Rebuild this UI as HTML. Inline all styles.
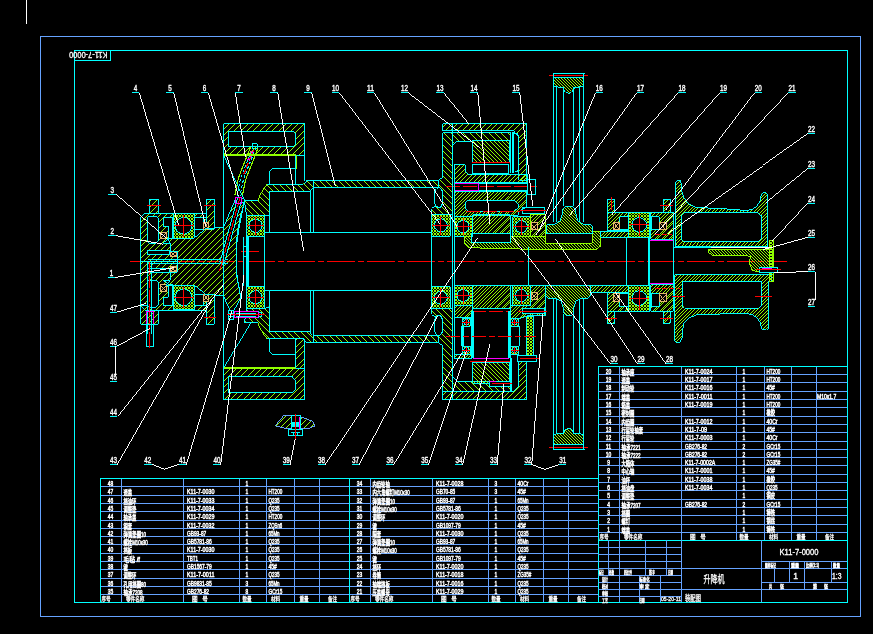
<!DOCTYPE html>
<html><head><meta charset="utf-8"><title>K11-7-0000</title>
<style>
html,body{margin:0;padding:0;background:#000;overflow:hidden}
svg{display:block;will-change:transform;font-family:"Liberation Sans","Noto Sans CJK SC",sans-serif}
</style></head><body>
<svg width="873" height="634" viewBox="0 0 873 634" shape-rendering="crispEdges">
<defs>
<pattern id="h1" width="5.3" height="5.3" patternUnits="userSpaceOnUse"><path d="M-1 6.3 L6.3 -1 M-1 1 L1 -1 M4.3 6.3 L6.3 4.3" stroke="#90ff00" stroke-width="1.1" shape-rendering="crispEdges"/></pattern>
<pattern id="h6" width="6" height="6" patternUnits="userSpaceOnUse"><path d="M-1 7 L7 -1 M-1 1 L1 -1 M5 7 L7 5" stroke="#90ff00" stroke-width="1.1" shape-rendering="crispEdges"/></pattern>
<pattern id="h2" width="3.5" height="3.5" patternUnits="userSpaceOnUse"><path d="M-1 4.5 L4.5 -1 M-1 1 L1 -1 M2.5 4.5 L4.5 2.5" stroke="#90ff00" stroke-width="1.0" shape-rendering="crispEdges"/></pattern>
<pattern id="h44" width="4.4" height="4.4" patternUnits="userSpaceOnUse"><path d="M-1 5.4 L5.4 -1 M-1 1 L1 -1 M3.4000000000000004 5.4 L5.4 3.4000000000000004" stroke="#90ff00" stroke-width="1.0" shape-rendering="crispEdges"/></pattern>
<pattern id="h57" width="5.7" height="5.7" patternUnits="userSpaceOnUse"><path d="M-1 6.7 L6.7 -1 M-1 1 L1 -1 M4.7 6.7 L6.7 4.7" stroke="#90ff00" stroke-width="1.1" shape-rendering="crispEdges"/></pattern>
<pattern id="h3" width="5.5" height="5.5" patternUnits="userSpaceOnUse"><path d="M-1 -1 L6.5 6.5 M4.5 -1 L6.5 1 M-1 4.5 L1 6.5" stroke="#90ff00" stroke-width="1.1" shape-rendering="crispEdges"/></pattern>
<pattern id="h7" width="7" height="7" patternUnits="userSpaceOnUse"><path d="M-1 -1 L8 8 M6 -1 L8 1 M-1 6 L1 8" stroke="#90ff00" stroke-width="1.1" shape-rendering="crispEdges"/></pattern>
<pattern id="h42" width="4.2" height="4.2" patternUnits="userSpaceOnUse"><path d="M-1 -1 L5.2 5.2 M3.2 -1 L5.2 1 M-1 3.2 L1 5.2" stroke="#90ff00" stroke-width="1.0" shape-rendering="crispEdges"/></pattern>
<pattern id="h4" width="3" height="3" patternUnits="userSpaceOnUse"><path d="M-1 -1 L4 4 M2 -1 L4 1 M-1 2 L1 4" stroke="#90ff00" stroke-width="0.95" shape-rendering="crispEdges"/></pattern>
<pattern id="hx" width="3" height="3" patternUnits="userSpaceOnUse"><path d="M-1 -1 L4 4 M-1 4 L4 -1" stroke="#90ff00" stroke-width="0.8" shape-rendering="crispEdges"/></pattern>
</defs>
<rect width="873" height="634" fill="#000"/>
<rect x="26.00" y="0.00" width="1" height="24.00" fill="#ffffff"/>
<rect x="40.5" y="36.5" width="820" height="580" fill="none" stroke="#66a3ff" stroke-width="1"/>
<rect x="74.5" y="50.5" width="773" height="552" fill="none" stroke="#00ffff" stroke-width="1"/>
<rect x="74.00" y="60.00" width="37.00" height="1" fill="#00ffff"/>
<rect x="110.00" y="50.00" width="1" height="11.00" fill="#00ffff"/>
<text transform="translate(107.5,51.5) rotate(180)" x="0" y="0" font-size="9" fill="#ffffff" textLength="38.5" lengthAdjust="spacingAndGlyphs" stroke="#fff" stroke-width="0.3">K11-7-0000</text>
<rect x="100.00" y="486.00" width="249.00" height="1" fill="#66a3ff"/>
<rect x="100.00" y="495.00" width="249.00" height="1" fill="#66a3ff"/>
<rect x="100.00" y="503.00" width="249.00" height="1" fill="#66a3ff"/>
<rect x="100.00" y="511.00" width="249.00" height="1" fill="#66a3ff"/>
<rect x="100.00" y="520.00" width="249.00" height="1" fill="#66a3ff"/>
<rect x="100.00" y="528.00" width="249.00" height="1" fill="#66a3ff"/>
<rect x="100.00" y="536.00" width="249.00" height="1" fill="#66a3ff"/>
<rect x="100.00" y="544.00" width="249.00" height="1" fill="#66a3ff"/>
<rect x="100.00" y="553.00" width="249.00" height="1" fill="#66a3ff"/>
<rect x="100.00" y="561.00" width="249.00" height="1" fill="#66a3ff"/>
<rect x="100.00" y="569.00" width="249.00" height="1" fill="#66a3ff"/>
<rect x="100.00" y="578.00" width="249.00" height="1" fill="#66a3ff"/>
<rect x="100.00" y="586.00" width="249.00" height="1" fill="#66a3ff"/>
<rect x="100.00" y="594.00" width="249.00" height="1" fill="#66a3ff"/>
<rect x="121.00" y="478.00" width="1" height="124.00" fill="#66a3ff"/>
<rect x="183.00" y="478.00" width="1" height="124.00" fill="#66a3ff"/>
<rect x="239.00" y="478.00" width="1" height="124.00" fill="#66a3ff"/>
<rect x="266.00" y="478.00" width="1" height="124.00" fill="#66a3ff"/>
<rect x="294.00" y="478.00" width="1" height="124.00" fill="#66a3ff"/>
<rect x="319.00" y="478.00" width="1" height="124.00" fill="#66a3ff"/>
<text x="110.50" y="485.70" font-size="7" fill="#ffffff" text-anchor="middle" textLength="5.50" lengthAdjust="spacingAndGlyphs" stroke="#fff" stroke-width="0.5">48</text>
<text x="245.50" y="485.70" font-size="7" fill="#ffffff" text-anchor="start" textLength="2.75" lengthAdjust="spacingAndGlyphs" stroke="#fff" stroke-width="0.5">1</text>
<text x="110.50" y="493.70" font-size="7" fill="#ffffff" text-anchor="middle" textLength="5.50" lengthAdjust="spacingAndGlyphs" stroke="#fff" stroke-width="0.5">47</text>
<text x="123.50" y="494.50" font-size="6.3" fill="#ffffff" text-anchor="start" textLength="8.60" lengthAdjust="spacingAndGlyphs" stroke="#fff" stroke-width="0.5">透盖</text>
<text x="187.00" y="493.70" font-size="7" fill="#ffffff" text-anchor="start" textLength="27.50" lengthAdjust="spacingAndGlyphs" stroke="#fff" stroke-width="0.5">K11-7-0030</text>
<text x="245.50" y="493.70" font-size="7" fill="#ffffff" text-anchor="start" textLength="2.75" lengthAdjust="spacingAndGlyphs" stroke="#fff" stroke-width="0.5">1</text>
<text x="268.50" y="493.70" font-size="7" fill="#ffffff" text-anchor="start" textLength="13.75" lengthAdjust="spacingAndGlyphs" stroke="#fff" stroke-width="0.5">HT200</text>
<text x="110.50" y="502.70" font-size="7" fill="#ffffff" text-anchor="middle" textLength="5.50" lengthAdjust="spacingAndGlyphs" stroke="#fff" stroke-width="0.5">46</text>
<text x="123.50" y="503.50" font-size="6.3" fill="#ffffff" text-anchor="start" textLength="12.90" lengthAdjust="spacingAndGlyphs" stroke="#fff" stroke-width="0.5">挡油环</text>
<text x="187.00" y="502.70" font-size="7" fill="#ffffff" text-anchor="start" textLength="27.50" lengthAdjust="spacingAndGlyphs" stroke="#fff" stroke-width="0.5">K11-7-0033</text>
<text x="245.50" y="502.70" font-size="7" fill="#ffffff" text-anchor="start" textLength="2.75" lengthAdjust="spacingAndGlyphs" stroke="#fff" stroke-width="0.5">1</text>
<text x="268.50" y="502.70" font-size="7" fill="#ffffff" text-anchor="start" textLength="11.00" lengthAdjust="spacingAndGlyphs" stroke="#fff" stroke-width="0.5">Q235</text>
<text x="110.50" y="510.70" font-size="7" fill="#ffffff" text-anchor="middle" textLength="5.50" lengthAdjust="spacingAndGlyphs" stroke="#fff" stroke-width="0.5">45</text>
<text x="123.50" y="511.50" font-size="6.3" fill="#ffffff" text-anchor="start" textLength="12.90" lengthAdjust="spacingAndGlyphs" stroke="#fff" stroke-width="0.5">调整垫</text>
<text x="187.00" y="510.70" font-size="7" fill="#ffffff" text-anchor="start" textLength="27.50" lengthAdjust="spacingAndGlyphs" stroke="#fff" stroke-width="0.5">K11-7-0034</text>
<text x="245.50" y="510.70" font-size="7" fill="#ffffff" text-anchor="start" textLength="2.75" lengthAdjust="spacingAndGlyphs" stroke="#fff" stroke-width="0.5">1</text>
<text x="268.50" y="510.70" font-size="7" fill="#ffffff" text-anchor="start" textLength="11.00" lengthAdjust="spacingAndGlyphs" stroke="#fff" stroke-width="0.5">Q235</text>
<text x="110.50" y="518.70" font-size="7" fill="#ffffff" text-anchor="middle" textLength="5.50" lengthAdjust="spacingAndGlyphs" stroke="#fff" stroke-width="0.5">44</text>
<text x="123.50" y="519.50" font-size="6.3" fill="#ffffff" text-anchor="start" textLength="12.90" lengthAdjust="spacingAndGlyphs" stroke="#fff" stroke-width="0.5">轴承盖</text>
<text x="187.00" y="518.70" font-size="7" fill="#ffffff" text-anchor="start" textLength="27.50" lengthAdjust="spacingAndGlyphs" stroke="#fff" stroke-width="0.5">K11-7-0029</text>
<text x="245.50" y="518.70" font-size="7" fill="#ffffff" text-anchor="start" textLength="2.75" lengthAdjust="spacingAndGlyphs" stroke="#fff" stroke-width="0.5">1</text>
<text x="268.50" y="518.70" font-size="7" fill="#ffffff" text-anchor="start" textLength="13.75" lengthAdjust="spacingAndGlyphs" stroke="#fff" stroke-width="0.5">HT200</text>
<text x="110.50" y="527.70" font-size="7" fill="#ffffff" text-anchor="middle" textLength="5.50" lengthAdjust="spacingAndGlyphs" stroke="#fff" stroke-width="0.5">43</text>
<text x="123.50" y="528.50" font-size="6.3" fill="#ffffff" text-anchor="start" textLength="8.60" lengthAdjust="spacingAndGlyphs" stroke="#fff" stroke-width="0.5">铜套</text>
<text x="187.00" y="527.70" font-size="7" fill="#ffffff" text-anchor="start" textLength="27.50" lengthAdjust="spacingAndGlyphs" stroke="#fff" stroke-width="0.5">K11-7-0032</text>
<text x="245.50" y="527.70" font-size="7" fill="#ffffff" text-anchor="start" textLength="2.75" lengthAdjust="spacingAndGlyphs" stroke="#fff" stroke-width="0.5">1</text>
<text x="268.50" y="527.70" font-size="7" fill="#ffffff" text-anchor="start" textLength="13.75" lengthAdjust="spacingAndGlyphs" stroke="#fff" stroke-width="0.5">ZQSn6</text>
<text x="110.50" y="535.70" font-size="7" fill="#ffffff" text-anchor="middle" textLength="5.50" lengthAdjust="spacingAndGlyphs" stroke="#fff" stroke-width="0.5">42</text>
<text x="123.50" y="536.50" font-size="6.3" fill="#ffffff" text-anchor="start" textLength="22.40" lengthAdjust="spacingAndGlyphs" stroke="#fff" stroke-width="0.5">弹簧垫圈10</text>
<text x="187.00" y="535.70" font-size="7" fill="#ffffff" text-anchor="start" textLength="19.25" lengthAdjust="spacingAndGlyphs" stroke="#fff" stroke-width="0.5">GB93-87</text>
<text x="245.50" y="535.70" font-size="7" fill="#ffffff" text-anchor="start" textLength="2.75" lengthAdjust="spacingAndGlyphs" stroke="#fff" stroke-width="0.5">1</text>
<text x="268.50" y="535.70" font-size="7" fill="#ffffff" text-anchor="start" textLength="11.00" lengthAdjust="spacingAndGlyphs" stroke="#fff" stroke-width="0.5">65Mn</text>
<text x="110.50" y="543.70" font-size="7" fill="#ffffff" text-anchor="middle" textLength="5.50" lengthAdjust="spacingAndGlyphs" stroke="#fff" stroke-width="0.5">41</text>
<text x="123.50" y="544.50" font-size="6.3" fill="#ffffff" text-anchor="start" textLength="24.20" lengthAdjust="spacingAndGlyphs" stroke="#fff" stroke-width="0.5">螺栓M10x30</text>
<text x="187.00" y="543.70" font-size="7" fill="#ffffff" text-anchor="start" textLength="24.75" lengthAdjust="spacingAndGlyphs" stroke="#fff" stroke-width="0.5">GB5781-86</text>
<text x="245.50" y="543.70" font-size="7" fill="#ffffff" text-anchor="start" textLength="2.75" lengthAdjust="spacingAndGlyphs" stroke="#fff" stroke-width="0.5">1</text>
<text x="268.50" y="543.70" font-size="7" fill="#ffffff" text-anchor="start" textLength="11.00" lengthAdjust="spacingAndGlyphs" stroke="#fff" stroke-width="0.5">Q235</text>
<text x="110.50" y="551.70" font-size="7" fill="#ffffff" text-anchor="middle" textLength="5.50" lengthAdjust="spacingAndGlyphs" stroke="#fff" stroke-width="0.5">40</text>
<text x="123.50" y="552.50" font-size="6.3" fill="#ffffff" text-anchor="start" textLength="8.60" lengthAdjust="spacingAndGlyphs" stroke="#fff" stroke-width="0.5">挡板</text>
<text x="187.00" y="551.70" font-size="7" fill="#ffffff" text-anchor="start" textLength="27.50" lengthAdjust="spacingAndGlyphs" stroke="#fff" stroke-width="0.5">K11-7-0030</text>
<text x="245.50" y="551.70" font-size="7" fill="#ffffff" text-anchor="start" textLength="2.75" lengthAdjust="spacingAndGlyphs" stroke="#fff" stroke-width="0.5">1</text>
<text x="268.50" y="551.70" font-size="7" fill="#ffffff" text-anchor="start" textLength="11.00" lengthAdjust="spacingAndGlyphs" stroke="#fff" stroke-width="0.5">Q235</text>
<text x="110.50" y="560.70" font-size="7" fill="#ffffff" text-anchor="middle" textLength="5.50" lengthAdjust="spacingAndGlyphs" stroke="#fff" stroke-width="0.5">39</text>
<text x="123.50" y="561.50" font-size="6.3" fill="#ffffff" text-anchor="start" textLength="16.40" lengthAdjust="spacingAndGlyphs" stroke="#fff" stroke-width="0.5">毛毡 /f</text>
<text x="187.00" y="560.70" font-size="7" fill="#ffffff" text-anchor="start" textLength="11.00" lengthAdjust="spacingAndGlyphs" stroke="#fff" stroke-width="0.5">TBT1</text>
<text x="245.50" y="560.70" font-size="7" fill="#ffffff" text-anchor="start" textLength="2.75" lengthAdjust="spacingAndGlyphs" stroke="#fff" stroke-width="0.5">1</text>
<text x="268.50" y="560.70" font-size="7" fill="#ffffff" text-anchor="start" textLength="11.00" lengthAdjust="spacingAndGlyphs" stroke="#fff" stroke-width="0.5">Q235</text>
<text x="110.50" y="568.70" font-size="7" fill="#ffffff" text-anchor="middle" textLength="5.50" lengthAdjust="spacingAndGlyphs" stroke="#fff" stroke-width="0.5">38</text>
<text x="123.50" y="569.50" font-size="6.3" fill="#ffffff" text-anchor="start" textLength="4.30" lengthAdjust="spacingAndGlyphs" stroke="#fff" stroke-width="0.5">键</text>
<text x="187.00" y="568.70" font-size="7" fill="#ffffff" text-anchor="start" textLength="24.75" lengthAdjust="spacingAndGlyphs" stroke="#fff" stroke-width="0.5">GB1567-79</text>
<text x="245.50" y="568.70" font-size="7" fill="#ffffff" text-anchor="start" textLength="2.75" lengthAdjust="spacingAndGlyphs" stroke="#fff" stroke-width="0.5">1</text>
<text x="268.50" y="568.70" font-size="7" fill="#ffffff" text-anchor="start" textLength="8.25" lengthAdjust="spacingAndGlyphs" stroke="#fff" stroke-width="0.5">45#</text>
<text x="110.50" y="576.70" font-size="7" fill="#ffffff" text-anchor="middle" textLength="5.50" lengthAdjust="spacingAndGlyphs" stroke="#fff" stroke-width="0.5">37</text>
<text x="123.50" y="577.50" font-size="6.3" fill="#ffffff" text-anchor="start" textLength="12.90" lengthAdjust="spacingAndGlyphs" stroke="#fff" stroke-width="0.5">调整环</text>
<text x="187.00" y="576.70" font-size="7" fill="#ffffff" text-anchor="start" textLength="27.50" lengthAdjust="spacingAndGlyphs" stroke="#fff" stroke-width="0.5">K11-7-0011</text>
<text x="245.50" y="576.70" font-size="7" fill="#ffffff" text-anchor="start" textLength="2.75" lengthAdjust="spacingAndGlyphs" stroke="#fff" stroke-width="0.5">1</text>
<text x="268.50" y="576.70" font-size="7" fill="#ffffff" text-anchor="start" textLength="11.00" lengthAdjust="spacingAndGlyphs" stroke="#fff" stroke-width="0.5">Q235</text>
<text x="110.50" y="585.70" font-size="7" fill="#ffffff" text-anchor="middle" textLength="5.50" lengthAdjust="spacingAndGlyphs" stroke="#fff" stroke-width="0.5">36</text>
<text x="123.50" y="586.50" font-size="6.3" fill="#ffffff" text-anchor="start" textLength="22.40" lengthAdjust="spacingAndGlyphs" stroke="#fff" stroke-width="0.5">孔用挡圈80</text>
<text x="187.00" y="585.70" font-size="7" fill="#ffffff" text-anchor="start" textLength="24.75" lengthAdjust="spacingAndGlyphs" stroke="#fff" stroke-width="0.5">GB9831-85</text>
<text x="245.50" y="585.70" font-size="7" fill="#ffffff" text-anchor="start" textLength="2.75" lengthAdjust="spacingAndGlyphs" stroke="#fff" stroke-width="0.5">3</text>
<text x="268.50" y="585.70" font-size="7" fill="#ffffff" text-anchor="start" textLength="11.00" lengthAdjust="spacingAndGlyphs" stroke="#fff" stroke-width="0.5">65Mn</text>
<text x="110.50" y="593.70" font-size="7" fill="#ffffff" text-anchor="middle" textLength="5.50" lengthAdjust="spacingAndGlyphs" stroke="#fff" stroke-width="0.5">35</text>
<text x="123.50" y="594.50" font-size="6.3" fill="#ffffff" text-anchor="start" textLength="19.00" lengthAdjust="spacingAndGlyphs" stroke="#fff" stroke-width="0.5">轴承7208</text>
<text x="187.00" y="593.70" font-size="7" fill="#ffffff" text-anchor="start" textLength="22.00" lengthAdjust="spacingAndGlyphs" stroke="#fff" stroke-width="0.5">GB276-82</text>
<text x="245.50" y="593.70" font-size="7" fill="#ffffff" text-anchor="start" textLength="2.75" lengthAdjust="spacingAndGlyphs" stroke="#fff" stroke-width="0.5">8</text>
<text x="268.50" y="593.70" font-size="7" fill="#ffffff" text-anchor="start" textLength="13.75" lengthAdjust="spacingAndGlyphs" stroke="#fff" stroke-width="0.5">GCr15</text>
<text x="101.50" y="601.30" font-size="6" fill="#ffffff" text-anchor="start" textLength="9.20" lengthAdjust="spacingAndGlyphs" stroke="#fff" stroke-width="0.3" xml:space="preserve">序号</text>
<text x="126.00" y="601.30" font-size="6" fill="#ffffff" text-anchor="start" textLength="18.40" lengthAdjust="spacingAndGlyphs" stroke="#fff" stroke-width="0.3" xml:space="preserve">零件名称</text>
<text x="192.00" y="601.30" font-size="6" fill="#ffffff" text-anchor="start" textLength="15.80" lengthAdjust="spacingAndGlyphs" stroke="#fff" stroke-width="0.3" xml:space="preserve">图   号</text>
<text x="242.50" y="601.30" font-size="6" fill="#ffffff" text-anchor="start" textLength="9.20" lengthAdjust="spacingAndGlyphs" stroke="#fff" stroke-width="0.3" xml:space="preserve">数量</text>
<text x="271.00" y="601.30" font-size="6" fill="#ffffff" text-anchor="start" textLength="9.20" lengthAdjust="spacingAndGlyphs" stroke="#fff" stroke-width="0.3" xml:space="preserve">材料</text>
<text x="299.50" y="601.30" font-size="6" fill="#ffffff" text-anchor="start" textLength="9.20" lengthAdjust="spacingAndGlyphs" stroke="#fff" stroke-width="0.3" xml:space="preserve">重量</text>
<text x="328.00" y="601.30" font-size="6" fill="#ffffff" text-anchor="start" textLength="9.20" lengthAdjust="spacingAndGlyphs" stroke="#fff" stroke-width="0.3" xml:space="preserve">备注</text>
<rect x="349.00" y="486.00" width="249.00" height="1" fill="#66a3ff"/>
<rect x="349.00" y="495.00" width="249.00" height="1" fill="#66a3ff"/>
<rect x="349.00" y="503.00" width="249.00" height="1" fill="#66a3ff"/>
<rect x="349.00" y="511.00" width="249.00" height="1" fill="#66a3ff"/>
<rect x="349.00" y="520.00" width="249.00" height="1" fill="#66a3ff"/>
<rect x="349.00" y="528.00" width="249.00" height="1" fill="#66a3ff"/>
<rect x="349.00" y="536.00" width="249.00" height="1" fill="#66a3ff"/>
<rect x="349.00" y="544.00" width="249.00" height="1" fill="#66a3ff"/>
<rect x="349.00" y="553.00" width="249.00" height="1" fill="#66a3ff"/>
<rect x="349.00" y="561.00" width="249.00" height="1" fill="#66a3ff"/>
<rect x="349.00" y="569.00" width="249.00" height="1" fill="#66a3ff"/>
<rect x="349.00" y="578.00" width="249.00" height="1" fill="#66a3ff"/>
<rect x="349.00" y="586.00" width="249.00" height="1" fill="#66a3ff"/>
<rect x="349.00" y="594.00" width="249.00" height="1" fill="#66a3ff"/>
<rect x="370.00" y="478.00" width="1" height="124.00" fill="#66a3ff"/>
<rect x="432.00" y="478.00" width="1" height="124.00" fill="#66a3ff"/>
<rect x="488.00" y="478.00" width="1" height="124.00" fill="#66a3ff"/>
<rect x="515.00" y="478.00" width="1" height="124.00" fill="#66a3ff"/>
<rect x="543.00" y="478.00" width="1" height="124.00" fill="#66a3ff"/>
<rect x="568.00" y="478.00" width="1" height="124.00" fill="#66a3ff"/>
<text x="359.50" y="485.70" font-size="7" fill="#ffffff" text-anchor="middle" textLength="5.50" lengthAdjust="spacingAndGlyphs" stroke="#fff" stroke-width="0.5">34</text>
<text x="372.50" y="486.50" font-size="6.3" fill="#ffffff" text-anchor="start" textLength="17.20" lengthAdjust="spacingAndGlyphs" stroke="#fff" stroke-width="0.5">内齿轮轴</text>
<text x="436.00" y="485.70" font-size="7" fill="#ffffff" text-anchor="start" textLength="27.50" lengthAdjust="spacingAndGlyphs" stroke="#fff" stroke-width="0.5">K11-7-0028</text>
<text x="494.50" y="485.70" font-size="7" fill="#ffffff" text-anchor="start" textLength="2.75" lengthAdjust="spacingAndGlyphs" stroke="#fff" stroke-width="0.5">3</text>
<text x="517.50" y="485.70" font-size="7" fill="#ffffff" text-anchor="start" textLength="11.00" lengthAdjust="spacingAndGlyphs" stroke="#fff" stroke-width="0.5">40Cr</text>
<text x="359.50" y="493.70" font-size="7" fill="#ffffff" text-anchor="middle" textLength="5.50" lengthAdjust="spacingAndGlyphs" stroke="#fff" stroke-width="0.5">33</text>
<text x="372.50" y="494.50" font-size="6.3" fill="#ffffff" text-anchor="start" textLength="37.10" lengthAdjust="spacingAndGlyphs" stroke="#fff" stroke-width="0.5">内六角螺钉M10x30</text>
<text x="436.00" y="493.70" font-size="7" fill="#ffffff" text-anchor="start" textLength="19.25" lengthAdjust="spacingAndGlyphs" stroke="#fff" stroke-width="0.5">GB70-85</text>
<text x="494.50" y="493.70" font-size="7" fill="#ffffff" text-anchor="start" textLength="2.75" lengthAdjust="spacingAndGlyphs" stroke="#fff" stroke-width="0.5">3</text>
<text x="517.50" y="493.70" font-size="7" fill="#ffffff" text-anchor="start" textLength="8.25" lengthAdjust="spacingAndGlyphs" stroke="#fff" stroke-width="0.5">45#</text>
<text x="359.50" y="502.70" font-size="7" fill="#ffffff" text-anchor="middle" textLength="5.50" lengthAdjust="spacingAndGlyphs" stroke="#fff" stroke-width="0.5">32</text>
<text x="372.50" y="503.50" font-size="6.3" fill="#ffffff" text-anchor="start" textLength="22.40" lengthAdjust="spacingAndGlyphs" stroke="#fff" stroke-width="0.5">弹簧垫圈10</text>
<text x="436.00" y="502.70" font-size="7" fill="#ffffff" text-anchor="start" textLength="19.25" lengthAdjust="spacingAndGlyphs" stroke="#fff" stroke-width="0.5">GB93-87</text>
<text x="494.50" y="502.70" font-size="7" fill="#ffffff" text-anchor="start" textLength="2.75" lengthAdjust="spacingAndGlyphs" stroke="#fff" stroke-width="0.5">1</text>
<text x="517.50" y="502.70" font-size="7" fill="#ffffff" text-anchor="start" textLength="11.00" lengthAdjust="spacingAndGlyphs" stroke="#fff" stroke-width="0.5">65Mn</text>
<text x="359.50" y="510.70" font-size="7" fill="#ffffff" text-anchor="middle" textLength="5.50" lengthAdjust="spacingAndGlyphs" stroke="#fff" stroke-width="0.5">31</text>
<text x="372.50" y="511.50" font-size="6.3" fill="#ffffff" text-anchor="start" textLength="24.20" lengthAdjust="spacingAndGlyphs" stroke="#fff" stroke-width="0.5">螺栓M10x30</text>
<text x="436.00" y="510.70" font-size="7" fill="#ffffff" text-anchor="start" textLength="24.75" lengthAdjust="spacingAndGlyphs" stroke="#fff" stroke-width="0.5">GB5781-86</text>
<text x="494.50" y="510.70" font-size="7" fill="#ffffff" text-anchor="start" textLength="2.75" lengthAdjust="spacingAndGlyphs" stroke="#fff" stroke-width="0.5">1</text>
<text x="517.50" y="510.70" font-size="7" fill="#ffffff" text-anchor="start" textLength="11.00" lengthAdjust="spacingAndGlyphs" stroke="#fff" stroke-width="0.5">Q235</text>
<text x="359.50" y="518.70" font-size="7" fill="#ffffff" text-anchor="middle" textLength="5.50" lengthAdjust="spacingAndGlyphs" stroke="#fff" stroke-width="0.5">30</text>
<text x="372.50" y="519.50" font-size="6.3" fill="#ffffff" text-anchor="start" textLength="12.90" lengthAdjust="spacingAndGlyphs" stroke="#fff" stroke-width="0.5">调整环</text>
<text x="436.00" y="518.70" font-size="7" fill="#ffffff" text-anchor="start" textLength="27.50" lengthAdjust="spacingAndGlyphs" stroke="#fff" stroke-width="0.5">K11-7-0020</text>
<text x="494.50" y="518.70" font-size="7" fill="#ffffff" text-anchor="start" textLength="2.75" lengthAdjust="spacingAndGlyphs" stroke="#fff" stroke-width="0.5">1</text>
<text x="517.50" y="518.70" font-size="7" fill="#ffffff" text-anchor="start" textLength="11.00" lengthAdjust="spacingAndGlyphs" stroke="#fff" stroke-width="0.5">Q235</text>
<text x="359.50" y="527.70" font-size="7" fill="#ffffff" text-anchor="middle" textLength="5.50" lengthAdjust="spacingAndGlyphs" stroke="#fff" stroke-width="0.5">29</text>
<text x="372.50" y="528.50" font-size="6.3" fill="#ffffff" text-anchor="start" textLength="4.30" lengthAdjust="spacingAndGlyphs" stroke="#fff" stroke-width="0.5">键</text>
<text x="436.00" y="527.70" font-size="7" fill="#ffffff" text-anchor="start" textLength="24.75" lengthAdjust="spacingAndGlyphs" stroke="#fff" stroke-width="0.5">GB1097-79</text>
<text x="494.50" y="527.70" font-size="7" fill="#ffffff" text-anchor="start" textLength="2.75" lengthAdjust="spacingAndGlyphs" stroke="#fff" stroke-width="0.5">1</text>
<text x="517.50" y="527.70" font-size="7" fill="#ffffff" text-anchor="start" textLength="8.25" lengthAdjust="spacingAndGlyphs" stroke="#fff" stroke-width="0.5">45#</text>
<text x="359.50" y="535.70" font-size="7" fill="#ffffff" text-anchor="middle" textLength="5.50" lengthAdjust="spacingAndGlyphs" stroke="#fff" stroke-width="0.5">28</text>
<text x="372.50" y="536.50" font-size="6.3" fill="#ffffff" text-anchor="start" textLength="8.60" lengthAdjust="spacingAndGlyphs" stroke="#fff" stroke-width="0.5">隔套</text>
<text x="436.00" y="535.70" font-size="7" fill="#ffffff" text-anchor="start" textLength="27.50" lengthAdjust="spacingAndGlyphs" stroke="#fff" stroke-width="0.5">K11-7-0030</text>
<text x="494.50" y="535.70" font-size="7" fill="#ffffff" text-anchor="start" textLength="2.75" lengthAdjust="spacingAndGlyphs" stroke="#fff" stroke-width="0.5">1</text>
<text x="517.50" y="535.70" font-size="7" fill="#ffffff" text-anchor="start" textLength="11.00" lengthAdjust="spacingAndGlyphs" stroke="#fff" stroke-width="0.5">Q235</text>
<text x="359.50" y="543.70" font-size="7" fill="#ffffff" text-anchor="middle" textLength="5.50" lengthAdjust="spacingAndGlyphs" stroke="#fff" stroke-width="0.5">27</text>
<text x="372.50" y="544.50" font-size="6.3" fill="#ffffff" text-anchor="start" textLength="22.40" lengthAdjust="spacingAndGlyphs" stroke="#fff" stroke-width="0.5">弹簧垫圈10</text>
<text x="436.00" y="543.70" font-size="7" fill="#ffffff" text-anchor="start" textLength="19.25" lengthAdjust="spacingAndGlyphs" stroke="#fff" stroke-width="0.5">GB93-87</text>
<text x="494.50" y="543.70" font-size="7" fill="#ffffff" text-anchor="start" textLength="2.75" lengthAdjust="spacingAndGlyphs" stroke="#fff" stroke-width="0.5">1</text>
<text x="517.50" y="543.70" font-size="7" fill="#ffffff" text-anchor="start" textLength="11.00" lengthAdjust="spacingAndGlyphs" stroke="#fff" stroke-width="0.5">65Mn</text>
<text x="359.50" y="551.70" font-size="7" fill="#ffffff" text-anchor="middle" textLength="5.50" lengthAdjust="spacingAndGlyphs" stroke="#fff" stroke-width="0.5">26</text>
<text x="372.50" y="552.50" font-size="6.3" fill="#ffffff" text-anchor="start" textLength="24.20" lengthAdjust="spacingAndGlyphs" stroke="#fff" stroke-width="0.5">螺栓M10x30</text>
<text x="436.00" y="551.70" font-size="7" fill="#ffffff" text-anchor="start" textLength="24.75" lengthAdjust="spacingAndGlyphs" stroke="#fff" stroke-width="0.5">GB5781-86</text>
<text x="494.50" y="551.70" font-size="7" fill="#ffffff" text-anchor="start" textLength="2.75" lengthAdjust="spacingAndGlyphs" stroke="#fff" stroke-width="0.5">1</text>
<text x="517.50" y="551.70" font-size="7" fill="#ffffff" text-anchor="start" textLength="11.00" lengthAdjust="spacingAndGlyphs" stroke="#fff" stroke-width="0.5">Q235</text>
<text x="359.50" y="560.70" font-size="7" fill="#ffffff" text-anchor="middle" textLength="5.50" lengthAdjust="spacingAndGlyphs" stroke="#fff" stroke-width="0.5">25</text>
<text x="372.50" y="561.50" font-size="6.3" fill="#ffffff" text-anchor="start" textLength="4.30" lengthAdjust="spacingAndGlyphs" stroke="#fff" stroke-width="0.5">键</text>
<text x="436.00" y="560.70" font-size="7" fill="#ffffff" text-anchor="start" textLength="24.75" lengthAdjust="spacingAndGlyphs" stroke="#fff" stroke-width="0.5">GB1097-79</text>
<text x="494.50" y="560.70" font-size="7" fill="#ffffff" text-anchor="start" textLength="2.75" lengthAdjust="spacingAndGlyphs" stroke="#fff" stroke-width="0.5">1</text>
<text x="517.50" y="560.70" font-size="7" fill="#ffffff" text-anchor="start" textLength="8.25" lengthAdjust="spacingAndGlyphs" stroke="#fff" stroke-width="0.5">45#</text>
<text x="359.50" y="568.70" font-size="7" fill="#ffffff" text-anchor="middle" textLength="5.50" lengthAdjust="spacingAndGlyphs" stroke="#fff" stroke-width="0.5">24</text>
<text x="372.50" y="569.50" font-size="6.3" fill="#ffffff" text-anchor="start" textLength="8.60" lengthAdjust="spacingAndGlyphs" stroke="#fff" stroke-width="0.5">挡环</text>
<text x="436.00" y="568.70" font-size="7" fill="#ffffff" text-anchor="start" textLength="27.50" lengthAdjust="spacingAndGlyphs" stroke="#fff" stroke-width="0.5">K11-7-0020</text>
<text x="494.50" y="568.70" font-size="7" fill="#ffffff" text-anchor="start" textLength="2.75" lengthAdjust="spacingAndGlyphs" stroke="#fff" stroke-width="0.5">1</text>
<text x="517.50" y="568.70" font-size="7" fill="#ffffff" text-anchor="start" textLength="11.00" lengthAdjust="spacingAndGlyphs" stroke="#fff" stroke-width="0.5">Q235</text>
<text x="359.50" y="576.70" font-size="7" fill="#ffffff" text-anchor="middle" textLength="5.50" lengthAdjust="spacingAndGlyphs" stroke="#fff" stroke-width="0.5">23</text>
<text x="372.50" y="577.50" font-size="6.3" fill="#ffffff" text-anchor="start" textLength="8.60" lengthAdjust="spacingAndGlyphs" stroke="#fff" stroke-width="0.5">卷筒</text>
<text x="436.00" y="576.70" font-size="7" fill="#ffffff" text-anchor="start" textLength="27.50" lengthAdjust="spacingAndGlyphs" stroke="#fff" stroke-width="0.5">K11-7-0018</text>
<text x="494.50" y="576.70" font-size="7" fill="#ffffff" text-anchor="start" textLength="2.75" lengthAdjust="spacingAndGlyphs" stroke="#fff" stroke-width="0.5">1</text>
<text x="517.50" y="576.70" font-size="7" fill="#ffffff" text-anchor="start" textLength="13.75" lengthAdjust="spacingAndGlyphs" stroke="#fff" stroke-width="0.5">ZG35#</text>
<text x="359.50" y="585.70" font-size="7" fill="#ffffff" text-anchor="middle" textLength="5.50" lengthAdjust="spacingAndGlyphs" stroke="#fff" stroke-width="0.5">22</text>
<text x="372.50" y="586.50" font-size="6.3" fill="#ffffff" text-anchor="start" textLength="17.20" lengthAdjust="spacingAndGlyphs" stroke="#fff" stroke-width="0.5">轴端挡板</text>
<text x="436.00" y="585.70" font-size="7" fill="#ffffff" text-anchor="start" textLength="27.50" lengthAdjust="spacingAndGlyphs" stroke="#fff" stroke-width="0.5">K11-7-0016</text>
<text x="494.50" y="585.70" font-size="7" fill="#ffffff" text-anchor="start" textLength="2.75" lengthAdjust="spacingAndGlyphs" stroke="#fff" stroke-width="0.5">1</text>
<text x="517.50" y="585.70" font-size="7" fill="#ffffff" text-anchor="start" textLength="11.00" lengthAdjust="spacingAndGlyphs" stroke="#fff" stroke-width="0.5">Q235</text>
<text x="359.50" y="593.70" font-size="7" fill="#ffffff" text-anchor="middle" textLength="5.50" lengthAdjust="spacingAndGlyphs" stroke="#fff" stroke-width="0.5">21</text>
<text x="372.50" y="594.50" font-size="6.3" fill="#ffffff" text-anchor="start" textLength="17.20" lengthAdjust="spacingAndGlyphs" stroke="#fff" stroke-width="0.5">压盖螺母</text>
<text x="436.00" y="593.70" font-size="7" fill="#ffffff" text-anchor="start" textLength="27.50" lengthAdjust="spacingAndGlyphs" stroke="#fff" stroke-width="0.5">K11-7-0029</text>
<text x="494.50" y="593.70" font-size="7" fill="#ffffff" text-anchor="start" textLength="2.75" lengthAdjust="spacingAndGlyphs" stroke="#fff" stroke-width="0.5">1</text>
<text x="517.50" y="593.70" font-size="7" fill="#ffffff" text-anchor="start" textLength="11.00" lengthAdjust="spacingAndGlyphs" stroke="#fff" stroke-width="0.5">Q235</text>
<text x="350.50" y="601.30" font-size="6" fill="#ffffff" text-anchor="start" textLength="9.20" lengthAdjust="spacingAndGlyphs" stroke="#fff" stroke-width="0.3" xml:space="preserve">序号</text>
<text x="375.00" y="601.30" font-size="6" fill="#ffffff" text-anchor="start" textLength="18.40" lengthAdjust="spacingAndGlyphs" stroke="#fff" stroke-width="0.3" xml:space="preserve">零件名称</text>
<text x="441.00" y="601.30" font-size="6" fill="#ffffff" text-anchor="start" textLength="15.80" lengthAdjust="spacingAndGlyphs" stroke="#fff" stroke-width="0.3" xml:space="preserve">图   号</text>
<text x="491.50" y="601.30" font-size="6" fill="#ffffff" text-anchor="start" textLength="9.20" lengthAdjust="spacingAndGlyphs" stroke="#fff" stroke-width="0.3" xml:space="preserve">数量</text>
<text x="520.00" y="601.30" font-size="6" fill="#ffffff" text-anchor="start" textLength="9.20" lengthAdjust="spacingAndGlyphs" stroke="#fff" stroke-width="0.3" xml:space="preserve">材料</text>
<text x="548.50" y="601.30" font-size="6" fill="#ffffff" text-anchor="start" textLength="9.20" lengthAdjust="spacingAndGlyphs" stroke="#fff" stroke-width="0.3" xml:space="preserve">重量</text>
<text x="577.00" y="601.30" font-size="6" fill="#ffffff" text-anchor="start" textLength="9.20" lengthAdjust="spacingAndGlyphs" stroke="#fff" stroke-width="0.3" xml:space="preserve">备注</text>
<rect x="100.00" y="478.00" width="498.50" height="1" fill="#00ffff"/>
<rect x="100.00" y="478.00" width="1" height="124.00" fill="#00ffff"/>
<rect x="349.00" y="478.00" width="1" height="124.00" fill="#00ffff"/>
<rect x="598.00" y="366.00" width="1" height="236.00" fill="#00ffff"/>
<rect x="598.00" y="374.00" width="249.00" height="1" fill="#66a3ff"/>
<rect x="598.00" y="382.00" width="249.00" height="1" fill="#66a3ff"/>
<rect x="598.00" y="391.00" width="249.00" height="1" fill="#66a3ff"/>
<rect x="598.00" y="399.00" width="249.00" height="1" fill="#66a3ff"/>
<rect x="598.00" y="407.00" width="249.00" height="1" fill="#66a3ff"/>
<rect x="598.00" y="416.00" width="249.00" height="1" fill="#66a3ff"/>
<rect x="598.00" y="424.00" width="249.00" height="1" fill="#66a3ff"/>
<rect x="598.00" y="432.00" width="249.00" height="1" fill="#66a3ff"/>
<rect x="598.00" y="441.00" width="249.00" height="1" fill="#66a3ff"/>
<rect x="598.00" y="449.00" width="249.00" height="1" fill="#66a3ff"/>
<rect x="598.00" y="457.00" width="249.00" height="1" fill="#66a3ff"/>
<rect x="598.00" y="465.00" width="249.00" height="1" fill="#66a3ff"/>
<rect x="598.00" y="474.00" width="249.00" height="1" fill="#66a3ff"/>
<rect x="598.00" y="482.00" width="249.00" height="1" fill="#66a3ff"/>
<rect x="598.00" y="490.00" width="249.00" height="1" fill="#66a3ff"/>
<rect x="598.00" y="499.00" width="249.00" height="1" fill="#66a3ff"/>
<rect x="598.00" y="507.00" width="249.00" height="1" fill="#66a3ff"/>
<rect x="598.00" y="515.00" width="249.00" height="1" fill="#66a3ff"/>
<rect x="598.00" y="524.00" width="249.00" height="1" fill="#66a3ff"/>
<rect x="598.00" y="532.00" width="249.00" height="1" fill="#66a3ff"/>
<rect x="619.00" y="366.00" width="1" height="174.00" fill="#66a3ff"/>
<rect x="681.00" y="366.00" width="1" height="174.00" fill="#66a3ff"/>
<rect x="736.00" y="366.00" width="1" height="174.00" fill="#66a3ff"/>
<rect x="764.00" y="366.00" width="1" height="174.00" fill="#66a3ff"/>
<rect x="791.00" y="366.00" width="1" height="174.00" fill="#66a3ff"/>
<rect x="816.00" y="366.00" width="1" height="174.00" fill="#66a3ff"/>
<text x="608.50" y="373.70" font-size="7" fill="#ffffff" text-anchor="middle" textLength="5.50" lengthAdjust="spacingAndGlyphs" stroke="#fff" stroke-width="0.5">20</text>
<text x="621.50" y="374.50" font-size="6.3" fill="#ffffff" text-anchor="start" textLength="12.90" lengthAdjust="spacingAndGlyphs" stroke="#fff" stroke-width="0.5">轴承座</text>
<text x="685.00" y="373.70" font-size="7" fill="#ffffff" text-anchor="start" textLength="27.50" lengthAdjust="spacingAndGlyphs" stroke="#fff" stroke-width="0.5">K11-7-0024</text>
<text x="742.50" y="373.70" font-size="7" fill="#ffffff" text-anchor="start" textLength="2.75" lengthAdjust="spacingAndGlyphs" stroke="#fff" stroke-width="0.5">1</text>
<text x="766.50" y="373.70" font-size="7" fill="#ffffff" text-anchor="start" textLength="13.75" lengthAdjust="spacingAndGlyphs" stroke="#fff" stroke-width="0.5">HT200</text>
<text x="608.50" y="381.70" font-size="7" fill="#ffffff" text-anchor="middle" textLength="5.50" lengthAdjust="spacingAndGlyphs" stroke="#fff" stroke-width="0.5">19</text>
<text x="621.50" y="382.50" font-size="6.3" fill="#ffffff" text-anchor="start" textLength="8.60" lengthAdjust="spacingAndGlyphs" stroke="#fff" stroke-width="0.5">透盖</text>
<text x="685.00" y="381.70" font-size="7" fill="#ffffff" text-anchor="start" textLength="27.50" lengthAdjust="spacingAndGlyphs" stroke="#fff" stroke-width="0.5">K11-7-0017</text>
<text x="742.50" y="381.70" font-size="7" fill="#ffffff" text-anchor="start" textLength="2.75" lengthAdjust="spacingAndGlyphs" stroke="#fff" stroke-width="0.5">1</text>
<text x="766.50" y="381.70" font-size="7" fill="#ffffff" text-anchor="start" textLength="13.75" lengthAdjust="spacingAndGlyphs" stroke="#fff" stroke-width="0.5">HT200</text>
<text x="608.50" y="389.70" font-size="7" fill="#ffffff" text-anchor="middle" textLength="5.50" lengthAdjust="spacingAndGlyphs" stroke="#fff" stroke-width="0.5">18</text>
<text x="621.50" y="390.50" font-size="6.3" fill="#ffffff" text-anchor="start" textLength="12.90" lengthAdjust="spacingAndGlyphs" stroke="#fff" stroke-width="0.5">制动轮</text>
<text x="685.00" y="389.70" font-size="7" fill="#ffffff" text-anchor="start" textLength="27.50" lengthAdjust="spacingAndGlyphs" stroke="#fff" stroke-width="0.5">K11-7-0016</text>
<text x="742.50" y="389.70" font-size="7" fill="#ffffff" text-anchor="start" textLength="2.75" lengthAdjust="spacingAndGlyphs" stroke="#fff" stroke-width="0.5">1</text>
<text x="766.50" y="389.70" font-size="7" fill="#ffffff" text-anchor="start" textLength="8.25" lengthAdjust="spacingAndGlyphs" stroke="#fff" stroke-width="0.5">45#</text>
<text x="608.50" y="398.70" font-size="7" fill="#ffffff" text-anchor="middle" textLength="5.50" lengthAdjust="spacingAndGlyphs" stroke="#fff" stroke-width="0.5">17</text>
<text x="621.50" y="399.50" font-size="6.3" fill="#ffffff" text-anchor="start" textLength="8.60" lengthAdjust="spacingAndGlyphs" stroke="#fff" stroke-width="0.5">端盖</text>
<text x="685.00" y="398.70" font-size="7" fill="#ffffff" text-anchor="start" textLength="27.50" lengthAdjust="spacingAndGlyphs" stroke="#fff" stroke-width="0.5">K11-7-0011</text>
<text x="742.50" y="398.70" font-size="7" fill="#ffffff" text-anchor="start" textLength="2.75" lengthAdjust="spacingAndGlyphs" stroke="#fff" stroke-width="0.5">1</text>
<text x="766.50" y="398.70" font-size="7" fill="#ffffff" text-anchor="start" textLength="13.75" lengthAdjust="spacingAndGlyphs" stroke="#fff" stroke-width="0.5">HT200</text>
<text x="817.00" y="398.70" font-size="7" fill="#ffffff" text-anchor="start" textLength="19.25" lengthAdjust="spacingAndGlyphs" stroke="#fff" stroke-width="0.5">M10x1.7</text>
<text x="608.50" y="406.70" font-size="7" fill="#ffffff" text-anchor="middle" textLength="5.50" lengthAdjust="spacingAndGlyphs" stroke="#fff" stroke-width="0.5">16</text>
<text x="621.50" y="407.50" font-size="6.3" fill="#ffffff" text-anchor="start" textLength="8.60" lengthAdjust="spacingAndGlyphs" stroke="#fff" stroke-width="0.5">箱盖</text>
<text x="685.00" y="406.70" font-size="7" fill="#ffffff" text-anchor="start" textLength="27.50" lengthAdjust="spacingAndGlyphs" stroke="#fff" stroke-width="0.5">K11-7-0019</text>
<text x="742.50" y="406.70" font-size="7" fill="#ffffff" text-anchor="start" textLength="2.75" lengthAdjust="spacingAndGlyphs" stroke="#fff" stroke-width="0.5">1</text>
<text x="766.50" y="406.70" font-size="7" fill="#ffffff" text-anchor="start" textLength="13.75" lengthAdjust="spacingAndGlyphs" stroke="#fff" stroke-width="0.5">HT200</text>
<text x="608.50" y="414.70" font-size="7" fill="#ffffff" text-anchor="middle" textLength="5.50" lengthAdjust="spacingAndGlyphs" stroke="#fff" stroke-width="0.5">15</text>
<text x="621.50" y="415.50" font-size="6.3" fill="#ffffff" text-anchor="start" textLength="12.90" lengthAdjust="spacingAndGlyphs" stroke="#fff" stroke-width="0.5">密封圈</text>
<text x="742.50" y="414.70" font-size="7" fill="#ffffff" text-anchor="start" textLength="2.75" lengthAdjust="spacingAndGlyphs" stroke="#fff" stroke-width="0.5">1</text>
<text x="766.50" y="415.30" font-size="6.3" fill="#ffffff" text-anchor="start" textLength="8.60" lengthAdjust="spacingAndGlyphs" stroke="#fff" stroke-width="0.5">橡胶</text>
<text x="608.50" y="423.70" font-size="7" fill="#ffffff" text-anchor="middle" textLength="5.50" lengthAdjust="spacingAndGlyphs" stroke="#fff" stroke-width="0.5">14</text>
<text x="621.50" y="424.50" font-size="6.3" fill="#ffffff" text-anchor="start" textLength="12.90" lengthAdjust="spacingAndGlyphs" stroke="#fff" stroke-width="0.5">内齿圈</text>
<text x="685.00" y="423.70" font-size="7" fill="#ffffff" text-anchor="start" textLength="27.50" lengthAdjust="spacingAndGlyphs" stroke="#fff" stroke-width="0.5">K11-7-0012</text>
<text x="742.50" y="423.70" font-size="7" fill="#ffffff" text-anchor="start" textLength="2.75" lengthAdjust="spacingAndGlyphs" stroke="#fff" stroke-width="0.5">1</text>
<text x="766.50" y="423.70" font-size="7" fill="#ffffff" text-anchor="start" textLength="11.00" lengthAdjust="spacingAndGlyphs" stroke="#fff" stroke-width="0.5">40Cr</text>
<text x="608.50" y="431.70" font-size="7" fill="#ffffff" text-anchor="middle" textLength="5.50" lengthAdjust="spacingAndGlyphs" stroke="#fff" stroke-width="0.5">13</text>
<text x="621.50" y="432.50" font-size="6.3" fill="#ffffff" text-anchor="start" textLength="21.50" lengthAdjust="spacingAndGlyphs" stroke="#fff" stroke-width="0.5">行星轮轴套</text>
<text x="685.00" y="431.70" font-size="7" fill="#ffffff" text-anchor="start" textLength="22.00" lengthAdjust="spacingAndGlyphs" stroke="#fff" stroke-width="0.5">K11-7-09</text>
<text x="742.50" y="431.70" font-size="7" fill="#ffffff" text-anchor="start" textLength="2.75" lengthAdjust="spacingAndGlyphs" stroke="#fff" stroke-width="0.5">1</text>
<text x="766.50" y="431.70" font-size="7" fill="#ffffff" text-anchor="start" textLength="8.25" lengthAdjust="spacingAndGlyphs" stroke="#fff" stroke-width="0.5">45#</text>
<text x="608.50" y="439.70" font-size="7" fill="#ffffff" text-anchor="middle" textLength="5.50" lengthAdjust="spacingAndGlyphs" stroke="#fff" stroke-width="0.5">12</text>
<text x="621.50" y="440.50" font-size="6.3" fill="#ffffff" text-anchor="start" textLength="12.90" lengthAdjust="spacingAndGlyphs" stroke="#fff" stroke-width="0.5">行星轮</text>
<text x="685.00" y="439.70" font-size="7" fill="#ffffff" text-anchor="start" textLength="27.50" lengthAdjust="spacingAndGlyphs" stroke="#fff" stroke-width="0.5">K11-7-0003</text>
<text x="742.50" y="439.70" font-size="7" fill="#ffffff" text-anchor="start" textLength="2.75" lengthAdjust="spacingAndGlyphs" stroke="#fff" stroke-width="0.5">1</text>
<text x="766.50" y="439.70" font-size="7" fill="#ffffff" text-anchor="start" textLength="11.00" lengthAdjust="spacingAndGlyphs" stroke="#fff" stroke-width="0.5">40Cr</text>
<text x="608.50" y="448.70" font-size="7" fill="#ffffff" text-anchor="middle" textLength="5.50" lengthAdjust="spacingAndGlyphs" stroke="#fff" stroke-width="0.5">11</text>
<text x="621.50" y="449.50" font-size="6.3" fill="#ffffff" text-anchor="start" textLength="19.00" lengthAdjust="spacingAndGlyphs" stroke="#fff" stroke-width="0.5">轴承7221</text>
<text x="685.00" y="448.70" font-size="7" fill="#ffffff" text-anchor="start" textLength="22.00" lengthAdjust="spacingAndGlyphs" stroke="#fff" stroke-width="0.5">GB276-82</text>
<text x="742.50" y="448.70" font-size="7" fill="#ffffff" text-anchor="start" textLength="2.75" lengthAdjust="spacingAndGlyphs" stroke="#fff" stroke-width="0.5">2</text>
<text x="766.50" y="448.70" font-size="7" fill="#ffffff" text-anchor="start" textLength="13.75" lengthAdjust="spacingAndGlyphs" stroke="#fff" stroke-width="0.5">GCr15</text>
<text x="608.50" y="456.70" font-size="7" fill="#ffffff" text-anchor="middle" textLength="5.50" lengthAdjust="spacingAndGlyphs" stroke="#fff" stroke-width="0.5">10</text>
<text x="621.50" y="457.50" font-size="6.3" fill="#ffffff" text-anchor="start" textLength="19.00" lengthAdjust="spacingAndGlyphs" stroke="#fff" stroke-width="0.5">轴承7222</text>
<text x="685.00" y="456.70" font-size="7" fill="#ffffff" text-anchor="start" textLength="22.00" lengthAdjust="spacingAndGlyphs" stroke="#fff" stroke-width="0.5">GB276-82</text>
<text x="742.50" y="456.70" font-size="7" fill="#ffffff" text-anchor="start" textLength="2.75" lengthAdjust="spacingAndGlyphs" stroke="#fff" stroke-width="0.5">2</text>
<text x="766.50" y="456.70" font-size="7" fill="#ffffff" text-anchor="start" textLength="13.75" lengthAdjust="spacingAndGlyphs" stroke="#fff" stroke-width="0.5">GCr15</text>
<text x="608.50" y="464.70" font-size="7" fill="#ffffff" text-anchor="middle" textLength="2.75" lengthAdjust="spacingAndGlyphs" stroke="#fff" stroke-width="0.5">9</text>
<text x="621.50" y="465.50" font-size="6.3" fill="#ffffff" text-anchor="start" textLength="12.90" lengthAdjust="spacingAndGlyphs" stroke="#fff" stroke-width="0.5">大箱体</text>
<text x="685.00" y="464.70" font-size="7" fill="#ffffff" text-anchor="start" textLength="30.25" lengthAdjust="spacingAndGlyphs" stroke="#fff" stroke-width="0.5">K11-7-0002A</text>
<text x="742.50" y="464.70" font-size="7" fill="#ffffff" text-anchor="start" textLength="2.75" lengthAdjust="spacingAndGlyphs" stroke="#fff" stroke-width="0.5">1</text>
<text x="766.50" y="464.70" font-size="7" fill="#ffffff" text-anchor="start" textLength="13.75" lengthAdjust="spacingAndGlyphs" stroke="#fff" stroke-width="0.5">ZG35#</text>
<text x="608.50" y="472.70" font-size="7" fill="#ffffff" text-anchor="middle" textLength="2.75" lengthAdjust="spacingAndGlyphs" stroke="#fff" stroke-width="0.5">8</text>
<text x="621.50" y="473.50" font-size="6.3" fill="#ffffff" text-anchor="start" textLength="12.90" lengthAdjust="spacingAndGlyphs" stroke="#fff" stroke-width="0.5">中心轴</text>
<text x="685.00" y="472.70" font-size="7" fill="#ffffff" text-anchor="start" textLength="27.50" lengthAdjust="spacingAndGlyphs" stroke="#fff" stroke-width="0.5">K11-7-0001</text>
<text x="742.50" y="472.70" font-size="7" fill="#ffffff" text-anchor="start" textLength="2.75" lengthAdjust="spacingAndGlyphs" stroke="#fff" stroke-width="0.5">1</text>
<text x="766.50" y="472.70" font-size="7" fill="#ffffff" text-anchor="start" textLength="8.25" lengthAdjust="spacingAndGlyphs" stroke="#fff" stroke-width="0.5">45#</text>
<text x="608.50" y="481.70" font-size="7" fill="#ffffff" text-anchor="middle" textLength="2.75" lengthAdjust="spacingAndGlyphs" stroke="#fff" stroke-width="0.5">7</text>
<text x="621.50" y="482.50" font-size="6.3" fill="#ffffff" text-anchor="start" textLength="8.60" lengthAdjust="spacingAndGlyphs" stroke="#fff" stroke-width="0.5">油杯</text>
<text x="685.00" y="481.70" font-size="7" fill="#ffffff" text-anchor="start" textLength="27.50" lengthAdjust="spacingAndGlyphs" stroke="#fff" stroke-width="0.5">K11-7-0038</text>
<text x="742.50" y="481.70" font-size="7" fill="#ffffff" text-anchor="start" textLength="2.75" lengthAdjust="spacingAndGlyphs" stroke="#fff" stroke-width="0.5">1</text>
<text x="766.50" y="482.30" font-size="6.3" fill="#ffffff" text-anchor="start" textLength="8.60" lengthAdjust="spacingAndGlyphs" stroke="#fff" stroke-width="0.5">橡胶</text>
<text x="608.50" y="489.70" font-size="7" fill="#ffffff" text-anchor="middle" textLength="2.75" lengthAdjust="spacingAndGlyphs" stroke="#fff" stroke-width="0.5">6</text>
<text x="621.50" y="490.50" font-size="6.3" fill="#ffffff" text-anchor="start" textLength="12.90" lengthAdjust="spacingAndGlyphs" stroke="#fff" stroke-width="0.5">挡油盘</text>
<text x="685.00" y="489.70" font-size="7" fill="#ffffff" text-anchor="start" textLength="27.50" lengthAdjust="spacingAndGlyphs" stroke="#fff" stroke-width="0.5">K11-7-0034</text>
<text x="742.50" y="489.70" font-size="7" fill="#ffffff" text-anchor="start" textLength="2.75" lengthAdjust="spacingAndGlyphs" stroke="#fff" stroke-width="0.5">1</text>
<text x="766.50" y="489.70" font-size="7" fill="#ffffff" text-anchor="start" textLength="11.00" lengthAdjust="spacingAndGlyphs" stroke="#fff" stroke-width="0.5">Q235</text>
<text x="608.50" y="497.70" font-size="7" fill="#ffffff" text-anchor="middle" textLength="2.75" lengthAdjust="spacingAndGlyphs" stroke="#fff" stroke-width="0.5">5</text>
<text x="621.50" y="498.50" font-size="6.3" fill="#ffffff" text-anchor="start" textLength="12.90" lengthAdjust="spacingAndGlyphs" stroke="#fff" stroke-width="0.5">调整垫</text>
<text x="742.50" y="497.70" font-size="7" fill="#ffffff" text-anchor="start" textLength="2.75" lengthAdjust="spacingAndGlyphs" stroke="#fff" stroke-width="0.5">1</text>
<text x="766.50" y="498.30" font-size="6.3" fill="#ffffff" text-anchor="start" textLength="8.60" lengthAdjust="spacingAndGlyphs" stroke="#fff" stroke-width="0.5">铜皮</text>
<text x="608.50" y="506.70" font-size="7" fill="#ffffff" text-anchor="middle" textLength="2.75" lengthAdjust="spacingAndGlyphs" stroke="#fff" stroke-width="0.5">4</text>
<text x="621.50" y="507.50" font-size="6.3" fill="#ffffff" text-anchor="start" textLength="19.00" lengthAdjust="spacingAndGlyphs" stroke="#fff" stroke-width="0.5">轴承7207</text>
<text x="685.00" y="506.70" font-size="7" fill="#ffffff" text-anchor="start" textLength="22.00" lengthAdjust="spacingAndGlyphs" stroke="#fff" stroke-width="0.5">GB276-82</text>
<text x="742.50" y="506.70" font-size="7" fill="#ffffff" text-anchor="start" textLength="2.75" lengthAdjust="spacingAndGlyphs" stroke="#fff" stroke-width="0.5">2</text>
<text x="766.50" y="506.70" font-size="7" fill="#ffffff" text-anchor="start" textLength="13.75" lengthAdjust="spacingAndGlyphs" stroke="#fff" stroke-width="0.5">GCr15</text>
<text x="608.50" y="514.70" font-size="7" fill="#ffffff" text-anchor="middle" textLength="2.75" lengthAdjust="spacingAndGlyphs" stroke="#fff" stroke-width="0.5">3</text>
<text x="621.50" y="515.50" font-size="6.3" fill="#ffffff" text-anchor="start" textLength="8.60" lengthAdjust="spacingAndGlyphs" stroke="#fff" stroke-width="0.5">挡圈</text>
<text x="742.50" y="514.70" font-size="7" fill="#ffffff" text-anchor="start" textLength="2.75" lengthAdjust="spacingAndGlyphs" stroke="#fff" stroke-width="0.5">1</text>
<text x="766.50" y="515.30" font-size="6.3" fill="#ffffff" text-anchor="start" textLength="8.60" lengthAdjust="spacingAndGlyphs" stroke="#fff" stroke-width="0.5">铸铁</text>
<text x="608.50" y="522.70" font-size="7" fill="#ffffff" text-anchor="middle" textLength="2.75" lengthAdjust="spacingAndGlyphs" stroke="#fff" stroke-width="0.5">2</text>
<text x="621.50" y="523.50" font-size="6.3" fill="#ffffff" text-anchor="start" textLength="8.60" lengthAdjust="spacingAndGlyphs" stroke="#fff" stroke-width="0.5">螺钉</text>
<text x="742.50" y="522.70" font-size="7" fill="#ffffff" text-anchor="start" textLength="2.75" lengthAdjust="spacingAndGlyphs" stroke="#fff" stroke-width="0.5">1</text>
<text x="766.50" y="523.30" font-size="6.3" fill="#ffffff" text-anchor="start" textLength="8.60" lengthAdjust="spacingAndGlyphs" stroke="#fff" stroke-width="0.5">钢丝</text>
<text x="608.50" y="531.70" font-size="7" fill="#ffffff" text-anchor="middle" textLength="2.75" lengthAdjust="spacingAndGlyphs" stroke="#fff" stroke-width="0.5">1</text>
<text x="621.50" y="532.50" font-size="6.3" fill="#ffffff" text-anchor="start" textLength="8.60" lengthAdjust="spacingAndGlyphs" stroke="#fff" stroke-width="0.5">端盖</text>
<text x="742.50" y="531.70" font-size="7" fill="#ffffff" text-anchor="start" textLength="2.75" lengthAdjust="spacingAndGlyphs" stroke="#fff" stroke-width="0.5">1</text>
<text x="766.50" y="532.30" font-size="6.3" fill="#ffffff" text-anchor="start" textLength="8.60" lengthAdjust="spacingAndGlyphs" stroke="#fff" stroke-width="0.5">铸铁</text>
<text x="599.50" y="539.30" font-size="6" fill="#ffffff" text-anchor="start" textLength="9.20" lengthAdjust="spacingAndGlyphs" stroke="#fff" stroke-width="0.3" xml:space="preserve">序号</text>
<text x="624.00" y="539.30" font-size="6" fill="#ffffff" text-anchor="start" textLength="18.40" lengthAdjust="spacingAndGlyphs" stroke="#fff" stroke-width="0.3" xml:space="preserve">零件名称</text>
<text x="690.00" y="539.30" font-size="6" fill="#ffffff" text-anchor="start" textLength="15.80" lengthAdjust="spacingAndGlyphs" stroke="#fff" stroke-width="0.3" xml:space="preserve">图   号</text>
<text x="739.50" y="539.30" font-size="6" fill="#ffffff" text-anchor="start" textLength="9.20" lengthAdjust="spacingAndGlyphs" stroke="#fff" stroke-width="0.3" xml:space="preserve">数量</text>
<text x="769.00" y="539.30" font-size="6" fill="#ffffff" text-anchor="start" textLength="9.20" lengthAdjust="spacingAndGlyphs" stroke="#fff" stroke-width="0.3" xml:space="preserve">材料</text>
<text x="796.50" y="539.30" font-size="6" fill="#ffffff" text-anchor="start" textLength="9.20" lengthAdjust="spacingAndGlyphs" stroke="#fff" stroke-width="0.3" xml:space="preserve">重量</text>
<text x="825.00" y="539.30" font-size="6" fill="#ffffff" text-anchor="start" textLength="9.20" lengthAdjust="spacingAndGlyphs" stroke="#fff" stroke-width="0.3" xml:space="preserve">备注</text>
<rect x="598.00" y="366.00" width="249.00" height="1" fill="#00ffff"/>
<rect x="598.00" y="540.00" width="249.00" height="1" fill="#00ffff"/>
<rect x="598.00" y="547.00" width="83.00" height="1" fill="#66a3ff"/>
<rect x="598.00" y="554.00" width="83.00" height="1" fill="#66a3ff"/>
<rect x="598.00" y="561.00" width="83.00" height="1" fill="#66a3ff"/>
<rect x="598.00" y="568.00" width="83.00" height="1" fill="#66a3ff"/>
<rect x="598.00" y="575.00" width="83.00" height="1" fill="#66a3ff"/>
<rect x="598.00" y="582.00" width="83.00" height="1" fill="#66a3ff"/>
<rect x="598.00" y="589.00" width="83.00" height="1" fill="#66a3ff"/>
<rect x="598.00" y="596.00" width="83.00" height="1" fill="#66a3ff"/>
<rect x="608.00" y="540.00" width="1" height="35.00" fill="#66a3ff"/>
<rect x="619.00" y="540.00" width="1" height="35.00" fill="#66a3ff"/>
<rect x="645.00" y="540.00" width="1" height="35.00" fill="#66a3ff"/>
<rect x="666.00" y="540.00" width="1" height="35.00" fill="#66a3ff"/>
<rect x="619.00" y="575.00" width="1" height="27.00" fill="#66a3ff"/>
<rect x="639.00" y="575.00" width="1" height="27.00" fill="#66a3ff"/>
<rect x="660.00" y="575.00" width="1" height="27.00" fill="#66a3ff"/>
<rect x="681.00" y="540.00" width="1" height="62.00" fill="#66a3ff"/>
<rect x="681.00" y="568.00" width="80.00" height="1" fill="#66a3ff"/>
<rect x="681.00" y="589.00" width="80.00" height="1" fill="#66a3ff"/>
<rect x="761.00" y="540.00" width="1" height="62.00" fill="#66a3ff"/>
<rect x="761.00" y="561.00" width="86.00" height="1" fill="#66a3ff"/>
<rect x="761.00" y="568.00" width="86.00" height="1" fill="#66a3ff"/>
<rect x="761.00" y="582.00" width="86.00" height="1" fill="#66a3ff"/>
<rect x="761.00" y="589.00" width="86.00" height="1" fill="#66a3ff"/>
<rect x="789.00" y="561.00" width="1" height="21.00" fill="#66a3ff"/>
<rect x="804.00" y="561.00" width="1" height="21.00" fill="#66a3ff"/>
<rect x="831.00" y="561.00" width="1" height="21.00" fill="#66a3ff"/>
<rect x="774.00" y="568.00" width="1" height="14.00" fill="#66a3ff"/>
<rect x="804.00" y="582.00" width="1" height="7.00" fill="#66a3ff"/>
<text x="799.00" y="555.00" font-size="9.5" fill="#ffffff" text-anchor="middle" textLength="39.00" lengthAdjust="spacingAndGlyphs" stroke="#fff" stroke-width="0.35">K11-7-0000</text>
<text x="714.00" y="583.00" font-size="10" fill="#ffffff" text-anchor="middle" textLength="21.00" lengthAdjust="spacingAndGlyphs" stroke="#fff" stroke-width="0.3">升降机</text>
<text x="685.00" y="601.00" font-size="8.5" fill="#ffffff" text-anchor="start" textLength="16.00" lengthAdjust="spacingAndGlyphs" stroke="#fff" stroke-width="0.3">装配图</text>
<text x="795.50" y="578.50" font-size="8.5" fill="#ffffff" text-anchor="middle" stroke="#fff" stroke-width="0.35">1</text>
<text x="832.00" y="578.50" font-size="8.5" fill="#ffffff" text-anchor="start" textLength="9.50" lengthAdjust="spacingAndGlyphs" stroke="#fff" stroke-width="0.35">1:3</text>
<text x="765.00" y="567.00" font-size="4.5" fill="#ffffff" text-anchor="start" textLength="11.00" lengthAdjust="spacingAndGlyphs" stroke="#fff" stroke-width="0.5">图样标记</text>
<text x="791.00" y="567.00" font-size="4.5" fill="#ffffff" text-anchor="start" textLength="8.00" lengthAdjust="spacingAndGlyphs" stroke="#fff" stroke-width="0.5">重量</text>
<text x="806.00" y="567.00" font-size="4.5" fill="#ffffff" text-anchor="start" textLength="13.00" lengthAdjust="spacingAndGlyphs" stroke="#fff" stroke-width="0.5">比例(1:1)</text>
<text x="833.00" y="567.00" font-size="4.5" fill="#ffffff" text-anchor="start" textLength="7.00" lengthAdjust="spacingAndGlyphs" stroke="#fff" stroke-width="0.5">数量</text>
<text x="769.00" y="588.00" font-size="4.5" fill="#ffffff" text-anchor="start" textLength="3.00" lengthAdjust="spacingAndGlyphs" stroke="#fff" stroke-width="0.5">共</text>
<text x="780.00" y="588.00" font-size="4.5" fill="#ffffff" text-anchor="start" textLength="4.00" lengthAdjust="spacingAndGlyphs" stroke="#fff" stroke-width="0.5">张</text>
<text x="813.00" y="588.00" font-size="4.5" fill="#ffffff" text-anchor="start" textLength="4.00" lengthAdjust="spacingAndGlyphs" stroke="#fff" stroke-width="0.5">第</text>
<text x="824.00" y="588.00" font-size="4.5" fill="#ffffff" text-anchor="start" textLength="4.00" lengthAdjust="spacingAndGlyphs" stroke="#fff" stroke-width="0.5">张</text>
<text x="599.00" y="574.30" font-size="4.5" fill="#ffffff" text-anchor="start" textLength="4.50" lengthAdjust="spacingAndGlyphs" stroke="#fff" stroke-width="0.5">标记</text>
<text x="609.00" y="574.30" font-size="4.5" fill="#ffffff" text-anchor="start" textLength="5.00" lengthAdjust="spacingAndGlyphs" stroke="#fff" stroke-width="0.5">处数</text>
<text x="624.00" y="574.30" font-size="4.5" fill="#ffffff" text-anchor="start" textLength="8.00" lengthAdjust="spacingAndGlyphs" stroke="#fff" stroke-width="0.5">更改文件</text>
<text x="649.00" y="574.30" font-size="4.5" fill="#ffffff" text-anchor="start" textLength="6.00" lengthAdjust="spacingAndGlyphs" stroke="#fff" stroke-width="0.5">签字</text>
<text x="668.00" y="574.30" font-size="4.5" fill="#ffffff" text-anchor="start" textLength="5.00" lengthAdjust="spacingAndGlyphs" stroke="#fff" stroke-width="0.5">日期</text>
<text x="602.00" y="581.30" font-size="4.5" fill="#ffffff" text-anchor="start" textLength="6.00" lengthAdjust="spacingAndGlyphs" stroke="#fff" stroke-width="0.5">设计</text>
<text x="639.50" y="581.30" font-size="4.5" fill="#ffffff" text-anchor="start" textLength="10.00" lengthAdjust="spacingAndGlyphs" stroke="#fff" stroke-width="0.5">标准化</text>
<text x="602.00" y="588.30" font-size="4.5" fill="#ffffff" text-anchor="start" textLength="6.00" lengthAdjust="spacingAndGlyphs" stroke="#fff" stroke-width="0.5">校对</text>
<text x="639.50" y="588.30" font-size="4.5" fill="#ffffff" text-anchor="start" textLength="10.00" lengthAdjust="spacingAndGlyphs" stroke="#fff" stroke-width="0.5">审  定</text>
<text x="602.00" y="595.30" font-size="4.5" fill="#ffffff" text-anchor="start" textLength="6.00" lengthAdjust="spacingAndGlyphs" stroke="#fff" stroke-width="0.5">审核</text>
<text x="602.00" y="602.30" font-size="4.5" fill="#ffffff" text-anchor="start" textLength="6.00" lengthAdjust="spacingAndGlyphs" stroke="#fff" stroke-width="0.5">工艺</text>
<text x="639.50" y="602.30" font-size="4.5" fill="#ffffff" text-anchor="start" textLength="5.00" lengthAdjust="spacingAndGlyphs" stroke="#fff" stroke-width="0.5">日期</text>
<text x="661.00" y="601.00" font-size="5.5" fill="#ffffff" text-anchor="start" textLength="20.00" lengthAdjust="spacingAndGlyphs" stroke="#fff" stroke-width="0.3">05-20-11</text>
<path d="M130 261.5 H787" stroke="#ff0000" stroke-width="0.99" stroke-dasharray="28 3 6 3" stroke-dashoffset="2.7" fill="none"/>
<clipPath id="c1"><path d="M149.00 199.00 L158.00 199.00 L158.00 213.00 L149.00 213.00 Z" clip-rule="evenodd"/></clipPath>
<path d="M148.0 196.8L159.0 185.8M148.0 202.9L159.0 191.9M148.0 208.9L159.0 197.9M148.0 215.0L159.0 204.0M148.0 221.1L159.0 210.1M148.0 227.1L159.0 216.1" stroke="#90ff00" stroke-width="0.99" fill="none" clip-path="url(#c1)" shape-rendering="crispEdges"/>
<path d="M149.00 199.00 L158.00 199.00 L158.00 213.00 L149.00 213.00 Z" fill="none" stroke="#00ffff" stroke-width="0.99"/>
<line x1="146.50" y1="205.50" x2="160.50" y2="205.50" stroke="#ff0000" stroke-width="0.99" />
<clipPath id="c2"><path d="M206.00 199.00 L214.00 199.00 L214.00 229.00 L206.00 229.00 Z" clip-rule="evenodd"/></clipPath>
<path d="M205.0 194.3L215.0 184.3M205.0 200.3L215.0 190.3M205.0 206.4L215.0 196.4M205.0 212.4L215.0 202.4M205.0 218.5L215.0 208.5M205.0 224.6L215.0 214.6M205.0 230.6L215.0 220.6M205.0 236.6L215.0 226.6M205.0 242.7L215.0 232.7" stroke="#90ff00" stroke-width="0.99" fill="none" clip-path="url(#c2)" shape-rendering="crispEdges"/>
<path d="M206.00 199.00 L214.00 199.00 L214.00 229.00 L206.00 229.00 Z" fill="none" stroke="#00ffff" stroke-width="0.99"/>
<line x1="204.00" y1="205.50" x2="216.00" y2="205.50" stroke="#ff0000" stroke-width="0.99" />
<clipPath id="c3"><path d="M140.50 218.00 L145.00 213.00 L206.00 213.00 L206.00 217.50 L194.00 217.50 L194.00 213.50 L173.00 213.50 L173.00 217.50 L163.40 217.50 L163.40 226.00 L168.00 226.00 L168.00 239.50 L163.00 243.00 L170.40 243.00 L170.40 251.00 L177.00 251.00 L177.00 261.50 L140.50 261.50 Z M149.00 216.00 L156.40 216.00 L158.40 218.00 L158.40 241.00 L156.40 243.00 L149.00 243.00 L147.00 241.00 L147.00 218.00 Z" clip-rule="evenodd"/></clipPath>
<path d="M139.5 211.4L207.0 143.9M139.5 217.4L207.0 149.9M139.5 223.5L207.0 156.0M139.5 229.6L207.0 162.1M139.5 235.6L207.0 168.1M139.5 241.6L207.0 174.1M139.5 247.7L207.0 180.2M139.5 253.8L207.0 186.2M139.5 259.8L207.0 192.3M139.5 265.8L207.0 198.3M139.5 271.9L207.0 204.4M139.5 277.9L207.0 210.4M139.5 284.0L207.0 216.5M139.5 290.1L207.0 222.6M139.5 296.1L207.0 228.6M139.5 302.1L207.0 234.6M139.5 308.2L207.0 240.7M139.5 314.2L207.0 246.8M139.5 320.3L207.0 252.8M139.5 326.3L207.0 258.8M139.5 332.4L207.0 264.9" stroke="#90ff00" stroke-width="0.99" fill="none" clip-path="url(#c3)" shape-rendering="crispEdges"/>
<path d="M140.50 218.00 L145.00 213.00 L206.00 213.00 L206.00 217.50 L194.00 217.50 L194.00 213.50 L173.00 213.50 L173.00 217.50 L163.40 217.50 L163.40 226.00 L168.00 226.00 L168.00 239.50 L163.00 243.00 L170.40 243.00 L170.40 251.00 L177.00 251.00 L177.00 261.50 L140.50 261.50 Z M149.00 216.00 L156.40 216.00 L158.40 218.00 L158.40 241.00 L156.40 243.00 L149.00 243.00 L147.00 241.00 L147.00 218.00 Z" fill="none" stroke="#00ffff" stroke-width="0.99"/>
<path d="M163.4 217.5 H172.3 V238.6 H168" fill="none" stroke="#00ffff" stroke-width="0.99" />
<clipPath id="c4"><path d="M173.00 213.50 L194.00 213.50 L194.00 238.00 L173.00 238.00 Z" clip-rule="evenodd"/></clipPath>
<path d="M172.0 212.0L195.0 189.0M172.0 215.0L195.0 192.0M172.0 218.0L195.0 195.0M172.0 221.0L195.0 198.0M172.0 224.0L195.0 201.0M172.0 227.0L195.0 204.0M172.0 230.0L195.0 207.0M172.0 233.0L195.0 210.0M172.0 236.0L195.0 213.0M172.0 239.0L195.0 216.0M172.0 242.0L195.0 219.0M172.0 245.0L195.0 222.0M172.0 248.0L195.0 225.0M172.0 251.0L195.0 228.0M172.0 254.0L195.0 231.0M172.0 257.0L195.0 234.0M172.0 260.0L195.0 237.0M172.0 263.0L195.0 240.0M172.0 241.0L195.0 264.0M172.0 238.0L195.0 261.0M172.0 235.0L195.0 258.0M172.0 232.0L195.0 255.0M172.0 229.0L195.0 252.0M172.0 226.0L195.0 249.0M172.0 223.0L195.0 246.0M172.0 220.0L195.0 243.0M172.0 217.0L195.0 240.0M172.0 214.0L195.0 237.0M172.0 211.0L195.0 234.0M172.0 208.0L195.0 231.0M172.0 205.0L195.0 228.0M172.0 202.0L195.0 225.0M172.0 199.0L195.0 222.0M172.0 196.0L195.0 219.0M172.0 193.0L195.0 216.0M172.0 190.0L195.0 213.0M172.0 187.0L195.0 210.0" stroke="#90ff00" stroke-width="0.99" fill="none" clip-path="url(#c4)" shape-rendering="crispEdges"/>
<path d="M173.00 213.50 L194.00 213.50 L194.00 238.00 L173.00 238.00 Z" fill="none" stroke="#00ffff" stroke-width="0.99"/>
<circle cx="183.50" cy="225.75" r="8.3" fill="#000" stroke="#00ffff" stroke-width="0.99"/>
<line x1="173.50" y1="225.75" x2="193.50" y2="225.75" stroke="#ff0000" stroke-width="0.99" />
<line x1="183.50" y1="215.00" x2="183.50" y2="236.50" stroke="#ff0000" stroke-width="0.99" />
<rect x="194.00" y="217.50" width="9.00" height="11.50" rx="0" fill="none" stroke="#00ffff" stroke-width="0.99"/>
<clipPath id="c5"><path d="M203.00 217.50 L206.00 217.50 L206.00 229.00 L203.00 229.00 Z" clip-rule="evenodd"/></clipPath>
<path d="M202.0 215.4L207.0 210.4M202.0 221.5L207.0 216.5M202.0 227.6L207.0 222.6M202.0 233.6L207.0 228.6M202.0 239.6L207.0 234.6" stroke="#90ff00" stroke-width="0.99" fill="none" clip-path="url(#c5)" shape-rendering="crispEdges"/>
<path d="M203.00 217.50 L206.00 217.50 L206.00 229.00 L203.00 229.00 Z" fill="none" stroke="#00ffff" stroke-width="0.99"/>
<rect x="203.50" y="222.00" width="5.00" height="7.00" rx="0" fill="#000" stroke="#e6b86e" stroke-width="0.99"/>
<line x1="203.50" y1="222.00" x2="208.50" y2="229.00" stroke="#e6b86e" stroke-width="0.99" />
<line x1="208.50" y1="222.00" x2="203.50" y2="229.00" stroke="#e6b86e" stroke-width="0.99" />
<rect x="160.50" y="232.00" width="6.00" height="6.50" rx="0" fill="#000" stroke="#e6b86e" stroke-width="0.99"/>
<line x1="160.50" y1="232.00" x2="166.50" y2="238.50" stroke="#e6b86e" stroke-width="0.99" />
<line x1="166.50" y1="232.00" x2="160.50" y2="238.50" stroke="#e6b86e" stroke-width="0.99" />
<rect x="147.00" y="250.50" width="22.00" height="3.80" rx="0" fill="#000" stroke="#00ffff" stroke-width="0.99"/>
<rect x="170.40" y="251.80" width="5.60" height="4.40" rx="0" fill="#000" stroke="#e6b86e" stroke-width="0.99"/>
<line x1="170.40" y1="251.80" x2="176.00" y2="256.20" stroke="#e6b86e" stroke-width="0.99" />
<line x1="176.00" y1="251.80" x2="170.40" y2="256.20" stroke="#e6b86e" stroke-width="0.99" />
<clipPath id="c6"><path d="M206.00 294.00 L214.00 294.00 L214.00 324.00 L206.00 324.00 Z" clip-rule="evenodd"/></clipPath>
<path d="M205.0 291.1L215.0 281.1M205.0 297.1L215.0 287.1M205.0 303.2L215.0 293.2M205.0 309.2L215.0 299.2M205.0 315.3L215.0 305.3M205.0 321.4L215.0 311.4M205.0 327.4L215.0 317.4M205.0 333.4L215.0 323.4M205.0 339.5L215.0 329.5" stroke="#90ff00" stroke-width="0.99" fill="none" clip-path="url(#c6)" shape-rendering="crispEdges"/>
<path d="M206.00 294.00 L214.00 294.00 L214.00 324.00 L206.00 324.00 Z" fill="none" stroke="#00ffff" stroke-width="0.99"/>
<line x1="204.00" y1="317.50" x2="216.00" y2="317.50" stroke="#ff0000" stroke-width="0.99" />
<clipPath id="c7"><path d="M140.50 305.00 L145.00 310.00 L206.00 310.00 L206.00 305.50 L194.00 305.50 L194.00 309.50 L173.00 309.50 L173.00 305.50 L163.40 305.50 L163.40 297.00 L168.00 297.00 L168.00 283.50 L163.00 280.00 L170.40 280.00 L170.40 272.00 L177.00 272.00 L177.00 261.50 L140.50 261.50 Z M149.00 307.00 L156.40 307.00 L158.40 305.00 L158.40 282.00 L156.40 280.00 L149.00 280.00 L147.00 282.00 L147.00 305.00 Z" clip-rule="evenodd"/></clipPath>
<path d="M139.5 259.8L207.0 192.3M139.5 265.8L207.0 198.3M139.5 271.9L207.0 204.4M139.5 277.9L207.0 210.4M139.5 284.0L207.0 216.5M139.5 290.1L207.0 222.6M139.5 296.1L207.0 228.6M139.5 302.1L207.0 234.6M139.5 308.2L207.0 240.7M139.5 314.2L207.0 246.8M139.5 320.3L207.0 252.8M139.5 326.3L207.0 258.8M139.5 332.4L207.0 264.9M139.5 338.4L207.0 270.9M139.5 344.5L207.0 277.0M139.5 350.6L207.0 283.1M139.5 356.6L207.0 289.1M139.5 362.6L207.0 295.1M139.5 368.7L207.0 301.2M139.5 374.8L207.0 307.2M139.5 380.8L207.0 313.3" stroke="#90ff00" stroke-width="0.99" fill="none" clip-path="url(#c7)" shape-rendering="crispEdges"/>
<path d="M140.50 305.00 L145.00 310.00 L206.00 310.00 L206.00 305.50 L194.00 305.50 L194.00 309.50 L173.00 309.50 L173.00 305.50 L163.40 305.50 L163.40 297.00 L168.00 297.00 L168.00 283.50 L163.00 280.00 L170.40 280.00 L170.40 272.00 L177.00 272.00 L177.00 261.50 L140.50 261.50 Z M149.00 307.00 L156.40 307.00 L158.40 305.00 L158.40 282.00 L156.40 280.00 L149.00 280.00 L147.00 282.00 L147.00 305.00 Z" fill="none" stroke="#00ffff" stroke-width="0.99"/>
<path d="M163.4 305.5 H172.3 V284.4 H168" fill="none" stroke="#00ffff" stroke-width="0.99" />
<clipPath id="c8"><path d="M173.00 285.00 L194.00 285.00 L194.00 309.50 L173.00 309.50 Z" clip-rule="evenodd"/></clipPath>
<path d="M172.0 284.0L195.0 261.0M172.0 287.0L195.0 264.0M172.0 290.0L195.0 267.0M172.0 293.0L195.0 270.0M172.0 296.0L195.0 273.0M172.0 299.0L195.0 276.0M172.0 302.0L195.0 279.0M172.0 305.0L195.0 282.0M172.0 308.0L195.0 285.0M172.0 311.0L195.0 288.0M172.0 314.0L195.0 291.0M172.0 317.0L195.0 294.0M172.0 320.0L195.0 297.0M172.0 323.0L195.0 300.0M172.0 326.0L195.0 303.0M172.0 329.0L195.0 306.0M172.0 332.0L195.0 309.0M172.0 335.0L195.0 312.0M172.0 313.0L195.0 336.0M172.0 310.0L195.0 333.0M172.0 307.0L195.0 330.0M172.0 304.0L195.0 327.0M172.0 301.0L195.0 324.0M172.0 298.0L195.0 321.0M172.0 295.0L195.0 318.0M172.0 292.0L195.0 315.0M172.0 289.0L195.0 312.0M172.0 286.0L195.0 309.0M172.0 283.0L195.0 306.0M172.0 280.0L195.0 303.0M172.0 277.0L195.0 300.0M172.0 274.0L195.0 297.0M172.0 271.0L195.0 294.0M172.0 268.0L195.0 291.0M172.0 265.0L195.0 288.0M172.0 262.0L195.0 285.0M172.0 259.0L195.0 282.0" stroke="#90ff00" stroke-width="0.99" fill="none" clip-path="url(#c8)" shape-rendering="crispEdges"/>
<path d="M173.00 285.00 L194.00 285.00 L194.00 309.50 L173.00 309.50 Z" fill="none" stroke="#00ffff" stroke-width="0.99"/>
<circle cx="183.50" cy="297.25" r="8.3" fill="#000" stroke="#00ffff" stroke-width="0.99"/>
<line x1="173.50" y1="297.25" x2="193.50" y2="297.25" stroke="#ff0000" stroke-width="0.99" />
<line x1="183.50" y1="286.50" x2="183.50" y2="308.00" stroke="#ff0000" stroke-width="0.99" />
<rect x="194.00" y="294.00" width="9.00" height="11.50" rx="0" fill="none" stroke="#00ffff" stroke-width="0.99"/>
<clipPath id="c9"><path d="M203.00 294.00 L206.00 294.00 L206.00 305.50 L203.00 305.50 Z" clip-rule="evenodd"/></clipPath>
<path d="M202.0 288.1L207.0 283.1M202.0 294.1L207.0 289.1M202.0 300.1L207.0 295.1M202.0 306.2L207.0 301.2M202.0 312.2L207.0 307.2" stroke="#90ff00" stroke-width="0.99" fill="none" clip-path="url(#c9)" shape-rendering="crispEdges"/>
<path d="M203.00 294.00 L206.00 294.00 L206.00 305.50 L203.00 305.50 Z" fill="none" stroke="#00ffff" stroke-width="0.99"/>
<rect x="203.50" y="294.00" width="5.00" height="7.00" rx="0" fill="#000" stroke="#e6b86e" stroke-width="0.99"/>
<line x1="203.50" y1="294.00" x2="208.50" y2="301.00" stroke="#e6b86e" stroke-width="0.99" />
<line x1="208.50" y1="294.00" x2="203.50" y2="301.00" stroke="#e6b86e" stroke-width="0.99" />
<rect x="160.50" y="284.50" width="6.00" height="6.50" rx="0" fill="#000" stroke="#e6b86e" stroke-width="0.99"/>
<line x1="160.50" y1="284.50" x2="166.50" y2="291.00" stroke="#e6b86e" stroke-width="0.99" />
<line x1="166.50" y1="284.50" x2="160.50" y2="291.00" stroke="#e6b86e" stroke-width="0.99" />
<rect x="147.00" y="268.70" width="22.00" height="3.80" rx="0" fill="#000" stroke="#00ffff" stroke-width="0.99"/>
<rect x="170.40" y="266.80" width="5.60" height="4.40" rx="0" fill="#000" stroke="#e6b86e" stroke-width="0.99"/>
<line x1="170.40" y1="266.80" x2="176.00" y2="271.20" stroke="#e6b86e" stroke-width="0.99" />
<line x1="176.00" y1="266.80" x2="170.40" y2="271.20" stroke="#e6b86e" stroke-width="0.99" />
<clipPath id="c10"><path d="M166.00 238.00 L194.00 238.00 L206.00 228.50 L223.50 227.50 L235.00 200.30 L244.00 203.00 L239.50 225.00 L236.50 245.00 L236.00 261.50 L237.00 277.00 L239.60 290.60 L240.70 297.40 L236.00 306.60 L232.00 313.00 L223.60 295.50 L206.00 294.50 L194.00 285.00 L166.00 285.00 L170.40 280.00 L170.40 272.00 L177.00 272.00 L177.00 251.00 L170.40 251.00 L170.40 243.00 Z" clip-rule="evenodd"/></clipPath>
<path d="M165.0 198.0L245.0 118.0M165.0 204.1L245.0 124.1M165.0 210.1L245.0 130.1M165.0 216.1L245.0 136.1M165.0 222.2L245.0 142.2M165.0 228.2L245.0 148.2M165.0 234.3L245.0 154.3M165.0 240.3L245.0 160.3M165.0 246.4L245.0 166.4M165.0 252.4L245.0 172.4M165.0 258.5L245.0 178.5M165.0 264.6L245.0 184.6M165.0 270.6L245.0 190.6M165.0 276.6L245.0 196.6M165.0 282.7L245.0 202.7M165.0 288.8L245.0 208.8M165.0 294.8L245.0 214.8M165.0 300.8L245.0 220.8M165.0 306.9L245.0 226.9M165.0 312.9L245.0 232.9M165.0 319.0L245.0 239.0M165.0 325.1L245.0 245.1M165.0 331.1L245.0 251.1M165.0 337.1L245.0 257.1M165.0 343.2L245.0 263.2M165.0 349.2L245.0 269.2M165.0 355.3L245.0 275.3M165.0 361.4L245.0 281.4M165.0 367.4L245.0 287.4M165.0 373.4L245.0 293.4M165.0 379.5L245.0 299.5M165.0 385.5L245.0 305.5M165.0 391.6L245.0 311.6M165.0 397.6L245.0 317.6" stroke="#90ff00" stroke-width="0.99" fill="none" clip-path="url(#c10)" shape-rendering="crispEdges"/>
<path d="M166.00 238.00 L194.00 238.00 L206.00 228.50 L223.50 227.50 L235.00 200.30 L244.00 203.00 L239.50 225.00 L236.50 245.00 L236.00 261.50 L237.00 277.00 L239.60 290.60 L240.70 297.40 L236.00 306.60 L232.00 313.00 L223.60 295.50 L206.00 294.50 L194.00 285.00 L166.00 285.00 L170.40 280.00 L170.40 272.00 L177.00 272.00 L177.00 251.00 L170.40 251.00 L170.40 243.00 Z" fill="none" stroke="#00ffff" stroke-width="0.99"/>
<path d="M244 203 Q235 232 236 261.5 Q236.5 280 240.7 297.4" fill="none" stroke="#00ffff" stroke-width="0.99" />
<clipPath id="c11"><path d="M140.50 305.00 L147.00 305.00 L147.00 310.00 L158.00 310.00 L158.00 324.00 L140.50 324.00 Z" clip-rule="evenodd"/></clipPath>
<path d="M139.5 302.1L159.0 282.6M139.5 308.2L159.0 288.7M139.5 314.2L159.0 294.8M139.5 320.3L159.0 300.8M139.5 326.3L159.0 306.8M139.5 332.4L159.0 312.9M139.5 338.4L159.0 318.9M139.5 344.5L159.0 325.0" stroke="#90ff00" stroke-width="0.99" fill="none" clip-path="url(#c11)" shape-rendering="crispEdges"/>
<path d="M140.50 305.00 L147.00 305.00 L147.00 310.00 L158.00 310.00 L158.00 324.00 L140.50 324.00 Z" fill="none" stroke="#00ffff" stroke-width="0.99"/>
<line x1="148.00" y1="259.30" x2="228.00" y2="259.30" stroke="#00ffff" stroke-width="0.99" />
<line x1="148.00" y1="263.80" x2="228.00" y2="263.80" stroke="#00ffff" stroke-width="0.99" />
<circle cx="222.5" cy="261.5" r="2.6" fill="none" stroke="#00ffff"/>
<line x1="149.50" y1="261.50" x2="149.50" y2="336.00" stroke="#ff0000" stroke-width="0.99" stroke-dasharray="12 2"/>
<line x1="147.30" y1="262.00" x2="147.30" y2="334.00" stroke="#00ffff" stroke-width="0.99" />
<line x1="151.70" y1="262.00" x2="151.70" y2="334.00" stroke="#00ffff" stroke-width="0.99" />
<rect x="146.00" y="311.00" width="7.00" height="13.00" rx="0" fill="none" stroke="#ff00ff" stroke-width="0.99"/>
<rect x="146.00" y="324.00" width="7.00" height="22.00" rx="0" fill="none" stroke="#00ffff" stroke-width="0.99"/>
<line x1="149.50" y1="336.00" x2="149.50" y2="348.00" stroke="#ff0000" stroke-width="0.99" />
<path d="M240.2 197 L222.6 260.7" stroke="#000" stroke-width="5" fill="none"/>
<line x1="238.08" y1="196.41" x2="220.48" y2="260.11" stroke="#00ffff" stroke-width="0.99" />
<line x1="242.32" y1="197.59" x2="224.72" y2="261.29" stroke="#00ffff" stroke-width="0.99" />
<line x1="240.20" y1="197.00" x2="222.60" y2="260.70" stroke="#ff0000" stroke-width="0.99" stroke-dasharray="10 2"/>
<line x1="222.60" y1="260.70" x2="219.50" y2="271.00" stroke="#ff0000" stroke-width="0.99" />
<path d="M254.5 147 L247 166 L242 179 L238.5 196" stroke="#90ff00" stroke-width="8.5" fill="none" stroke-linejoin="round"/>
<path d="M254.5 147 L247 166 L242 179 L238.5 196" stroke="#000" stroke-width="6.3" fill="none" stroke-linejoin="round"/>
<path d="M254.5 147 L247 166 L242 179 L238.5 196" stroke="#00ffff" stroke-width="4" fill="none" stroke-dasharray="3 2"/>
<path d="M254.5 147 L247 166 L242 179 L238.5 196" stroke="#000" stroke-width="2" fill="none"/>
<path d="M253.5 150 L247 166 L244 174" stroke="#ff0000" stroke-width="1.3" fill="none" stroke-dasharray="5 2"/>
<path d="M252 151 L248 162" stroke="#ff00ff" stroke-width="3" fill="none" stroke-dasharray="2 2"/>
<circle cx="254.8" cy="146" r="2.8" fill="#000" stroke="#00ffff"/>
<rect x="235.50" y="197.00" width="6.00" height="6.50" rx="0" fill="none" stroke="#ff00ff" stroke-width="0.99"/>
<clipPath id="c12"><path d="M223.50 123.50 L304.50 123.50 L304.50 155.00 L223.50 155.00 Z M228.00 131.00 L292.50 131.00 L295.50 134.00 L295.50 143.50 L292.50 146.50 L228.00 146.50 Z" clip-rule="evenodd"/></clipPath>
<path d="M222.5 117.7L305.5 34.7M222.5 124.0L305.5 41.0M222.5 130.3L305.5 47.3M222.5 136.6L305.5 53.6M222.5 142.9L305.5 59.9M222.5 149.2L305.5 66.2M222.5 155.5L305.5 72.5M222.5 161.8L305.5 78.8M222.5 168.1L305.5 85.1M222.5 174.4L305.5 91.4M222.5 180.7L305.5 97.7M222.5 187.0L305.5 104.0M222.5 193.3L305.5 110.3M222.5 199.6L305.5 116.6M222.5 205.9L305.5 122.9M222.5 212.2L305.5 129.2M222.5 218.5L305.5 135.5M222.5 224.8L305.5 141.8M222.5 231.1L305.5 148.1M222.5 237.4L305.5 154.4M222.5 243.7L305.5 160.7" stroke="#90ff00" stroke-width="0.99" fill="none" clip-path="url(#c12)" shape-rendering="crispEdges"/>
<path d="M223.50 123.50 L304.50 123.50 L304.50 155.00 L223.50 155.00 Z M228.00 131.00 L292.50 131.00 L295.50 134.00 L295.50 143.50 L292.50 146.50 L228.00 146.50 Z" fill="none" stroke="#00ffff" stroke-width="0.99"/>
<line x1="223.50" y1="155.00" x2="296.00" y2="155.00" stroke="#90ff00" stroke-width="2" />
<line x1="304.50" y1="155.00" x2="304.50" y2="180.50" stroke="#00ffff" stroke-width="0.99" />
<line x1="296.50" y1="155.00" x2="296.50" y2="168.50" stroke="#90ff00" stroke-width="0.99" />
<path d="M295.5 168.5 H275 Q269.5 168.5 269.5 174 V184" fill="none" stroke="#00ffff" stroke-width="0.99" />
<line x1="295.50" y1="155.00" x2="295.50" y2="184.30" stroke="#00ffff" stroke-width="0.99" />
<clipPath id="c13"><path d="M244.50 200.50 L258.00 200.50 L260.00 195.00 L263.30 189.30 L267.00 184.30 L302.50 184.30 L306.30 180.50 L313.20 180.50 L313.20 187.70 L310.20 191.50 L269.00 191.50 L269.00 216.50 L264.50 215.00 L246.50 215.00 Z" clip-rule="evenodd"/></clipPath>
<path d="M243.5 218.3L314.2 289.0M243.5 212.0L314.2 282.7M243.5 205.7L314.2 276.4M243.5 199.4L314.2 270.1M243.5 193.1L314.2 263.8M243.5 186.8L314.2 257.5M243.5 180.5L314.2 251.2M243.5 174.2L314.2 244.9M243.5 167.9L314.2 238.6M243.5 161.6L314.2 232.3M243.5 155.3L314.2 226.0M243.5 149.0L314.2 219.7M243.5 142.7L314.2 213.4M243.5 136.4L314.2 207.1M243.5 130.1L314.2 200.8M243.5 123.8L314.2 194.5M243.5 117.5L314.2 188.2M243.5 111.2L314.2 181.9M243.5 104.9L314.2 175.6" stroke="#90ff00" stroke-width="0.99" fill="none" clip-path="url(#c13)" shape-rendering="crispEdges"/>
<path d="M244.50 200.50 L258.00 200.50 L260.00 195.00 L263.30 189.30 L267.00 184.30 L302.50 184.30 L306.30 180.50 L313.20 180.50 L313.20 187.70 L310.20 191.50 L269.00 191.50 L269.00 216.50 L264.50 215.00 L246.50 215.00 Z" fill="none" stroke="#00ffff" stroke-width="0.99"/>
<path d="M258 200.5 L260 195 L263.3 189.3 L267 184.3" fill="none" stroke="#90ff00" stroke-width="0.99" />
<clipPath id="c14"><path d="M246.50 215.00 L264.50 215.00 L264.50 236.50 L246.50 236.50 Z" clip-rule="evenodd"/></clipPath>
<path d="M245.5 213.5L265.5 193.5M245.5 216.5L265.5 196.5M245.5 219.5L265.5 199.5M245.5 222.5L265.5 202.5M245.5 225.5L265.5 205.5M245.5 228.5L265.5 208.5M245.5 231.5L265.5 211.5M245.5 234.5L265.5 214.5M245.5 237.5L265.5 217.5M245.5 240.5L265.5 220.5M245.5 243.5L265.5 223.5M245.5 246.5L265.5 226.5M245.5 249.5L265.5 229.5M245.5 252.5L265.5 232.5M245.5 255.5L265.5 235.5M245.5 258.5L265.5 238.5M245.5 239.5L265.5 259.5M245.5 236.5L265.5 256.5M245.5 233.5L265.5 253.5M245.5 230.5L265.5 250.5M245.5 227.5L265.5 247.5M245.5 224.5L265.5 244.5M245.5 221.5L265.5 241.5M245.5 218.5L265.5 238.5M245.5 215.5L265.5 235.5M245.5 212.5L265.5 232.5M245.5 209.5L265.5 229.5M245.5 206.5L265.5 226.5M245.5 203.5L265.5 223.5M245.5 200.5L265.5 220.5M245.5 197.5L265.5 217.5M245.5 194.5L265.5 214.5M245.5 191.5L265.5 211.5" stroke="#90ff00" stroke-width="0.99" fill="none" clip-path="url(#c14)" shape-rendering="crispEdges"/>
<path d="M246.50 215.00 L264.50 215.00 L264.50 236.50 L246.50 236.50 Z" fill="none" stroke="#00ffff" stroke-width="0.99"/>
<circle cx="255.50" cy="225.75" r="6.5" fill="#000" stroke="#00ffff" stroke-width="0.99"/>
<line x1="247.00" y1="225.75" x2="264.00" y2="225.75" stroke="#ff0000" stroke-width="0.99" />
<line x1="255.50" y1="216.50" x2="255.50" y2="235.00" stroke="#ff0000" stroke-width="0.99" />
<line x1="269.00" y1="192.00" x2="269.00" y2="232.50" stroke="#00ffff" stroke-width="0.99" />
<line x1="310.20" y1="191.50" x2="310.20" y2="232.50" stroke="#00ffff" stroke-width="0.99" />
<line x1="313.20" y1="188.00" x2="313.20" y2="232.50" stroke="#00ffff" stroke-width="0.99" />
<clipPath id="c15"><path d="M223.50 399.50 L304.50 399.50 L304.50 368.00 L223.50 368.00 Z M228.00 392.00 L292.50 392.00 L295.50 389.00 L295.50 379.50 L292.50 376.50 L228.00 376.50 Z" clip-rule="evenodd"/></clipPath>
<path d="M222.5 363.4L305.5 280.4M222.5 369.7L305.5 286.7M222.5 376.0L305.5 293.0M222.5 382.3L305.5 299.3M222.5 388.6L305.5 305.6M222.5 394.9L305.5 311.9M222.5 401.2L305.5 318.2M222.5 407.5L305.5 324.5M222.5 413.8L305.5 330.8M222.5 420.1L305.5 337.1M222.5 426.4L305.5 343.4M222.5 432.7L305.5 349.7M222.5 439.0L305.5 356.0M222.5 445.3L305.5 362.3M222.5 451.6L305.5 368.6M222.5 457.9L305.5 374.9M222.5 464.2L305.5 381.2M222.5 470.5L305.5 387.5M222.5 476.8L305.5 393.8M222.5 483.1L305.5 400.1M222.5 489.4L305.5 406.4" stroke="#90ff00" stroke-width="0.99" fill="none" clip-path="url(#c15)" shape-rendering="crispEdges"/>
<path d="M223.50 399.50 L304.50 399.50 L304.50 368.00 L223.50 368.00 Z M228.00 392.00 L292.50 392.00 L295.50 389.00 L295.50 379.50 L292.50 376.50 L228.00 376.50 Z" fill="none" stroke="#00ffff" stroke-width="0.99"/>
<line x1="223.50" y1="368.00" x2="296.00" y2="368.00" stroke="#90ff00" stroke-width="2" />
<clipPath id="c16"><path d="M295.50 368.00 L304.50 368.00 L304.50 340.50 L302.50 338.70 L295.50 338.70 Z" clip-rule="evenodd"/></clipPath>
<path d="M294.5 335.5L305.5 324.5M294.5 341.8L305.5 330.8M294.5 348.1L305.5 337.1M294.5 354.4L305.5 343.4M294.5 360.7L305.5 349.7M294.5 367.0L305.5 356.0M294.5 373.3L305.5 362.3M294.5 379.6L305.5 368.6M294.5 385.9L305.5 374.9" stroke="#90ff00" stroke-width="0.99" fill="none" clip-path="url(#c16)" shape-rendering="crispEdges"/>
<path d="M295.50 368.00 L304.50 368.00 L304.50 340.50 L302.50 338.70 L295.50 338.70 Z" fill="none" stroke="#00ffff" stroke-width="0.99"/>
<path d="M295.5 354.5 H275 Q269.5 354.5 269.5 349.0 V339.0" fill="none" stroke="#00ffff" stroke-width="0.99" />
<line x1="295.50" y1="368.00" x2="295.50" y2="338.70" stroke="#00ffff" stroke-width="0.99" />
<clipPath id="c17"><path d="M244.50 322.50 L258.00 322.50 L260.00 328.00 L263.30 333.70 L267.00 338.70 L302.50 338.70 L306.30 342.50 L313.20 342.50 L313.20 335.30 L310.20 331.50 L269.00 331.50 L269.00 306.50 L264.50 308.00 L246.50 308.00 Z" clip-rule="evenodd"/></clipPath>
<path d="M243.5 344.3L314.2 415.0M243.5 338.0L314.2 408.7M243.5 331.7L314.2 402.4M243.5 325.4L314.2 396.1M243.5 319.1L314.2 389.8M243.5 312.8L314.2 383.5M243.5 306.5L314.2 377.2M243.5 300.2L314.2 370.9M243.5 293.9L314.2 364.6M243.5 287.6L314.2 358.3M243.5 281.3L314.2 352.0M243.5 275.0L314.2 345.7M243.5 268.7L314.2 339.4M243.5 262.4L314.2 333.1M243.5 256.1L314.2 326.8M243.5 249.8L314.2 320.5M243.5 243.5L314.2 314.2M243.5 237.2L314.2 307.9M243.5 230.9L314.2 301.6" stroke="#90ff00" stroke-width="0.99" fill="none" clip-path="url(#c17)" shape-rendering="crispEdges"/>
<path d="M244.50 322.50 L258.00 322.50 L260.00 328.00 L263.30 333.70 L267.00 338.70 L302.50 338.70 L306.30 342.50 L313.20 342.50 L313.20 335.30 L310.20 331.50 L269.00 331.50 L269.00 306.50 L264.50 308.00 L246.50 308.00 Z" fill="none" stroke="#00ffff" stroke-width="0.99"/>
<path d="M258 322.5 L260 328.0 L263.3 333.7 L267 338.7" fill="none" stroke="#90ff00" stroke-width="0.99" />
<clipPath id="c18"><path d="M246.50 286.50 L264.50 286.50 L264.50 308.00 L246.50 308.00 Z" clip-rule="evenodd"/></clipPath>
<path d="M245.5 285.5L265.5 265.5M245.5 288.5L265.5 268.5M245.5 291.5L265.5 271.5M245.5 294.5L265.5 274.5M245.5 297.5L265.5 277.5M245.5 300.5L265.5 280.5M245.5 303.5L265.5 283.5M245.5 306.5L265.5 286.5M245.5 309.5L265.5 289.5M245.5 312.5L265.5 292.5M245.5 315.5L265.5 295.5M245.5 318.5L265.5 298.5M245.5 321.5L265.5 301.5M245.5 324.5L265.5 304.5M245.5 327.5L265.5 307.5M245.5 330.5L265.5 310.5M245.5 311.5L265.5 331.5M245.5 308.5L265.5 328.5M245.5 305.5L265.5 325.5M245.5 302.5L265.5 322.5M245.5 299.5L265.5 319.5M245.5 296.5L265.5 316.5M245.5 293.5L265.5 313.5M245.5 290.5L265.5 310.5M245.5 287.5L265.5 307.5M245.5 284.5L265.5 304.5M245.5 281.5L265.5 301.5M245.5 278.5L265.5 298.5M245.5 275.5L265.5 295.5M245.5 272.5L265.5 292.5M245.5 269.5L265.5 289.5M245.5 266.5L265.5 286.5M245.5 263.5L265.5 283.5" stroke="#90ff00" stroke-width="0.99" fill="none" clip-path="url(#c18)" shape-rendering="crispEdges"/>
<path d="M246.50 286.50 L264.50 286.50 L264.50 308.00 L246.50 308.00 Z" fill="none" stroke="#00ffff" stroke-width="0.99"/>
<circle cx="255.50" cy="297.25" r="6.5" fill="#000" stroke="#00ffff" stroke-width="0.99"/>
<line x1="247.00" y1="297.25" x2="264.00" y2="297.25" stroke="#ff0000" stroke-width="0.99" />
<line x1="255.50" y1="288.00" x2="255.50" y2="306.50" stroke="#ff0000" stroke-width="0.99" />
<line x1="269.00" y1="331.00" x2="269.00" y2="290.50" stroke="#00ffff" stroke-width="0.99" />
<line x1="310.20" y1="331.50" x2="310.20" y2="290.50" stroke="#00ffff" stroke-width="0.99" />
<line x1="313.20" y1="335.00" x2="313.20" y2="290.50" stroke="#00ffff" stroke-width="0.99" />
<line x1="223.50" y1="155.00" x2="223.50" y2="367.00" stroke="#00ffff" stroke-width="0.99" />
<line x1="223.50" y1="155.00" x2="244.50" y2="200.50" stroke="#00ffff" stroke-width="0.99" />
<line x1="223.50" y1="368.00" x2="251.50" y2="322.00" stroke="#00ffff" stroke-width="0.99" />
<rect x="243.50" y="246.00" width="3.00" height="10.00" rx="0" fill="none" stroke="#00ffff" stroke-width="0.99"/>
<line x1="241.00" y1="251.50" x2="259.00" y2="251.50" stroke="#ff0000" stroke-width="0.99" />
<rect x="234.00" y="311.50" width="24.00" height="6.00" rx="0" fill="#000" stroke="#ff00ff" stroke-width="0.99"/>
<line x1="236.00" y1="313.00" x2="256.00" y2="313.00" stroke="#00ffff" stroke-width="0.99" />
<line x1="236.00" y1="316.00" x2="256.00" y2="316.00" stroke="#00ffff" stroke-width="0.99" />
<path d="M258 311.5 L261.5 313 L261.5 316 L258 317.5" fill="none" stroke="#00ffff" stroke-width="0.99" />
<rect x="228.50" y="310.00" width="5.00" height="9.50" rx="0" fill="#000" stroke="#00ffff" stroke-width="0.99"/>
<line x1="228.50" y1="313.00" x2="233.50" y2="313.00" stroke="#00ffff" stroke-width="0.99" />
<line x1="228.50" y1="316.50" x2="233.50" y2="316.50" stroke="#00ffff" stroke-width="0.99" />
<line x1="226.50" y1="314.50" x2="265.00" y2="314.50" stroke="#ff0000" stroke-width="0.99" />
<rect x="246" y="236.5" width="2.6" height="50" fill="#00ffff"/>
<line x1="243.00" y1="237.00" x2="243.00" y2="286.00" stroke="#00ffff" stroke-width="0.99" />
<line x1="264.80" y1="215.00" x2="264.80" y2="308.00" stroke="#00ffff" stroke-width="0.99" />
<clipPath id="c19"><path d="M313.20 180.50 L438.80 180.50 L438.80 187.50 L313.20 187.50 Z" clip-rule="evenodd"/></clipPath>
<path d="M312.2 192.5L439.8 320.1M312.2 186.2L439.8 313.8M312.2 179.9L439.8 307.5M312.2 173.6L439.8 301.2M312.2 167.3L439.8 294.9M312.2 161.0L439.8 288.6M312.2 154.7L439.8 282.3M312.2 148.4L439.8 276.0M312.2 142.1L439.8 269.7M312.2 135.8L439.8 263.4M312.2 129.5L439.8 257.1M312.2 123.2L439.8 250.8M312.2 116.9L439.8 244.5M312.2 110.6L439.8 238.2M312.2 104.3L439.8 231.9M312.2 98.0L439.8 225.6M312.2 91.7L439.8 219.3M312.2 85.4L439.8 213.0M312.2 79.1L439.8 206.7M312.2 72.8L439.8 200.4M312.2 66.5L439.8 194.1M312.2 60.2L439.8 187.8M312.2 53.9L439.8 181.5M312.2 47.6L439.8 175.2" stroke="#90ff00" stroke-width="0.99" fill="none" clip-path="url(#c19)" shape-rendering="crispEdges"/>
<path d="M313.20 180.50 L438.80 180.50 L438.80 187.50 L313.20 187.50 Z" fill="none" stroke="#00ffff" stroke-width="0.99"/>
<line x1="264.80" y1="232.70" x2="431.50" y2="232.70" stroke="#00ffff" stroke-width="0.99" />
<clipPath id="c20"><path d="M313.20 342.50 L438.80 342.50 L438.80 335.50 L313.20 335.50 Z" clip-rule="evenodd"/></clipPath>
<path d="M312.2 343.7L439.8 471.3M312.2 337.4L439.8 465.0M312.2 331.1L439.8 458.7M312.2 324.8L439.8 452.4M312.2 318.5L439.8 446.1M312.2 312.2L439.8 439.8M312.2 305.9L439.8 433.5M312.2 299.6L439.8 427.2M312.2 293.3L439.8 420.9M312.2 287.0L439.8 414.6M312.2 280.7L439.8 408.3M312.2 274.4L439.8 402.0M312.2 268.1L439.8 395.7M312.2 261.8L439.8 389.4M312.2 255.5L439.8 383.1M312.2 249.2L439.8 376.8M312.2 242.9L439.8 370.5M312.2 236.6L439.8 364.2M312.2 230.3L439.8 357.9M312.2 224.0L439.8 351.6M312.2 217.7L439.8 345.3M312.2 211.4L439.8 339.0M312.2 205.1L439.8 332.7" stroke="#90ff00" stroke-width="0.99" fill="none" clip-path="url(#c20)" shape-rendering="crispEdges"/>
<path d="M313.20 342.50 L438.80 342.50 L438.80 335.50 L313.20 335.50 Z" fill="none" stroke="#00ffff" stroke-width="0.99"/>
<line x1="264.80" y1="290.30" x2="431.50" y2="290.30" stroke="#00ffff" stroke-width="0.99" />
<clipPath id="c21"><path d="M442.50 123.50 L526.50 123.50 L526.50 180.00 L518.50 180.00 L518.50 136.00 L514.00 130.50 L442.50 130.50 Z" clip-rule="evenodd"/></clipPath>
<path d="M441.5 117.1L527.5 31.1M441.5 122.8L527.5 36.8M441.5 128.5L527.5 42.5M441.5 134.2L527.5 48.2M441.5 139.9L527.5 53.9M441.5 145.6L527.5 59.6M441.5 151.3L527.5 65.3M441.5 157.0L527.5 71.0M441.5 162.7L527.5 76.7M441.5 168.4L527.5 82.4M441.5 174.1L527.5 88.1M441.5 179.8L527.5 93.8M441.5 185.5L527.5 99.5M441.5 191.2L527.5 105.2M441.5 196.9L527.5 110.9M441.5 202.6L527.5 116.6M441.5 208.3L527.5 122.3M441.5 214.0L527.5 128.0M441.5 219.7L527.5 133.7M441.5 225.4L527.5 139.4M441.5 231.1L527.5 145.1M441.5 236.8L527.5 150.8M441.5 242.5L527.5 156.5M441.5 248.2L527.5 162.2M441.5 253.9L527.5 167.9M441.5 259.6L527.5 173.6M441.5 265.3L527.5 179.3M441.5 271.0L527.5 185.0" stroke="#90ff00" stroke-width="0.99" fill="none" clip-path="url(#c21)" shape-rendering="crispEdges"/>
<path d="M442.50 123.50 L526.50 123.50 L526.50 180.00 L518.50 180.00 L518.50 136.00 L514.00 130.50 L442.50 130.50 Z" fill="none" stroke="#00ffff" stroke-width="0.99"/>
<clipPath id="c22"><path d="M442.50 399.50 L526.50 399.50 L526.50 361.00 L518.50 361.00 L518.50 386.00 L513.00 391.50 L442.50 391.50 Z" clip-rule="evenodd"/></clipPath>
<path d="M441.5 356.5L527.5 270.5M441.5 362.2L527.5 276.2M441.5 367.9L527.5 281.9M441.5 373.6L527.5 287.6M441.5 379.3L527.5 293.3M441.5 385.0L527.5 299.0M441.5 390.7L527.5 304.7M441.5 396.4L527.5 310.4M441.5 402.1L527.5 316.1M441.5 407.8L527.5 321.8M441.5 413.5L527.5 327.5M441.5 419.2L527.5 333.2M441.5 424.9L527.5 338.9M441.5 430.6L527.5 344.6M441.5 436.3L527.5 350.3M441.5 442.0L527.5 356.0M441.5 447.7L527.5 361.7M441.5 453.4L527.5 367.4M441.5 459.1L527.5 373.1M441.5 464.8L527.5 378.8M441.5 470.5L527.5 384.5M441.5 476.2L527.5 390.2M441.5 481.9L527.5 395.9M441.5 487.6L527.5 401.6" stroke="#90ff00" stroke-width="0.99" fill="none" clip-path="url(#c22)" shape-rendering="crispEdges"/>
<path d="M442.50 399.50 L526.50 399.50 L526.50 361.00 L518.50 361.00 L518.50 386.00 L513.00 391.50 L442.50 391.50 Z" fill="none" stroke="#00ffff" stroke-width="0.99"/>
<clipPath id="c23"><path d="M442.50 132.50 L510.00 132.50 L510.00 140.00 L472.00 140.00 L472.00 141.50 L457.00 141.50 L452.00 146.00 L452.00 214.20 L431.60 214.20 L431.60 208.70 L434.90 205.80 L440.00 207.60 L442.00 205.00 L442.00 190.00 L438.80 187.10 L438.80 180.50 L442.50 177.20 Z" clip-rule="evenodd"/></clipPath>
<path d="M430.6 221.1L511.0 301.5M430.6 214.7L511.0 295.1M430.6 208.4L511.0 288.8M430.6 202.0L511.0 282.4M430.6 195.7L511.0 276.1M430.6 189.3L511.0 269.7M430.6 183.0L511.0 263.4M430.6 176.6L511.0 257.0M430.6 170.3L511.0 250.7M430.6 163.9L511.0 244.3M430.6 157.6L511.0 237.9M430.6 151.2L511.0 231.6M430.6 144.9L511.0 225.2M430.6 138.5L511.0 218.9M430.6 132.2L511.0 212.6M430.6 125.8L511.0 206.2M430.6 119.5L511.0 199.9M430.6 113.1L511.0 193.5M430.6 106.8L511.0 187.2M430.6 100.4L511.0 180.8M430.6 94.1L511.0 174.5M430.6 87.7L511.0 168.1M430.6 81.4L511.0 161.8M430.6 75.0L511.0 155.4M430.6 68.7L511.0 149.1M430.6 62.3L511.0 142.7M430.6 56.0L511.0 136.4M430.6 49.6L511.0 130.0" stroke="#90ff00" stroke-width="0.99" fill="none" clip-path="url(#c23)" shape-rendering="crispEdges"/>
<path d="M442.50 132.50 L510.00 132.50 L510.00 140.00 L472.00 140.00 L472.00 141.50 L457.00 141.50 L452.00 146.00 L452.00 214.20 L431.60 214.20 L431.60 208.70 L434.90 205.80 L440.00 207.60 L442.00 205.00 L442.00 190.00 L438.80 187.10 L438.80 180.50 L442.50 177.20 Z" fill="none" stroke="#00ffff" stroke-width="0.99"/>
<path d="M438.8 187.1 Q442 188 442 191 V204 Q442 207.6 438.5 207.6 Q434.9 207.6 434.9 204 V192 Q434.9 189 437 187.5" fill="none" stroke="#00ffff" stroke-width="0.99" />
<clipPath id="c24"><path d="M442.50 391.50 L510.00 391.50 L510.00 381.00 L472.00 381.00 L457.00 381.00 L452.00 376.00 L452.00 308.80 L431.60 308.80 L431.60 314.30 L434.90 317.20 L440.00 315.40 L442.00 318.00 L442.00 333.00 L438.80 335.90 L438.80 342.50 L442.50 345.80 Z" clip-rule="evenodd"/></clipPath>
<path d="M430.6 392.5L511.0 472.9M430.6 386.2L511.0 466.6M430.6 379.8L511.0 460.2M430.6 373.5L511.0 453.9M430.6 367.1L511.0 447.5M430.6 360.8L511.0 441.1M430.6 354.4L511.0 434.8M430.6 348.1L511.0 428.4M430.6 341.7L511.0 422.1M430.6 335.4L511.0 415.8M430.6 329.0L511.0 409.4M430.6 322.7L511.0 403.1M430.6 316.3L511.0 396.7M430.6 310.0L511.0 390.4M430.6 303.6L511.0 384.0M430.6 297.2L511.0 377.6M430.6 290.9L511.0 371.3M430.6 284.6L511.0 365.0M430.6 278.2L511.0 358.6M430.6 271.9L511.0 352.2M430.6 265.5L511.0 345.9M430.6 259.2L511.0 339.6M430.6 252.8L511.0 333.2M430.6 246.5L511.0 326.9M430.6 240.1L511.0 320.5M430.6 233.8L511.0 314.1M430.6 227.4L511.0 307.8" stroke="#90ff00" stroke-width="0.99" fill="none" clip-path="url(#c24)" shape-rendering="crispEdges"/>
<path d="M442.50 391.50 L510.00 391.50 L510.00 381.00 L472.00 381.00 L457.00 381.00 L452.00 376.00 L452.00 308.80 L431.60 308.80 L431.60 314.30 L434.90 317.20 L440.00 315.40 L442.00 318.00 L442.00 333.00 L438.80 335.90 L438.80 342.50 L442.50 345.80 Z" fill="none" stroke="#00ffff" stroke-width="0.99"/>
<path d="M438.8 335.9 Q442 335 442 332 V319 Q442 315.4 438.5 315.4 Q434.9 315.4 434.9 319 V331 Q434.9 334 437 335.5" fill="none" stroke="#00ffff" stroke-width="0.99" />
<clipPath id="c25"><path d="M472.50 140.00 L509.50 140.00 L509.50 162.00 L472.50 162.00 Z" clip-rule="evenodd"/></clipPath>
<path d="M471.5 164.9L510.5 203.9M471.5 160.7L510.5 199.7M471.5 156.5L510.5 195.5M471.5 152.3L510.5 191.3M471.5 148.1L510.5 187.1M471.5 143.9L510.5 182.9M471.5 139.7L510.5 178.7M471.5 135.5L510.5 174.5M471.5 131.3L510.5 170.3M471.5 127.1L510.5 166.1M471.5 122.9L510.5 161.9M471.5 118.7L510.5 157.7M471.5 114.5L510.5 153.5M471.5 110.3L510.5 149.3M471.5 106.1L510.5 145.1M471.5 101.9L510.5 140.9M471.5 97.7L510.5 136.7" stroke="#90ff00" stroke-width="0.99" fill="none" clip-path="url(#c25)" shape-rendering="crispEdges"/>
<path d="M472.50 140.00 L509.50 140.00 L509.50 162.00 L472.50 162.00 Z" fill="none" stroke="#00ffff" stroke-width="0.99"/>
<line x1="472.00" y1="162.60" x2="510.00" y2="162.60" stroke="#ff0000" stroke-width="0.99" />
<rect x="472.50" y="164.00" width="36.00" height="9.00" rx="0" fill="none" stroke="#00ffff" stroke-width="0.99"/>
<rect x="510" y="131.5" width="1" height="41.5" fill="#00ffff"/>
<rect x="512" y="131.5" width="2" height="41.5" fill="#00ffff"/>
<path d="M513.5 133 H516 Q518.5 133 518.5 137 V168 Q518.5 172 515 172" fill="none" stroke="#00ffff" stroke-width="0.99" />
<clipPath id="c26"><path d="M454.00 164.50 L465.00 164.50 L465.00 171.00 L468.00 174.00 L527.00 174.00 L527.00 182.50 L454.00 182.50 Z" clip-rule="evenodd"/></clipPath>
<path d="M453.0 163.0L528.0 88.0M453.0 167.4L528.0 92.4M453.0 171.8L528.0 96.8M453.0 176.2L528.0 101.2M453.0 180.6L528.0 105.6M453.0 185.0L528.0 110.0M453.0 189.4L528.0 114.4M453.0 193.8L528.0 118.8M453.0 198.2L528.0 123.2M453.0 202.6L528.0 127.6M453.0 207.0L528.0 132.0M453.0 211.4L528.0 136.4M453.0 215.8L528.0 140.8M453.0 220.2L528.0 145.2M453.0 224.6L528.0 149.6M453.0 229.0L528.0 154.0M453.0 233.4L528.0 158.4M453.0 237.8L528.0 162.8M453.0 242.2L528.0 167.2M453.0 246.6L528.0 171.6M453.0 251.0L528.0 176.0M453.0 255.4L528.0 180.4M453.0 259.8L528.0 184.8" stroke="#90ff00" stroke-width="0.99" fill="none" clip-path="url(#c26)" shape-rendering="crispEdges"/>
<path d="M454.00 164.50 L465.00 164.50 L465.00 171.00 L468.00 174.00 L527.00 174.00 L527.00 182.50 L454.00 182.50 Z" fill="none" stroke="#00ffff" stroke-width="0.99"/>
<line x1="446.00" y1="186.80" x2="537.00" y2="186.80" stroke="#ff0000" stroke-width="0.99" stroke-dasharray="14 3"/>
<line x1="454.00" y1="183.00" x2="527.00" y2="183.00" stroke="#00ffff" stroke-width="0.99" />
<line x1="454.00" y1="190.50" x2="527.00" y2="190.50" stroke="#00ffff" stroke-width="0.99" />
<rect x="454.00" y="183.00" width="24.50" height="7.50" rx="0" fill="none" stroke="#ff00ff" stroke-width="0.99"/>
<rect x="527.00" y="179.50" width="8.00" height="15.00" rx="0" fill="none" stroke="#00ffff" stroke-width="0.99"/>
<clipPath id="c27"><path d="M454.00 191.00 L526.50 191.00 L526.50 207.00 L518.00 212.00 L518.00 215.00 L510.00 215.00 L472.00 215.00 L472.00 216.50 L454.00 216.50 Z M465.00 203.00 L468.00 200.00 L514.00 200.00 L518.00 204.00 L518.00 208.00 L514.00 211.00 L468.00 211.00 L465.00 208.00 Z" clip-rule="evenodd"/></clipPath>
<path d="M453.0 187.5L527.5 113.0M453.0 191.0L527.5 116.5M453.0 194.5L527.5 120.0M453.0 198.0L527.5 123.5M453.0 201.5L527.5 127.0M453.0 205.0L527.5 130.5M453.0 208.5L527.5 134.0M453.0 212.0L527.5 137.5M453.0 215.5L527.5 141.0M453.0 219.0L527.5 144.5M453.0 222.5L527.5 148.0M453.0 226.0L527.5 151.5M453.0 229.5L527.5 155.0M453.0 233.0L527.5 158.5M453.0 236.5L527.5 162.0M453.0 240.0L527.5 165.5M453.0 243.5L527.5 169.0M453.0 247.0L527.5 172.5M453.0 250.5L527.5 176.0M453.0 254.0L527.5 179.5M453.0 257.5L527.5 183.0M453.0 261.0L527.5 186.5M453.0 264.5L527.5 190.0M453.0 268.0L527.5 193.5M453.0 271.5L527.5 197.0M453.0 275.0L527.5 200.5M453.0 278.5L527.5 204.0M453.0 282.0L527.5 207.5M453.0 285.5L527.5 211.0M453.0 289.0L527.5 214.5M453.0 292.5L527.5 218.0" stroke="#90ff00" stroke-width="0.99" fill="none" clip-path="url(#c27)" shape-rendering="crispEdges"/>
<path d="M454.00 191.00 L526.50 191.00 L526.50 207.00 L518.00 212.00 L518.00 215.00 L510.00 215.00 L472.00 215.00 L472.00 216.50 L454.00 216.50 Z M465.00 203.00 L468.00 200.00 L514.00 200.00 L518.00 204.00 L518.00 208.00 L514.00 211.00 L468.00 211.00 L465.00 208.00 Z" fill="none" stroke="#00ffff" stroke-width="0.99"/>
<line x1="466.00" y1="211.60" x2="520.00" y2="211.60" stroke="#ff0000" stroke-width="0.99" stroke-dasharray="14 3"/>
<clipPath id="c28"><path d="M472.50 214.80 L510.00 214.80 L510.00 233.00 L472.50 233.00 Z" clip-rule="evenodd"/></clipPath>
<path d="M471.5 211.0L511.0 171.5M471.5 214.5L511.0 175.0M471.5 218.0L511.0 178.5M471.5 221.5L511.0 182.0M471.5 225.0L511.0 185.5M471.5 228.5L511.0 189.0M471.5 232.0L511.0 192.5M471.5 235.5L511.0 196.0M471.5 239.0L511.0 199.5M471.5 242.5L511.0 203.0M471.5 246.0L511.0 206.5M471.5 249.5L511.0 210.0M471.5 253.0L511.0 213.5M471.5 256.5L511.0 217.0M471.5 260.0L511.0 220.5M471.5 263.5L511.0 224.0M471.5 267.0L511.0 227.5M471.5 270.5L511.0 231.0M471.5 274.0L511.0 234.5" stroke="#90ff00" stroke-width="0.99" fill="none" clip-path="url(#c28)" shape-rendering="crispEdges"/>
<path d="M472.50 214.80 L510.00 214.80 L510.00 233.00 L472.50 233.00 Z" fill="none" stroke="#00ffff" stroke-width="0.99"/>
<clipPath id="c29"><path d="M431.40 214.20 L450.40 214.20 L450.40 236.30 L431.40 236.30 Z" clip-rule="evenodd"/></clipPath>
<path d="M430.4 211.6L451.4 190.6M430.4 214.6L451.4 193.6M430.4 217.6L451.4 196.6M430.4 220.6L451.4 199.6M430.4 223.6L451.4 202.6M430.4 226.6L451.4 205.6M430.4 229.6L451.4 208.6M430.4 232.6L451.4 211.6M430.4 235.6L451.4 214.6M430.4 238.6L451.4 217.6M430.4 241.6L451.4 220.6M430.4 244.6L451.4 223.6M430.4 247.6L451.4 226.6M430.4 250.6L451.4 229.6M430.4 253.6L451.4 232.6M430.4 256.6L451.4 235.6M430.4 259.6L451.4 238.6M430.4 238.4L451.4 259.4M430.4 235.4L451.4 256.4M430.4 232.4L451.4 253.4M430.4 229.4L451.4 250.4M430.4 226.4L451.4 247.4M430.4 223.4L451.4 244.4M430.4 220.4L451.4 241.4M430.4 217.4L451.4 238.4M430.4 214.4L451.4 235.4M430.4 211.4L451.4 232.4M430.4 208.4L451.4 229.4M430.4 205.4L451.4 226.4M430.4 202.4L451.4 223.4M430.4 199.4L451.4 220.4M430.4 196.4L451.4 217.4M430.4 193.4L451.4 214.4M430.4 190.4L451.4 211.4" stroke="#90ff00" stroke-width="0.99" fill="none" clip-path="url(#c29)" shape-rendering="crispEdges"/>
<path d="M431.40 214.20 L450.40 214.20 L450.40 236.30 L431.40 236.30 Z" fill="none" stroke="#00ffff" stroke-width="0.99"/>
<circle cx="440.90" cy="225.25" r="6.4" fill="#000" stroke="#00ffff" stroke-width="0.99"/>
<line x1="431.90" y1="225.25" x2="449.90" y2="225.25" stroke="#ff0000" stroke-width="0.99" />
<line x1="440.90" y1="215.70" x2="440.90" y2="234.80" stroke="#ff0000" stroke-width="0.99" />
<clipPath id="c30"><path d="M454.00 216.50 L472.00 216.50 L472.00 236.70 L454.00 236.70 Z" clip-rule="evenodd"/></clipPath>
<path d="M453.0 213.0L473.0 193.0M453.0 216.0L473.0 196.0M453.0 219.0L473.0 199.0M453.0 222.0L473.0 202.0M453.0 225.0L473.0 205.0M453.0 228.0L473.0 208.0M453.0 231.0L473.0 211.0M453.0 234.0L473.0 214.0M453.0 237.0L473.0 217.0M453.0 240.0L473.0 220.0M453.0 243.0L473.0 223.0M453.0 246.0L473.0 226.0M453.0 249.0L473.0 229.0M453.0 252.0L473.0 232.0M453.0 255.0L473.0 235.0M453.0 258.0L473.0 238.0M453.0 240.0L473.0 260.0M453.0 237.0L473.0 257.0M453.0 234.0L473.0 254.0M453.0 231.0L473.0 251.0M453.0 228.0L473.0 248.0M453.0 225.0L473.0 245.0M453.0 222.0L473.0 242.0M453.0 219.0L473.0 239.0M453.0 216.0L473.0 236.0M453.0 213.0L473.0 233.0M453.0 210.0L473.0 230.0M453.0 207.0L473.0 227.0M453.0 204.0L473.0 224.0M453.0 201.0L473.0 221.0M453.0 198.0L473.0 218.0M453.0 195.0L473.0 215.0" stroke="#90ff00" stroke-width="0.99" fill="none" clip-path="url(#c30)" shape-rendering="crispEdges"/>
<path d="M454.00 216.50 L472.00 216.50 L472.00 236.70 L454.00 236.70 Z" fill="none" stroke="#00ffff" stroke-width="0.99"/>
<circle cx="463.00" cy="226.60" r="6.0" fill="#000" stroke="#00ffff" stroke-width="0.99"/>
<line x1="454.50" y1="226.60" x2="471.50" y2="226.60" stroke="#ff0000" stroke-width="0.99" />
<line x1="463.00" y1="218.00" x2="463.00" y2="235.20" stroke="#ff0000" stroke-width="0.99" />
<clipPath id="c31"><path d="M512.60 216.50 L530.00 216.50 L530.00 236.70 L512.60 236.70 Z" clip-rule="evenodd"/></clipPath>
<path d="M511.6 214.4L531.0 195.0M511.6 217.4L531.0 198.0M511.6 220.4L531.0 201.0M511.6 223.4L531.0 204.0M511.6 226.4L531.0 207.0M511.6 229.4L531.0 210.0M511.6 232.4L531.0 213.0M511.6 235.4L531.0 216.0M511.6 238.4L531.0 219.0M511.6 241.4L531.0 222.0M511.6 244.4L531.0 225.0M511.6 247.4L531.0 228.0M511.6 250.4L531.0 231.0M511.6 253.4L531.0 234.0M511.6 256.4L531.0 237.0M511.6 259.4L531.0 240.0M511.6 238.6L531.0 258.0M511.6 235.6L531.0 255.0M511.6 232.6L531.0 252.0M511.6 229.6L531.0 249.0M511.6 226.6L531.0 246.0M511.6 223.6L531.0 243.0M511.6 220.6L531.0 240.0M511.6 217.6L531.0 237.0M511.6 214.6L531.0 234.0M511.6 211.6L531.0 231.0M511.6 208.6L531.0 228.0M511.6 205.6L531.0 225.0M511.6 202.6L531.0 222.0M511.6 199.6L531.0 219.0M511.6 196.6L531.0 216.0M511.6 193.6L531.0 213.0" stroke="#90ff00" stroke-width="0.99" fill="none" clip-path="url(#c31)" shape-rendering="crispEdges"/>
<path d="M512.60 216.50 L530.00 216.50 L530.00 236.70 L512.60 236.70 Z" fill="none" stroke="#00ffff" stroke-width="0.99"/>
<circle cx="521.30" cy="226.60" r="6.0" fill="#000" stroke="#00ffff" stroke-width="0.99"/>
<line x1="513.10" y1="226.60" x2="529.50" y2="226.60" stroke="#ff0000" stroke-width="0.99" />
<line x1="521.30" y1="218.00" x2="521.30" y2="235.20" stroke="#ff0000" stroke-width="0.99" />
<clipPath id="c32"><path d="M464.00 236.70 L471.50 236.70 L471.50 242.50 L510.50 242.50 L510.50 236.70 L545.00 236.70 L545.00 243.00 L592.00 243.00 L592.00 231.00 L600.50 231.00 L600.50 246.00 L596.00 249.50 L545.00 249.50 L520.00 249.00 L480.00 248.00 L468.00 247.00 L464.00 243.00 Z" clip-rule="evenodd"/></clipPath>
<path d="M463.0 253.0L601.5 391.5M463.0 250.0L601.5 388.5M463.0 247.0L601.5 385.5M463.0 244.0L601.5 382.5M463.0 241.0L601.5 379.5M463.0 238.0L601.5 376.5M463.0 235.0L601.5 373.5M463.0 232.0L601.5 370.5M463.0 229.0L601.5 367.5M463.0 226.0L601.5 364.5M463.0 223.0L601.5 361.5M463.0 220.0L601.5 358.5M463.0 217.0L601.5 355.5M463.0 214.0L601.5 352.5M463.0 211.0L601.5 349.5M463.0 208.0L601.5 346.5M463.0 205.0L601.5 343.5M463.0 202.0L601.5 340.5M463.0 199.0L601.5 337.5M463.0 196.0L601.5 334.5M463.0 193.0L601.5 331.5M463.0 190.0L601.5 328.5M463.0 187.0L601.5 325.5M463.0 184.0L601.5 322.5M463.0 181.0L601.5 319.5M463.0 178.0L601.5 316.5M463.0 175.0L601.5 313.5M463.0 172.0L601.5 310.5M463.0 169.0L601.5 307.5M463.0 166.0L601.5 304.5M463.0 163.0L601.5 301.5M463.0 160.0L601.5 298.5M463.0 157.0L601.5 295.5M463.0 154.0L601.5 292.5M463.0 151.0L601.5 289.5M463.0 148.0L601.5 286.5M463.0 145.0L601.5 283.5M463.0 142.0L601.5 280.5M463.0 139.0L601.5 277.5M463.0 136.0L601.5 274.5M463.0 133.0L601.5 271.5M463.0 130.0L601.5 268.5M463.0 127.0L601.5 265.5M463.0 124.0L601.5 262.5M463.0 121.0L601.5 259.5M463.0 118.0L601.5 256.5M463.0 115.0L601.5 253.5M463.0 112.0L601.5 250.5M463.0 109.0L601.5 247.5M463.0 106.0L601.5 244.5M463.0 103.0L601.5 241.5M463.0 100.0L601.5 238.5M463.0 97.0L601.5 235.5M463.0 94.0L601.5 232.5M463.0 91.0L601.5 229.5" stroke="#90ff00" stroke-width="0.99" fill="none" clip-path="url(#c32)" shape-rendering="crispEdges"/>
<path d="M464.00 236.70 L471.50 236.70 L471.50 242.50 L510.50 242.50 L510.50 236.70 L545.00 236.70 L545.00 243.00 L592.00 243.00 L592.00 231.00 L600.50 231.00 L600.50 246.00 L596.00 249.50 L545.00 249.50 L520.00 249.00 L480.00 248.00 L468.00 247.00 L464.00 243.00 Z" fill="none" stroke="#90ff00" stroke-width="0.99"/>
<rect x="471.60" y="233.60" width="38.70" height="8.80" rx="0" fill="none" stroke="#00ffff" stroke-width="0.99"/>
<line x1="452.00" y1="123.50" x2="452.00" y2="399.50" stroke="#00ffff" stroke-width="0.99" />
<line x1="454.00" y1="164.50" x2="454.00" y2="358.00" stroke="#00ffff" stroke-width="0.99" />
<line x1="528.30" y1="247.00" x2="528.30" y2="285.50" stroke="#00ffff" stroke-width="0.99" />
<clipPath id="c33"><path d="M472.50 285.80 L510.00 285.80 L510.00 308.60 L472.50 308.60 Z" clip-rule="evenodd"/></clipPath>
<path d="M471.5 284.5L511.0 245.0M471.5 288.0L511.0 248.5M471.5 291.5L511.0 252.0M471.5 295.0L511.0 255.5M471.5 298.5L511.0 259.0M471.5 302.0L511.0 262.5M471.5 305.5L511.0 266.0M471.5 309.0L511.0 269.5M471.5 312.5L511.0 273.0M471.5 316.0L511.0 276.5M471.5 319.5L511.0 280.0M471.5 323.0L511.0 283.5M471.5 326.5L511.0 287.0M471.5 330.0L511.0 290.5M471.5 333.5L511.0 294.0M471.5 337.0L511.0 297.5M471.5 340.5L511.0 301.0M471.5 344.0L511.0 304.5M471.5 347.5L511.0 308.0M471.5 351.0L511.0 311.5" stroke="#90ff00" stroke-width="0.99" fill="none" clip-path="url(#c33)" shape-rendering="crispEdges"/>
<path d="M472.50 285.80 L510.00 285.80 L510.00 308.60 L472.50 308.60 Z" fill="none" stroke="#00ffff" stroke-width="0.99"/>
<line x1="472.00" y1="311.50" x2="510.00" y2="311.50" stroke="#ff0000" stroke-width="0.99" stroke-dasharray="14 3"/>
<clipPath id="c34"><path d="M431.40 286.70 L450.40 286.70 L450.40 308.80 L431.40 308.80 Z" clip-rule="evenodd"/></clipPath>
<path d="M430.4 283.6L451.4 262.6M430.4 286.6L451.4 265.6M430.4 289.6L451.4 268.6M430.4 292.6L451.4 271.6M430.4 295.6L451.4 274.6M430.4 298.6L451.4 277.6M430.4 301.6L451.4 280.6M430.4 304.6L451.4 283.6M430.4 307.6L451.4 286.6M430.4 310.6L451.4 289.6M430.4 313.6L451.4 292.6M430.4 316.6L451.4 295.6M430.4 319.6L451.4 298.6M430.4 322.6L451.4 301.6M430.4 325.6L451.4 304.6M430.4 328.6L451.4 307.6M430.4 331.6L451.4 310.6M430.4 310.4L451.4 331.4M430.4 307.4L451.4 328.4M430.4 304.4L451.4 325.4M430.4 301.4L451.4 322.4M430.4 298.4L451.4 319.4M430.4 295.4L451.4 316.4M430.4 292.4L451.4 313.4M430.4 289.4L451.4 310.4M430.4 286.4L451.4 307.4M430.4 283.4L451.4 304.4M430.4 280.4L451.4 301.4M430.4 277.4L451.4 298.4M430.4 274.4L451.4 295.4M430.4 271.4L451.4 292.4M430.4 268.4L451.4 289.4M430.4 265.4L451.4 286.4M430.4 262.4L451.4 283.4" stroke="#90ff00" stroke-width="0.99" fill="none" clip-path="url(#c34)" shape-rendering="crispEdges"/>
<path d="M431.40 286.70 L450.40 286.70 L450.40 308.80 L431.40 308.80 Z" fill="none" stroke="#00ffff" stroke-width="0.99"/>
<circle cx="440.90" cy="297.75" r="6.4" fill="#000" stroke="#00ffff" stroke-width="0.99"/>
<line x1="431.90" y1="297.75" x2="449.90" y2="297.75" stroke="#ff0000" stroke-width="0.99" />
<line x1="440.90" y1="288.20" x2="440.90" y2="307.30" stroke="#ff0000" stroke-width="0.99" />
<clipPath id="c35"><path d="M454.00 285.50 L472.00 285.50 L472.00 305.50 L454.00 305.50 Z" clip-rule="evenodd"/></clipPath>
<path d="M453.0 282.0L473.0 262.0M453.0 285.0L473.0 265.0M453.0 288.0L473.0 268.0M453.0 291.0L473.0 271.0M453.0 294.0L473.0 274.0M453.0 297.0L473.0 277.0M453.0 300.0L473.0 280.0M453.0 303.0L473.0 283.0M453.0 306.0L473.0 286.0M453.0 309.0L473.0 289.0M453.0 312.0L473.0 292.0M453.0 315.0L473.0 295.0M453.0 318.0L473.0 298.0M453.0 321.0L473.0 301.0M453.0 324.0L473.0 304.0M453.0 327.0L473.0 307.0M453.0 309.0L473.0 329.0M453.0 306.0L473.0 326.0M453.0 303.0L473.0 323.0M453.0 300.0L473.0 320.0M453.0 297.0L473.0 317.0M453.0 294.0L473.0 314.0M453.0 291.0L473.0 311.0M453.0 288.0L473.0 308.0M453.0 285.0L473.0 305.0M453.0 282.0L473.0 302.0M453.0 279.0L473.0 299.0M453.0 276.0L473.0 296.0M453.0 273.0L473.0 293.0M453.0 270.0L473.0 290.0M453.0 267.0L473.0 287.0M453.0 264.0L473.0 284.0" stroke="#90ff00" stroke-width="0.99" fill="none" clip-path="url(#c35)" shape-rendering="crispEdges"/>
<path d="M454.00 285.50 L472.00 285.50 L472.00 305.50 L454.00 305.50 Z" fill="none" stroke="#00ffff" stroke-width="0.99"/>
<circle cx="463.00" cy="295.50" r="6.0" fill="#000" stroke="#00ffff" stroke-width="0.99"/>
<line x1="454.50" y1="295.50" x2="471.50" y2="295.50" stroke="#ff0000" stroke-width="0.99" />
<line x1="463.00" y1="287.00" x2="463.00" y2="304.00" stroke="#ff0000" stroke-width="0.99" />
<clipPath id="c36"><path d="M512.60 285.50 L530.00 285.50 L530.00 305.50 L512.60 305.50 Z" clip-rule="evenodd"/></clipPath>
<path d="M511.6 283.4L531.0 264.0M511.6 286.4L531.0 267.0M511.6 289.4L531.0 270.0M511.6 292.4L531.0 273.0M511.6 295.4L531.0 276.0M511.6 298.4L531.0 279.0M511.6 301.4L531.0 282.0M511.6 304.4L531.0 285.0M511.6 307.4L531.0 288.0M511.6 310.4L531.0 291.0M511.6 313.4L531.0 294.0M511.6 316.4L531.0 297.0M511.6 319.4L531.0 300.0M511.6 322.4L531.0 303.0M511.6 325.4L531.0 306.0M511.6 328.4L531.0 309.0M511.6 307.6L531.0 327.0M511.6 304.6L531.0 324.0M511.6 301.6L531.0 321.0M511.6 298.6L531.0 318.0M511.6 295.6L531.0 315.0M511.6 292.6L531.0 312.0M511.6 289.6L531.0 309.0M511.6 286.6L531.0 306.0M511.6 283.6L531.0 303.0M511.6 280.6L531.0 300.0M511.6 277.6L531.0 297.0M511.6 274.6L531.0 294.0M511.6 271.6L531.0 291.0M511.6 268.6L531.0 288.0M511.6 265.6L531.0 285.0M511.6 262.6L531.0 282.0" stroke="#90ff00" stroke-width="0.99" fill="none" clip-path="url(#c36)" shape-rendering="crispEdges"/>
<path d="M512.60 285.50 L530.00 285.50 L530.00 305.50 L512.60 305.50 Z" fill="none" stroke="#00ffff" stroke-width="0.99"/>
<circle cx="521.30" cy="295.50" r="6.0" fill="#000" stroke="#00ffff" stroke-width="0.99"/>
<line x1="513.10" y1="295.50" x2="529.50" y2="295.50" stroke="#ff0000" stroke-width="0.99" />
<line x1="521.30" y1="287.00" x2="521.30" y2="304.00" stroke="#ff0000" stroke-width="0.99" />
<clipPath id="c37"><path d="M454.00 305.50 L472.00 305.50 L472.00 317.00 L454.00 317.00 Z" clip-rule="evenodd"/></clipPath>
<path d="M453.0 303.0L473.0 283.0M453.0 306.5L473.0 286.5M453.0 310.0L473.0 290.0M453.0 313.5L473.0 293.5M453.0 317.0L473.0 297.0M453.0 320.5L473.0 300.5M453.0 324.0L473.0 304.0M453.0 327.5L473.0 307.5M453.0 331.0L473.0 311.0M453.0 334.5L473.0 314.5M453.0 338.0L473.0 318.0" stroke="#90ff00" stroke-width="0.99" fill="none" clip-path="url(#c37)" shape-rendering="crispEdges"/>
<path d="M454.00 305.50 L472.00 305.50 L472.00 317.00 L454.00 317.00 Z" fill="none" stroke="#00ffff" stroke-width="0.99"/>
<clipPath id="c38"><path d="M462.30 318.20 L470.30 318.20 L470.30 326.20 L462.30 326.20 Z" clip-rule="evenodd"/></clipPath>
<path d="M461.3 315.7L471.3 305.7M461.3 318.7L471.3 308.7M461.3 321.7L471.3 311.7M461.3 324.7L471.3 314.7M461.3 327.7L471.3 317.7M461.3 330.7L471.3 320.7M461.3 333.7L471.3 323.7M461.3 336.7L471.3 326.7M461.3 339.7L471.3 329.7M461.3 329.3L471.3 339.3M461.3 326.3L471.3 336.3M461.3 323.3L471.3 333.3M461.3 320.3L471.3 330.3M461.3 317.3L471.3 327.3M461.3 314.3L471.3 324.3M461.3 311.3L471.3 321.3M461.3 308.3L471.3 318.3M461.3 305.3L471.3 315.3" stroke="#90ff00" stroke-width="0.99" fill="none" clip-path="url(#c38)" shape-rendering="crispEdges"/>
<path d="M462.30 318.20 L470.30 318.20 L470.30 326.20 L462.30 326.20 Z" fill="none" stroke="#00ffff" stroke-width="0.99"/>
<circle cx="466.3" cy="322.2" r="2.6" fill="#000" stroke="#00ffff" stroke-width="0.99"/>
<line x1="462.30" y1="322.20" x2="470.30" y2="322.20" stroke="#ff0000" stroke-width="0.99" />
<line x1="466.30" y1="318.70" x2="466.30" y2="325.70" stroke="#ff0000" stroke-width="0.99" />
<clipPath id="c39"><path d="M462.30 346.20 L470.30 346.20 L470.30 354.20 L462.30 354.20 Z" clip-rule="evenodd"/></clipPath>
<path d="M461.3 342.7L471.3 332.7M461.3 345.7L471.3 335.7M461.3 348.7L471.3 338.7M461.3 351.7L471.3 341.7M461.3 354.7L471.3 344.7M461.3 357.7L471.3 347.7M461.3 360.7L471.3 350.7M461.3 363.7L471.3 353.7M461.3 366.7L471.3 356.7M461.3 356.3L471.3 366.3M461.3 353.3L471.3 363.3M461.3 350.3L471.3 360.3M461.3 347.3L471.3 357.3M461.3 344.3L471.3 354.3M461.3 341.3L471.3 351.3M461.3 338.3L471.3 348.3M461.3 335.3L471.3 345.3M461.3 332.3L471.3 342.3" stroke="#90ff00" stroke-width="0.99" fill="none" clip-path="url(#c39)" shape-rendering="crispEdges"/>
<path d="M462.30 346.20 L470.30 346.20 L470.30 354.20 L462.30 354.20 Z" fill="none" stroke="#00ffff" stroke-width="0.99"/>
<circle cx="466.3" cy="350.2" r="2.6" fill="#000" stroke="#00ffff" stroke-width="0.99"/>
<line x1="462.30" y1="350.20" x2="470.30" y2="350.20" stroke="#ff0000" stroke-width="0.99" />
<line x1="466.30" y1="346.70" x2="466.30" y2="353.70" stroke="#ff0000" stroke-width="0.99" />
<clipPath id="c40"><path d="M510.50 318.20 L518.50 318.20 L518.50 326.20 L510.50 326.20 Z" clip-rule="evenodd"/></clipPath>
<path d="M509.5 315.5L519.5 305.5M509.5 318.5L519.5 308.5M509.5 321.5L519.5 311.5M509.5 324.5L519.5 314.5M509.5 327.5L519.5 317.5M509.5 330.5L519.5 320.5M509.5 333.5L519.5 323.5M509.5 336.5L519.5 326.5M509.5 339.5L519.5 329.5M509.5 329.5L519.5 339.5M509.5 326.5L519.5 336.5M509.5 323.5L519.5 333.5M509.5 320.5L519.5 330.5M509.5 317.5L519.5 327.5M509.5 314.5L519.5 324.5M509.5 311.5L519.5 321.5M509.5 308.5L519.5 318.5M509.5 305.5L519.5 315.5" stroke="#90ff00" stroke-width="0.99" fill="none" clip-path="url(#c40)" shape-rendering="crispEdges"/>
<path d="M510.50 318.20 L518.50 318.20 L518.50 326.20 L510.50 326.20 Z" fill="none" stroke="#00ffff" stroke-width="0.99"/>
<circle cx="514.5" cy="322.2" r="2.6" fill="#000" stroke="#00ffff" stroke-width="0.99"/>
<line x1="510.50" y1="322.20" x2="518.50" y2="322.20" stroke="#ff0000" stroke-width="0.99" />
<line x1="514.50" y1="318.70" x2="514.50" y2="325.70" stroke="#ff0000" stroke-width="0.99" />
<clipPath id="c41"><path d="M510.50 346.20 L518.50 346.20 L518.50 354.20 L510.50 354.20 Z" clip-rule="evenodd"/></clipPath>
<path d="M509.5 342.5L519.5 332.5M509.5 345.5L519.5 335.5M509.5 348.5L519.5 338.5M509.5 351.5L519.5 341.5M509.5 354.5L519.5 344.5M509.5 357.5L519.5 347.5M509.5 360.5L519.5 350.5M509.5 363.5L519.5 353.5M509.5 366.5L519.5 356.5M509.5 356.5L519.5 366.5M509.5 353.5L519.5 363.5M509.5 350.5L519.5 360.5M509.5 347.5L519.5 357.5M509.5 344.5L519.5 354.5M509.5 341.5L519.5 351.5M509.5 338.5L519.5 348.5M509.5 335.5L519.5 345.5M509.5 332.5L519.5 342.5" stroke="#90ff00" stroke-width="0.99" fill="none" clip-path="url(#c41)" shape-rendering="crispEdges"/>
<path d="M510.50 346.20 L518.50 346.20 L518.50 354.20 L510.50 354.20 Z" fill="none" stroke="#00ffff" stroke-width="0.99"/>
<circle cx="514.5" cy="350.2" r="2.6" fill="#000" stroke="#00ffff" stroke-width="0.99"/>
<line x1="510.50" y1="350.20" x2="518.50" y2="350.20" stroke="#ff0000" stroke-width="0.99" />
<line x1="514.50" y1="346.70" x2="514.50" y2="353.70" stroke="#ff0000" stroke-width="0.99" />
<rect x="461.20" y="326.00" width="2.6" height="20.00" fill="#00ffff"/>
<rect x="470.70" y="311.00" width="3" height="47.00" fill="#00ffff"/>
<rect x="508.30" y="311.00" width="3" height="47.00" fill="#00ffff"/>
<line x1="519.00" y1="326.00" x2="519.00" y2="346.00" stroke="#00ffff" stroke-width="0.99" />
<clipPath id="c42"><path d="M530.00 285.20 L545.50 285.20 L545.50 315.00 L527.00 316.00 L521.00 318.00 L510.70 318.00 L510.70 305.50 L530.00 305.50 Z" clip-rule="evenodd"/></clipPath>
<path d="M509.7 281.3L546.5 244.5M509.7 284.8L546.5 248.0M509.7 288.3L546.5 251.5M509.7 291.8L546.5 255.0M509.7 295.3L546.5 258.5M509.7 298.8L546.5 262.0M509.7 302.3L546.5 265.5M509.7 305.8L546.5 269.0M509.7 309.3L546.5 272.5M509.7 312.8L546.5 276.0M509.7 316.3L546.5 279.5M509.7 319.8L546.5 283.0M509.7 323.3L546.5 286.5M509.7 326.8L546.5 290.0M509.7 330.3L546.5 293.5M509.7 333.8L546.5 297.0M509.7 337.3L546.5 300.5M509.7 340.8L546.5 304.0M509.7 344.3L546.5 307.5M509.7 347.8L546.5 311.0M509.7 351.3L546.5 314.5M509.7 354.8L546.5 318.0M509.7 358.3L546.5 321.5" stroke="#90ff00" stroke-width="0.99" fill="none" clip-path="url(#c42)" shape-rendering="crispEdges"/>
<path d="M530.00 285.20 L545.50 285.20 L545.50 315.00 L527.00 316.00 L521.00 318.00 L510.70 318.00 L510.70 305.50 L530.00 305.50 Z" fill="none" stroke="#00ffff" stroke-width="0.99"/>
<rect x="522.00" y="308.60" width="22.50" height="5.20" rx="0" fill="#000" stroke="#00ffff" stroke-width="0.99"/>
<line x1="518.00" y1="311.20" x2="547.00" y2="311.20" stroke="#ff0000" stroke-width="0.99" />
<clipPath id="c43"><path d="M526.50 316.00 L533.00 316.00 L533.00 355.50 L526.50 355.50 Z" clip-rule="evenodd"/></clipPath>
<path d="M525.5 314.5L534.0 306.0M525.5 317.5L534.0 309.0M525.5 320.5L534.0 312.0M525.5 323.5L534.0 315.0M525.5 326.5L534.0 318.0M525.5 329.5L534.0 321.0M525.5 332.5L534.0 324.0M525.5 335.5L534.0 327.0M525.5 338.5L534.0 330.0M525.5 341.5L534.0 333.0M525.5 344.5L534.0 336.0M525.5 347.5L534.0 339.0M525.5 350.5L534.0 342.0M525.5 353.5L534.0 345.0M525.5 356.5L534.0 348.0M525.5 359.5L534.0 351.0M525.5 362.5L534.0 354.0M525.5 365.5L534.0 357.0M525.5 357.5L534.0 366.0M525.5 354.5L534.0 363.0M525.5 351.5L534.0 360.0M525.5 348.5L534.0 357.0M525.5 345.5L534.0 354.0M525.5 342.5L534.0 351.0M525.5 339.5L534.0 348.0M525.5 336.5L534.0 345.0M525.5 333.5L534.0 342.0M525.5 330.5L534.0 339.0M525.5 327.5L534.0 336.0M525.5 324.5L534.0 333.0M525.5 321.5L534.0 330.0M525.5 318.5L534.0 327.0M525.5 315.5L534.0 324.0M525.5 312.5L534.0 321.0M525.5 309.5L534.0 318.0M525.5 306.5L534.0 315.0" stroke="#90ff00" stroke-width="0.99" fill="none" clip-path="url(#c43)" shape-rendering="crispEdges"/>
<path d="M526.50 316.00 L533.00 316.00 L533.00 355.50 L526.50 355.50 Z" fill="none" stroke="#00ffff" stroke-width="0.99"/>
<line x1="446.00" y1="336.30" x2="536.00" y2="336.30" stroke="#ff0000" stroke-width="0.99" stroke-dasharray="14 3 6 3"/>
<clipPath id="c44"><path d="M472.80 362.20 L509.40 362.20 L509.40 383.00 L472.80 383.00 Z" clip-rule="evenodd"/></clipPath>
<path d="M471.8 387.8L510.4 426.4M471.8 383.6L510.4 422.2M471.8 379.4L510.4 418.0M471.8 375.2L510.4 413.8M471.8 371.0L510.4 409.6M471.8 366.8L510.4 405.4M471.8 362.6L510.4 401.2M471.8 358.4L510.4 397.0M471.8 354.2L510.4 392.8M471.8 350.0L510.4 388.6M471.8 345.8L510.4 384.4M471.8 341.6L510.4 380.2M471.8 337.4L510.4 376.0M471.8 333.2L510.4 371.8M471.8 329.0L510.4 367.6M471.8 324.8L510.4 363.4M471.8 320.6L510.4 359.2" stroke="#90ff00" stroke-width="0.99" fill="none" clip-path="url(#c44)" shape-rendering="crispEdges"/>
<path d="M472.80 362.20 L509.40 362.20 L509.40 383.00 L472.80 383.00 Z" fill="none" stroke="#00ffff" stroke-width="0.99"/>
<line x1="470.00" y1="361.20" x2="512.00" y2="361.20" stroke="#ff0000" stroke-width="0.99" />
<line x1="473.00" y1="358.50" x2="509.00" y2="358.50" stroke="#ff00ff" stroke-width="0.99" />
<clipPath id="c45"><path d="M454.00 354.00 L472.00 354.00 L472.00 358.40 L454.00 358.40 Z" clip-rule="evenodd"/></clipPath>
<path d="M453.0 352.0L473.0 332.0M453.0 355.5L473.0 335.5M453.0 359.0L473.0 339.0M453.0 362.5L473.0 342.5M453.0 366.0L473.0 346.0M453.0 369.5L473.0 349.5M453.0 373.0L473.0 353.0M453.0 376.5L473.0 356.5M453.0 380.0L473.0 360.0" stroke="#90ff00" stroke-width="0.99" fill="none" clip-path="url(#c45)" shape-rendering="crispEdges"/>
<path d="M454.00 354.00 L472.00 354.00 L472.00 358.40 L454.00 358.40 Z" fill="none" stroke="#00ffff" stroke-width="0.99"/>
<rect x="510.00" y="358.00" width="2" height="33.00" fill="#00ffff"/>
<rect x="517.60" y="355.50" width="18.40" height="6.00" rx="0" fill="none" stroke="#00ffff" stroke-width="0.99"/>
<line x1="520.00" y1="358.50" x2="540.00" y2="358.50" stroke="#ff0000" stroke-width="0.99" />
<line x1="518.50" y1="361.00" x2="518.50" y2="386.00" stroke="#00ffff" stroke-width="0.99" />
<rect x="489.00" y="381.00" width="21.50" height="5.00" rx="0" fill="#000" stroke="#00ffff" stroke-width="0.99"/>
<line x1="492.00" y1="383.50" x2="512.00" y2="383.50" stroke="#ff0000" stroke-width="0.99" />
<line x1="489.00" y1="381.00" x2="496.00" y2="381.00" stroke="#ff00ff" stroke-width="0.99" />
<rect x="553.00" y="73.00" width="31.50" height="1" fill="#00ffff"/>
<line x1="549.00" y1="75.30" x2="588.00" y2="75.30" stroke="#ff0000" stroke-width="0.99" />
<clipPath id="c46"><path d="M553.40 77.00 L583.70 77.00 L583.70 86.50 L574.00 87.50 L571.00 92.00 L568.50 93.50 L566.00 92.00 L563.00 87.50 L553.40 86.50 Z" clip-rule="evenodd"/></clipPath>
<path d="M552.4 96.4L584.7 128.7M552.4 93.4L584.7 125.7M552.4 90.4L584.7 122.7M552.4 87.4L584.7 119.7M552.4 84.4L584.7 116.7M552.4 81.4L584.7 113.7M552.4 78.4L584.7 110.7M552.4 75.4L584.7 107.7M552.4 72.4L584.7 104.7M552.4 69.4L584.7 101.7M552.4 66.4L584.7 98.7M552.4 63.4L584.7 95.7M552.4 60.4L584.7 92.7M552.4 57.4L584.7 89.7M552.4 54.4L584.7 86.7M552.4 51.4L584.7 83.7M552.4 48.4L584.7 80.7M552.4 45.4L584.7 77.7M552.4 42.4L584.7 74.7" stroke="#90ff00" stroke-width="0.99" fill="none" clip-path="url(#c46)" shape-rendering="crispEdges"/>
<path d="M553.40 77.00 L583.70 77.00 L583.70 86.50 L574.00 87.50 L571.00 92.00 L568.50 93.50 L566.00 92.00 L563.00 87.50 L553.40 86.50 Z" fill="none" stroke="#00ffff" stroke-width="0.99"/>
<clipPath id="c47"><path d="M553.40 444.50 L583.70 444.50 L583.70 435.00 L579.00 433.50 L574.00 433.50 L572.00 430.00 L568.50 428.30 L565.00 430.00 L563.00 433.50 L558.00 433.50 L553.40 435.00 Z" clip-rule="evenodd"/></clipPath>
<path d="M552.4 447.4L584.7 479.7M552.4 444.4L584.7 476.7M552.4 441.4L584.7 473.7M552.4 438.4L584.7 470.7M552.4 435.4L584.7 467.7M552.4 432.4L584.7 464.7M552.4 429.4L584.7 461.7M552.4 426.4L584.7 458.7M552.4 423.4L584.7 455.7M552.4 420.4L584.7 452.7M552.4 417.4L584.7 449.7M552.4 414.4L584.7 446.7M552.4 411.4L584.7 443.7M552.4 408.4L584.7 440.7M552.4 405.4L584.7 437.7M552.4 402.4L584.7 434.7M552.4 399.4L584.7 431.7M552.4 396.4L584.7 428.7M552.4 393.4L584.7 425.7" stroke="#90ff00" stroke-width="0.99" fill="none" clip-path="url(#c47)" shape-rendering="crispEdges"/>
<path d="M553.40 444.50 L583.70 444.50 L583.70 435.00 L579.00 433.50 L574.00 433.50 L572.00 430.00 L568.50 428.30 L565.00 430.00 L563.00 433.50 L558.00 433.50 L553.40 435.00 Z" fill="none" stroke="#00ffff" stroke-width="0.99"/>
<line x1="549.00" y1="447.60" x2="588.00" y2="447.60" stroke="#ff0000" stroke-width="0.99" />
<rect x="553.00" y="449.00" width="31.50" height="1" fill="#00ffff"/>
<line x1="553.40" y1="73.00" x2="553.40" y2="222.00" stroke="#00ffff" stroke-width="0.99" />
<line x1="553.40" y1="299.00" x2="553.40" y2="449.00" stroke="#00ffff" stroke-width="0.99" />
<line x1="556.60" y1="87.00" x2="556.60" y2="222.00" stroke="#00ffff" stroke-width="0.99" />
<line x1="556.60" y1="299.00" x2="556.60" y2="434.00" stroke="#00ffff" stroke-width="0.99" />
<line x1="563.50" y1="87.00" x2="563.50" y2="206.00" stroke="#00ffff" stroke-width="0.99" />
<line x1="563.50" y1="314.00" x2="563.50" y2="434.00" stroke="#00ffff" stroke-width="0.99" />
<line x1="573.60" y1="87.00" x2="573.60" y2="206.00" stroke="#00ffff" stroke-width="0.99" />
<line x1="573.60" y1="314.00" x2="573.60" y2="434.00" stroke="#00ffff" stroke-width="0.99" />
<line x1="579.30" y1="87.00" x2="579.30" y2="222.00" stroke="#00ffff" stroke-width="0.99" />
<line x1="579.30" y1="299.00" x2="579.30" y2="434.00" stroke="#00ffff" stroke-width="0.99" />
<line x1="583.70" y1="73.00" x2="583.70" y2="222.00" stroke="#00ffff" stroke-width="0.99" />
<line x1="583.70" y1="299.00" x2="583.70" y2="449.00" stroke="#00ffff" stroke-width="0.99" />
<clipPath id="c48"><path d="M546.00 233.60 L546.00 226.00 L548.00 224.00 L555.00 224.00 L560.00 221.00 L562.50 214.00 L563.00 209.00 L566.00 206.30 L572.00 206.30 L575.00 209.00 L576.00 214.00 L578.00 221.00 L583.00 224.00 L589.00 224.00 L592.00 226.00 L592.00 233.60 Z" clip-rule="evenodd"/></clipPath>
<path d="M545.0 236.0L593.0 284.0M545.0 233.0L593.0 281.0M545.0 230.0L593.0 278.0M545.0 227.0L593.0 275.0M545.0 224.0L593.0 272.0M545.0 221.0L593.0 269.0M545.0 218.0L593.0 266.0M545.0 215.0L593.0 263.0M545.0 212.0L593.0 260.0M545.0 209.0L593.0 257.0M545.0 206.0L593.0 254.0M545.0 203.0L593.0 251.0M545.0 200.0L593.0 248.0M545.0 197.0L593.0 245.0M545.0 194.0L593.0 242.0M545.0 191.0L593.0 239.0M545.0 188.0L593.0 236.0M545.0 185.0L593.0 233.0M545.0 182.0L593.0 230.0M545.0 179.0L593.0 227.0M545.0 176.0L593.0 224.0M545.0 173.0L593.0 221.0M545.0 170.0L593.0 218.0M545.0 167.0L593.0 215.0M545.0 164.0L593.0 212.0M545.0 161.0L593.0 209.0M545.0 158.0L593.0 206.0M545.0 155.0L593.0 203.0" stroke="#90ff00" stroke-width="0.99" fill="none" clip-path="url(#c48)" shape-rendering="crispEdges"/>
<path d="M546.00 233.60 L546.00 226.00 L548.00 224.00 L555.00 224.00 L560.00 221.00 L562.50 214.00 L563.00 209.00 L566.00 206.30 L572.00 206.30 L575.00 209.00 L576.00 214.00 L578.00 221.00 L583.00 224.00 L589.00 224.00 L592.00 226.00 L592.00 233.60 Z" fill="none" stroke="#00ffff" stroke-width="0.99"/>
<clipPath id="c49"><path d="M545.50 285.20 L545.50 295.00 L548.00 298.40 L556.00 298.40 L561.00 301.00 L563.00 307.00 L563.50 313.00 L566.00 315.50 L571.00 315.50 L573.50 313.00 L574.00 307.00 L576.00 301.00 L581.00 298.40 L588.00 298.40 L590.80 295.00 L590.80 285.20 Z" clip-rule="evenodd"/></clipPath>
<path d="M544.5 316.5L591.8 363.8M544.5 313.5L591.8 360.8M544.5 310.5L591.8 357.8M544.5 307.5L591.8 354.8M544.5 304.5L591.8 351.8M544.5 301.5L591.8 348.8M544.5 298.5L591.8 345.8M544.5 295.5L591.8 342.8M544.5 292.5L591.8 339.8M544.5 289.5L591.8 336.8M544.5 286.5L591.8 333.8M544.5 283.5L591.8 330.8M544.5 280.5L591.8 327.8M544.5 277.5L591.8 324.8M544.5 274.5L591.8 321.8M544.5 271.5L591.8 318.8M544.5 268.5L591.8 315.8M544.5 265.5L591.8 312.8M544.5 262.5L591.8 309.8M544.5 259.5L591.8 306.8M544.5 256.5L591.8 303.8M544.5 253.5L591.8 300.8M544.5 250.5L591.8 297.8M544.5 247.5L591.8 294.8M544.5 244.5L591.8 291.8M544.5 241.5L591.8 288.8M544.5 238.5L591.8 285.8M544.5 235.5L591.8 282.8" stroke="#90ff00" stroke-width="0.99" fill="none" clip-path="url(#c49)" shape-rendering="crispEdges"/>
<path d="M545.50 285.20 L545.50 295.00 L548.00 298.40 L556.00 298.40 L561.00 301.00 L563.00 307.00 L563.50 313.00 L566.00 315.50 L571.00 315.50 L573.50 313.00 L574.00 307.00 L576.00 301.00 L581.00 298.40 L588.00 298.40 L590.80 295.00 L590.80 285.20 Z" fill="none" stroke="#00ffff" stroke-width="0.99"/>
<clipPath id="c50"><path d="M454.00 285.20 L545.50 285.20 L545.50 285.30 L454.00 285.30 Z" clip-rule="evenodd"/></clipPath>
<path d="M453.0 279.0L546.5 185.5M453.0 285.1L546.5 191.6M453.0 291.1L546.5 197.6M453.0 297.2L546.5 203.7M453.0 303.2L546.5 209.8M453.0 309.3L546.5 215.8M453.0 315.4L546.5 221.9M453.0 321.4L546.5 227.9M453.0 327.4L546.5 233.9M453.0 333.5L546.5 240.0M453.0 339.5L546.5 246.0M453.0 345.6L546.5 252.1M453.0 351.6L546.5 258.1M453.0 357.7L546.5 264.2M453.0 363.8L546.5 270.2M453.0 369.8L546.5 276.3M453.0 375.9L546.5 282.4M453.0 381.9L546.5 288.4" stroke="#90ff00" stroke-width="0.99" fill="none" clip-path="url(#c50)" shape-rendering="crispEdges"/>
<path d="M454.00 285.20 L545.50 285.20 L545.50 285.30 L454.00 285.30 Z" fill="none" stroke="#00ffff" stroke-width="0.99"/>
<clipPath id="c51"><path d="M590.80 285.20 L628.80 285.20 L628.80 292.50 L590.80 292.50 Z" clip-rule="evenodd"/></clipPath>
<path d="M589.8 281.7L629.8 241.7M589.8 285.2L629.8 245.2M589.8 288.7L629.8 248.7M589.8 292.2L629.8 252.2M589.8 295.7L629.8 255.7M589.8 299.2L629.8 259.2M589.8 302.7L629.8 262.7M589.8 306.2L629.8 266.2M589.8 309.7L629.8 269.7M589.8 313.2L629.8 273.2M589.8 316.7L629.8 276.7M589.8 320.2L629.8 280.2M589.8 323.7L629.8 283.7M589.8 327.2L629.8 287.2M589.8 330.7L629.8 290.7M589.8 334.2L629.8 294.2" stroke="#90ff00" stroke-width="0.99" fill="none" clip-path="url(#c51)" shape-rendering="crispEdges"/>
<path d="M590.80 285.20 L628.80 285.20 L628.80 292.50 L590.80 292.50 Z" fill="none" stroke="#00ffff" stroke-width="0.99"/>
<rect x="531.00" y="292.70" width="6.20" height="6.90" rx="0" fill="none" stroke="#e6b86e" stroke-width="0.99"/>
<line x1="531.00" y1="292.70" x2="537.20" y2="299.60" stroke="#e6b86e" stroke-width="0.99" />
<line x1="537.20" y1="292.70" x2="531.00" y2="299.60" stroke="#e6b86e" stroke-width="0.99" />
<rect x="531.00" y="222.50" width="6.20" height="7.00" rx="0" fill="none" stroke="#e6b86e" stroke-width="0.99"/>
<line x1="531.00" y1="222.50" x2="537.20" y2="229.50" stroke="#e6b86e" stroke-width="0.99" />
<line x1="537.20" y1="222.50" x2="531.00" y2="229.50" stroke="#e6b86e" stroke-width="0.99" />
<rect x="522.00" y="207.00" width="22.00" height="6.00" rx="0" fill="none" stroke="#00ffff" stroke-width="0.99"/>
<line x1="520.00" y1="210.00" x2="546.00" y2="210.00" stroke="#ff0000" stroke-width="0.99" />
<clipPath id="c52"><path d="M530.00 214.00 L545.00 214.00 L545.00 236.70 L530.00 236.70 Z" clip-rule="evenodd"/></clipPath>
<path d="M529.0 213.0L546.0 196.0M529.0 216.5L546.0 199.5M529.0 220.0L546.0 203.0M529.0 223.5L546.0 206.5M529.0 227.0L546.0 210.0M529.0 230.5L546.0 213.5M529.0 234.0L546.0 217.0M529.0 237.5L546.0 220.5M529.0 241.0L546.0 224.0M529.0 244.5L546.0 227.5M529.0 248.0L546.0 231.0M529.0 251.5L546.0 234.5M529.0 255.0L546.0 238.0" stroke="#90ff00" stroke-width="0.99" fill="none" clip-path="url(#c52)" shape-rendering="crispEdges"/>
<path d="M530.00 214.00 L545.00 214.00 L545.00 236.70 L530.00 236.70 Z" fill="none" stroke="#90ff00" stroke-width="0.99"/>
<rect x="531.00" y="222.50" width="6.20" height="7.00" rx="0" fill="#000" stroke="#e6b86e" stroke-width="0.99"/>
<line x1="531.00" y1="222.50" x2="537.20" y2="229.50" stroke="#e6b86e" stroke-width="0.99" />
<line x1="537.20" y1="222.50" x2="531.00" y2="229.50" stroke="#e6b86e" stroke-width="0.99" />
<clipPath id="c53"><path d="M607.30 199.30 L614.90 199.30 L614.90 212.20 L607.30 212.20 Z" clip-rule="evenodd"/></clipPath>
<path d="M606.3 195.2L615.9 185.6M606.3 198.7L615.9 189.1M606.3 202.2L615.9 192.6M606.3 205.7L615.9 196.1M606.3 209.2L615.9 199.6M606.3 212.7L615.9 203.1M606.3 216.2L615.9 206.6M606.3 219.7L615.9 210.1M606.3 223.2L615.9 213.6" stroke="#90ff00" stroke-width="0.99" fill="none" clip-path="url(#c53)" shape-rendering="crispEdges"/>
<path d="M607.30 199.30 L614.90 199.30 L614.90 212.20 L607.30 212.20 Z" fill="none" stroke="#00ffff" stroke-width="0.99"/>
<line x1="611.00" y1="197.00" x2="611.00" y2="210.00" stroke="#ff0000" stroke-width="0.99" />
<clipPath id="c54"><path d="M663.00 199.30 L670.40 199.30 L670.40 212.20 L663.00 212.20 Z" clip-rule="evenodd"/></clipPath>
<path d="M662.0 195.5L671.4 186.1M662.0 199.0L671.4 189.6M662.0 202.5L671.4 193.1M662.0 206.0L671.4 196.6M662.0 209.5L671.4 200.1M662.0 213.0L671.4 203.6M662.0 216.5L671.4 207.1M662.0 220.0L671.4 210.6M662.0 223.5L671.4 214.1" stroke="#90ff00" stroke-width="0.99" fill="none" clip-path="url(#c54)" shape-rendering="crispEdges"/>
<path d="M663.00 199.30 L670.40 199.30 L670.40 212.20 L663.00 212.20 Z" fill="none" stroke="#00ffff" stroke-width="0.99"/>
<line x1="660.00" y1="205.00" x2="673.00" y2="205.00" stroke="#ff0000" stroke-width="0.99" />
<clipPath id="c55"><path d="M607.30 212.20 L628.80 212.20 L628.80 230.40 L607.30 230.40 Z M619.60 216.50 L628.40 216.50 L628.40 229.80 L619.60 229.80 Z" clip-rule="evenodd"/></clipPath>
<path d="M606.3 209.2L629.8 185.7M606.3 212.7L629.8 189.2M606.3 216.2L629.8 192.7M606.3 219.7L629.8 196.2M606.3 223.2L629.8 199.7M606.3 226.7L629.8 203.2M606.3 230.2L629.8 206.7M606.3 233.7L629.8 210.2M606.3 237.2L629.8 213.7M606.3 240.7L629.8 217.2M606.3 244.2L629.8 220.7M606.3 247.7L629.8 224.2M606.3 251.2L629.8 227.7M606.3 254.7L629.8 231.2M606.3 258.2L629.8 234.7" stroke="#90ff00" stroke-width="0.99" fill="none" clip-path="url(#c55)" shape-rendering="crispEdges"/>
<path d="M607.30 212.20 L628.80 212.20 L628.80 230.40 L607.30 230.40 Z M619.60 216.50 L628.40 216.50 L628.40 229.80 L619.60 229.80 Z" fill="none" stroke="#00ffff" stroke-width="0.99"/>
<rect x="613.20" y="222.20" width="6.40" height="7.60" rx="0" fill="#000" stroke="#e6b86e" stroke-width="0.99"/>
<line x1="613.20" y1="222.20" x2="619.60" y2="229.80" stroke="#e6b86e" stroke-width="0.99" />
<line x1="619.60" y1="222.20" x2="613.20" y2="229.80" stroke="#e6b86e" stroke-width="0.99" />
<clipPath id="c56"><path d="M628.80 212.40 L649.80 212.40 L649.80 237.40 L628.80 237.40 Z" clip-rule="evenodd"/></clipPath>
<path d="M627.8 209.2L650.8 186.2M627.8 212.2L650.8 189.2M627.8 215.2L650.8 192.2M627.8 218.2L650.8 195.2M627.8 221.2L650.8 198.2M627.8 224.2L650.8 201.2M627.8 227.2L650.8 204.2M627.8 230.2L650.8 207.2M627.8 233.2L650.8 210.2M627.8 236.2L650.8 213.2M627.8 239.2L650.8 216.2M627.8 242.2L650.8 219.2M627.8 245.2L650.8 222.2M627.8 248.2L650.8 225.2M627.8 251.2L650.8 228.2M627.8 254.2L650.8 231.2M627.8 257.2L650.8 234.2M627.8 260.2L650.8 237.2M627.8 263.2L650.8 240.2M627.8 240.8L650.8 263.8M627.8 237.8L650.8 260.8M627.8 234.8L650.8 257.8M627.8 231.8L650.8 254.8M627.8 228.8L650.8 251.8M627.8 225.8L650.8 248.8M627.8 222.8L650.8 245.8M627.8 219.8L650.8 242.8M627.8 216.8L650.8 239.8M627.8 213.8L650.8 236.8M627.8 210.8L650.8 233.8M627.8 207.8L650.8 230.8M627.8 204.8L650.8 227.8M627.8 201.8L650.8 224.8M627.8 198.8L650.8 221.8M627.8 195.8L650.8 218.8M627.8 192.8L650.8 215.8M627.8 189.8L650.8 212.8M627.8 186.8L650.8 209.8" stroke="#90ff00" stroke-width="0.99" fill="none" clip-path="url(#c56)" shape-rendering="crispEdges"/>
<path d="M628.80 212.40 L649.80 212.40 L649.80 237.40 L628.80 237.40 Z" fill="none" stroke="#00ffff" stroke-width="0.99"/>
<circle cx="639.30" cy="224.90" r="7.3" fill="#000" stroke="#00ffff" stroke-width="0.99"/>
<line x1="629.30" y1="224.90" x2="649.30" y2="224.90" stroke="#ff0000" stroke-width="0.99" />
<line x1="639.30" y1="213.90" x2="639.30" y2="235.90" stroke="#ff0000" stroke-width="0.99" />
<clipPath id="c57"><path d="M650.50 212.20 L673.20 212.20 L673.20 239.20 L650.50 239.20 Z M651.00 216.50 L659.30 216.50 L659.30 229.80 L651.00 229.80 Z" clip-rule="evenodd"/></clipPath>
<path d="M649.5 208.0L674.2 183.3M649.5 211.5L674.2 186.8M649.5 215.0L674.2 190.3M649.5 218.5L674.2 193.8M649.5 222.0L674.2 197.3M649.5 225.5L674.2 200.8M649.5 229.0L674.2 204.3M649.5 232.5L674.2 207.8M649.5 236.0L674.2 211.3M649.5 239.5L674.2 214.8M649.5 243.0L674.2 218.3M649.5 246.5L674.2 221.8M649.5 250.0L674.2 225.3M649.5 253.5L674.2 228.8M649.5 257.0L674.2 232.3M649.5 260.5L674.2 235.8M649.5 264.0L674.2 239.3M649.5 267.5L674.2 242.8" stroke="#90ff00" stroke-width="0.99" fill="none" clip-path="url(#c57)" shape-rendering="crispEdges"/>
<path d="M650.50 212.20 L673.20 212.20 L673.20 239.20 L650.50 239.20 Z M651.00 216.50 L659.30 216.50 L659.30 229.80 L651.00 229.80 Z" fill="none" stroke="#00ffff" stroke-width="0.99"/>
<rect x="659.30" y="222.20" width="6.70" height="7.60" rx="0" fill="#000" stroke="#e6b86e" stroke-width="0.99"/>
<line x1="659.30" y1="222.20" x2="666.00" y2="229.80" stroke="#e6b86e" stroke-width="0.99" />
<line x1="666.00" y1="222.20" x2="659.30" y2="229.80" stroke="#e6b86e" stroke-width="0.99" />
<line x1="650.00" y1="240.20" x2="673.00" y2="240.20" stroke="#ff00ff" stroke-width="0.99" />
<line x1="655.00" y1="234.00" x2="672.00" y2="234.00" stroke="#ff0000" stroke-width="0.99" stroke-dasharray="5 2"/>
<clipPath id="c58"><path d="M607.30 292.50 L628.80 292.50 L628.80 311.00 L607.30 311.00 Z M619.60 293.50 L628.40 293.50 L628.40 306.50 L619.60 306.50 Z" clip-rule="evenodd"/></clipPath>
<path d="M606.3 289.7L629.8 266.2M606.3 293.2L629.8 269.7M606.3 296.7L629.8 273.2M606.3 300.2L629.8 276.7M606.3 303.7L629.8 280.2M606.3 307.2L629.8 283.7M606.3 310.7L629.8 287.2M606.3 314.2L629.8 290.7M606.3 317.7L629.8 294.2M606.3 321.2L629.8 297.7M606.3 324.7L629.8 301.2M606.3 328.2L629.8 304.7M606.3 331.7L629.8 308.2M606.3 335.2L629.8 311.7M606.3 338.7L629.8 315.2" stroke="#90ff00" stroke-width="0.99" fill="none" clip-path="url(#c58)" shape-rendering="crispEdges"/>
<path d="M607.30 292.50 L628.80 292.50 L628.80 311.00 L607.30 311.00 Z M619.60 293.50 L628.40 293.50 L628.40 306.50 L619.60 306.50 Z" fill="none" stroke="#00ffff" stroke-width="0.99"/>
<rect x="613.20" y="293.50" width="6.40" height="7.50" rx="0" fill="#000" stroke="#e6b86e" stroke-width="0.99"/>
<line x1="613.20" y1="293.50" x2="619.60" y2="301.00" stroke="#e6b86e" stroke-width="0.99" />
<line x1="619.60" y1="293.50" x2="613.20" y2="301.00" stroke="#e6b86e" stroke-width="0.99" />
<clipPath id="c59"><path d="M628.80 285.20 L649.80 285.20 L649.80 311.00 L628.80 311.00 Z" clip-rule="evenodd"/></clipPath>
<path d="M627.8 284.2L650.8 261.2M627.8 287.2L650.8 264.2M627.8 290.2L650.8 267.2M627.8 293.2L650.8 270.2M627.8 296.2L650.8 273.2M627.8 299.2L650.8 276.2M627.8 302.2L650.8 279.2M627.8 305.2L650.8 282.2M627.8 308.2L650.8 285.2M627.8 311.2L650.8 288.2M627.8 314.2L650.8 291.2M627.8 317.2L650.8 294.2M627.8 320.2L650.8 297.2M627.8 323.2L650.8 300.2M627.8 326.2L650.8 303.2M627.8 329.2L650.8 306.2M627.8 332.2L650.8 309.2M627.8 335.2L650.8 312.2M627.8 312.8L650.8 335.8M627.8 309.8L650.8 332.8M627.8 306.8L650.8 329.8M627.8 303.8L650.8 326.8M627.8 300.8L650.8 323.8M627.8 297.8L650.8 320.8M627.8 294.8L650.8 317.8M627.8 291.8L650.8 314.8M627.8 288.8L650.8 311.8M627.8 285.8L650.8 308.8M627.8 282.8L650.8 305.8M627.8 279.8L650.8 302.8M627.8 276.8L650.8 299.8M627.8 273.8L650.8 296.8M627.8 270.8L650.8 293.8M627.8 267.8L650.8 290.8M627.8 264.8L650.8 287.8M627.8 261.8L650.8 284.8M627.8 258.8L650.8 281.8" stroke="#90ff00" stroke-width="0.99" fill="none" clip-path="url(#c59)" shape-rendering="crispEdges"/>
<path d="M628.80 285.20 L649.80 285.20 L649.80 311.00 L628.80 311.00 Z" fill="none" stroke="#00ffff" stroke-width="0.99"/>
<circle cx="639.30" cy="298.10" r="7.3" fill="#000" stroke="#00ffff" stroke-width="0.99"/>
<line x1="629.30" y1="298.10" x2="649.30" y2="298.10" stroke="#ff0000" stroke-width="0.99" />
<line x1="639.30" y1="286.70" x2="639.30" y2="309.50" stroke="#ff0000" stroke-width="0.99" />
<clipPath id="c60"><path d="M650.50 284.80 L673.20 284.80 L673.20 311.00 L650.50 311.00 Z M651.00 293.50 L659.30 293.50 L659.30 306.50 L651.00 306.50 Z" clip-rule="evenodd"/></clipPath>
<path d="M649.5 281.5L674.2 256.8M649.5 285.0L674.2 260.3M649.5 288.5L674.2 263.8M649.5 292.0L674.2 267.3M649.5 295.5L674.2 270.8M649.5 299.0L674.2 274.3M649.5 302.5L674.2 277.8M649.5 306.0L674.2 281.3M649.5 309.5L674.2 284.8M649.5 313.0L674.2 288.3M649.5 316.5L674.2 291.8M649.5 320.0L674.2 295.3M649.5 323.5L674.2 298.8M649.5 327.0L674.2 302.3M649.5 330.5L674.2 305.8M649.5 334.0L674.2 309.3M649.5 337.5L674.2 312.8" stroke="#90ff00" stroke-width="0.99" fill="none" clip-path="url(#c60)" shape-rendering="crispEdges"/>
<path d="M650.50 284.80 L673.20 284.80 L673.20 311.00 L650.50 311.00 Z M651.00 293.50 L659.30 293.50 L659.30 306.50 L651.00 306.50 Z" fill="none" stroke="#00ffff" stroke-width="0.99"/>
<rect x="659.30" y="293.50" width="6.70" height="7.50" rx="0" fill="#000" stroke="#e6b86e" stroke-width="0.99"/>
<line x1="659.30" y1="293.50" x2="666.00" y2="301.00" stroke="#e6b86e" stroke-width="0.99" />
<line x1="666.00" y1="293.50" x2="659.30" y2="301.00" stroke="#e6b86e" stroke-width="0.99" />
<clipPath id="c61"><path d="M607.30 311.00 L614.90 311.00 L614.90 323.00 L607.30 323.00 Z" clip-rule="evenodd"/></clipPath>
<path d="M606.3 307.2L615.9 297.6M606.3 310.7L615.9 301.1M606.3 314.2L615.9 304.6M606.3 317.7L615.9 308.1M606.3 321.2L615.9 311.6M606.3 324.7L615.9 315.1M606.3 328.2L615.9 318.6M606.3 331.7L615.9 322.1M606.3 335.2L615.9 325.6" stroke="#90ff00" stroke-width="0.99" fill="none" clip-path="url(#c61)" shape-rendering="crispEdges"/>
<path d="M607.30 311.00 L614.90 311.00 L614.90 323.00 L607.30 323.00 Z" fill="none" stroke="#00ffff" stroke-width="0.99"/>
<line x1="605.00" y1="318.00" x2="617.00" y2="318.00" stroke="#ff0000" stroke-width="0.99" />
<clipPath id="c62"><path d="M663.00 311.00 L670.40 311.00 L670.40 323.00 L663.00 323.00 Z" clip-rule="evenodd"/></clipPath>
<path d="M662.0 307.5L671.4 298.1M662.0 311.0L671.4 301.6M662.0 314.5L671.4 305.1M662.0 318.0L671.4 308.6M662.0 321.5L671.4 312.1M662.0 325.0L671.4 315.6M662.0 328.5L671.4 319.1M662.0 332.0L671.4 322.6M662.0 335.5L671.4 326.1" stroke="#90ff00" stroke-width="0.99" fill="none" clip-path="url(#c62)" shape-rendering="crispEdges"/>
<path d="M663.00 311.00 L670.40 311.00 L670.40 323.00 L663.00 323.00 Z" fill="none" stroke="#00ffff" stroke-width="0.99"/>
<line x1="660.00" y1="318.00" x2="673.00" y2="318.00" stroke="#ff0000" stroke-width="0.99" />
<line x1="655.00" y1="288.50" x2="680.00" y2="288.50" stroke="#ff0000" stroke-width="0.99" stroke-dasharray="5 2"/>
<line x1="650.00" y1="283.50" x2="673.00" y2="283.50" stroke="#ff00ff" stroke-width="0.99" />
<clipPath id="c63"><path d="M600.50 231.00 L628.80 231.00 L628.80 237.40 L600.50 237.40 Z" clip-rule="evenodd"/></clipPath>
<path d="M599.5 230.0L629.8 199.7M599.5 233.5L629.8 203.2M599.5 237.0L629.8 206.7M599.5 240.5L629.8 210.2M599.5 244.0L629.8 213.7M599.5 247.5L629.8 217.2M599.5 251.0L629.8 220.7M599.5 254.5L629.8 224.2M599.5 258.0L629.8 227.7M599.5 261.5L629.8 231.2M599.5 265.0L629.8 234.7M599.5 268.5L629.8 238.2M599.5 272.0L629.8 241.7" stroke="#90ff00" stroke-width="0.99" fill="none" clip-path="url(#c63)" shape-rendering="crispEdges"/>
<path d="M600.50 231.00 L628.80 231.00 L628.80 237.40 L600.50 237.40 Z" fill="none" stroke="#00ffff" stroke-width="0.99"/>
<line x1="626.50" y1="237.40" x2="626.50" y2="285.00" stroke="#00ffff" stroke-width="0.99" />
<line x1="648.00" y1="237.40" x2="648.00" y2="285.00" stroke="#00ffff" stroke-width="0.99" />
<line x1="649.80" y1="237.40" x2="649.80" y2="285.00" stroke="#00ffff" stroke-width="0.99" />
<line x1="673.60" y1="237.40" x2="673.60" y2="285.00" stroke="#00ffff" stroke-width="0.99" />
<line x1="431.50" y1="232.70" x2="431.50" y2="290.30" stroke="#00ffff" stroke-width="0.99" />
<clipPath id="c64"><path d="M675.20 247.50 L675.20 183.00 L676.50 180.50 L678.50 180.00 L680.50 181.00 L681.50 184.00 L681.50 190.00 L684.00 198.00 L689.00 204.00 L696.00 207.50 L720.00 208.50 L746.00 210.50 L752.00 209.50 L757.00 206.00 L760.00 201.00 L761.00 196.00 L761.50 193.50 L764.00 192.50 L767.00 193.50 L767.60 196.00 L767.60 246.20 L675.20 246.20 Z M684.00 212.60 L758.00 212.60 L761.50 216.00 L761.50 238.50 L758.00 241.80 L684.00 241.80 L681.50 238.50 L681.50 216.00 Z" clip-rule="evenodd"/></clipPath>
<path d="M674.2 176.3L768.6 81.9M674.2 179.8L768.6 85.4M674.2 183.3L768.6 88.9M674.2 186.8L768.6 92.4M674.2 190.3L768.6 95.9M674.2 193.8L768.6 99.4M674.2 197.3L768.6 102.9M674.2 200.8L768.6 106.4M674.2 204.3L768.6 109.9M674.2 207.8L768.6 113.4M674.2 211.3L768.6 116.9M674.2 214.8L768.6 120.4M674.2 218.3L768.6 123.9M674.2 221.8L768.6 127.4M674.2 225.3L768.6 130.9M674.2 228.8L768.6 134.4M674.2 232.3L768.6 137.9M674.2 235.8L768.6 141.4M674.2 239.3L768.6 144.9M674.2 242.8L768.6 148.4M674.2 246.3L768.6 151.9M674.2 249.8L768.6 155.4M674.2 253.3L768.6 158.9M674.2 256.8L768.6 162.4M674.2 260.3L768.6 165.9M674.2 263.8L768.6 169.4M674.2 267.3L768.6 172.9M674.2 270.8L768.6 176.4M674.2 274.3L768.6 179.9M674.2 277.8L768.6 183.4M674.2 281.3L768.6 186.9M674.2 284.8L768.6 190.4M674.2 288.3L768.6 193.9M674.2 291.8L768.6 197.4M674.2 295.3L768.6 200.9M674.2 298.8L768.6 204.4M674.2 302.3L768.6 207.9M674.2 305.8L768.6 211.4M674.2 309.3L768.6 214.9M674.2 312.8L768.6 218.4M674.2 316.3L768.6 221.9M674.2 319.8L768.6 225.4M674.2 323.3L768.6 228.9M674.2 326.8L768.6 232.4M674.2 330.3L768.6 235.9M674.2 333.8L768.6 239.4M674.2 337.3L768.6 242.9M674.2 340.8L768.6 246.4M674.2 344.3L768.6 249.9" stroke="#90ff00" stroke-width="0.99" fill="none" clip-path="url(#c64)" shape-rendering="crispEdges"/>
<path d="M675.20 247.50 L675.20 183.00 L676.50 180.50 L678.50 180.00 L680.50 181.00 L681.50 184.00 L681.50 190.00 L684.00 198.00 L689.00 204.00 L696.00 207.50 L720.00 208.50 L746.00 210.50 L752.00 209.50 L757.00 206.00 L760.00 201.00 L761.00 196.00 L761.50 193.50 L764.00 192.50 L767.00 193.50 L767.60 196.00 L767.60 246.20 L675.20 246.20 Z M684.00 212.60 L758.00 212.60 L761.50 216.00 L761.50 238.50 L758.00 241.80 L684.00 241.80 L681.50 238.50 L681.50 216.00 Z" fill="none" stroke="#00ffff" stroke-width="0.99"/>
<clipPath id="c65"><path d="M674.50 274.70 L674.50 339.50 L676.00 342.00 L678.50 342.50 L680.50 341.00 L682.00 338.00 L682.00 332.00 L684.00 323.00 L689.00 318.00 L697.00 314.50 L720.00 314.00 L746.00 313.50 L752.00 314.50 L757.00 318.00 L760.00 322.00 L761.50 327.50 L763.00 329.50 L766.00 329.50 L768.00 327.50 L768.00 281.50 L771.60 281.50 L771.60 274.70 Z M685.00 281.50 L758.00 281.50 L761.50 281.50 L761.50 304.50 L758.00 308.00 L685.00 308.00 L682.00 304.50 L682.00 281.50 Z" clip-rule="evenodd"/></clipPath>
<path d="M673.5 271.5L772.6 172.4M673.5 275.0L772.6 175.9M673.5 278.5L772.6 179.4M673.5 282.0L772.6 182.9M673.5 285.5L772.6 186.4M673.5 289.0L772.6 189.9M673.5 292.5L772.6 193.4M673.5 296.0L772.6 196.9M673.5 299.5L772.6 200.4M673.5 303.0L772.6 203.9M673.5 306.5L772.6 207.4M673.5 310.0L772.6 210.9M673.5 313.5L772.6 214.4M673.5 317.0L772.6 217.9M673.5 320.5L772.6 221.4M673.5 324.0L772.6 224.9M673.5 327.5L772.6 228.4M673.5 331.0L772.6 231.9M673.5 334.5L772.6 235.4M673.5 338.0L772.6 238.9M673.5 341.5L772.6 242.4M673.5 345.0L772.6 245.9M673.5 348.5L772.6 249.4M673.5 352.0L772.6 252.9M673.5 355.5L772.6 256.4M673.5 359.0L772.6 259.9M673.5 362.5L772.6 263.4M673.5 366.0L772.6 266.9M673.5 369.5L772.6 270.4M673.5 373.0L772.6 273.9M673.5 376.5L772.6 277.4M673.5 380.0L772.6 280.9M673.5 383.5L772.6 284.4M673.5 387.0L772.6 287.9M673.5 390.5L772.6 291.4M673.5 394.0L772.6 294.9M673.5 397.5L772.6 298.4M673.5 401.0L772.6 301.9M673.5 404.5L772.6 305.4M673.5 408.0L772.6 308.9M673.5 411.5L772.6 312.4M673.5 415.0L772.6 315.9M673.5 418.5L772.6 319.4M673.5 422.0L772.6 322.9M673.5 425.5L772.6 326.4M673.5 429.0L772.6 329.9M673.5 432.5L772.6 333.4M673.5 436.0L772.6 336.9M673.5 439.5L772.6 340.4M673.5 443.0L772.6 343.9" stroke="#90ff00" stroke-width="0.99" fill="none" clip-path="url(#c65)" shape-rendering="crispEdges"/>
<path d="M674.50 274.70 L674.50 339.50 L676.00 342.00 L678.50 342.50 L680.50 341.00 L682.00 338.00 L682.00 332.00 L684.00 323.00 L689.00 318.00 L697.00 314.50 L720.00 314.00 L746.00 313.50 L752.00 314.50 L757.00 318.00 L760.00 322.00 L761.50 327.50 L763.00 329.50 L766.00 329.50 L768.00 327.50 L768.00 281.50 L771.60 281.50 L771.60 274.70 Z M685.00 281.50 L758.00 281.50 L761.50 281.50 L761.50 304.50 L758.00 308.00 L685.00 308.00 L682.00 304.50 L682.00 281.50 Z" fill="none" stroke="#00ffff" stroke-width="0.99"/>
<line x1="673.60" y1="247.60" x2="768.00" y2="247.60" stroke="#00ffff" stroke-width="0.99" />
<line x1="673.60" y1="247.60" x2="673.60" y2="274.70" stroke="#00ffff" stroke-width="0.99" />
<line x1="672.00" y1="296.10" x2="684.60" y2="296.10" stroke="#ff0000" stroke-width="0.99" />
<line x1="755.20" y1="296.10" x2="771.60" y2="296.10" stroke="#ff0000" stroke-width="0.99" />
<clipPath id="c66"><path d="M708.00 249.00 L772.00 249.00 L772.00 272.30 L760.00 272.30 L752.00 270.00 L749.00 262.00 L750.50 257.00 L745.00 255.00 L712.00 255.00 L708.00 252.00 Z" clip-rule="evenodd"/></clipPath>
<path d="M707.0 275.0L773.0 341.0M707.0 272.0L773.0 338.0M707.0 269.0L773.0 335.0M707.0 266.0L773.0 332.0M707.0 263.0L773.0 329.0M707.0 260.0L773.0 326.0M707.0 257.0L773.0 323.0M707.0 254.0L773.0 320.0M707.0 251.0L773.0 317.0M707.0 248.0L773.0 314.0M707.0 245.0L773.0 311.0M707.0 242.0L773.0 308.0M707.0 239.0L773.0 305.0M707.0 236.0L773.0 302.0M707.0 233.0L773.0 299.0M707.0 230.0L773.0 296.0M707.0 227.0L773.0 293.0M707.0 224.0L773.0 290.0M707.0 221.0L773.0 287.0M707.0 218.0L773.0 284.0M707.0 215.0L773.0 281.0M707.0 212.0L773.0 278.0M707.0 209.0L773.0 275.0M707.0 206.0L773.0 272.0M707.0 203.0L773.0 269.0M707.0 200.0L773.0 266.0M707.0 197.0L773.0 263.0M707.0 194.0L773.0 260.0M707.0 191.0L773.0 257.0M707.0 188.0L773.0 254.0M707.0 185.0L773.0 251.0M707.0 182.0L773.0 248.0" stroke="#90ff00" stroke-width="0.99" fill="none" clip-path="url(#c66)" shape-rendering="crispEdges"/>
<path d="M708.00 249.00 L772.00 249.00 L772.00 272.30 L760.00 272.30 L752.00 270.00 L749.00 262.00 L750.50 257.00 L745.00 255.00 L712.00 255.00 L708.00 252.00 Z" fill="none" stroke="#90ff00" stroke-width="0.99"/>
<clipPath id="c67"><path d="M769.00 240.00 L773.80 240.00 L773.80 281.00 L769.00 281.00 Z" clip-rule="evenodd"/></clipPath>
<path d="M768.0 237.0L774.8 230.2M768.0 240.0L774.8 233.2M768.0 243.0L774.8 236.2M768.0 246.0L774.8 239.2M768.0 249.0L774.8 242.2M768.0 252.0L774.8 245.2M768.0 255.0L774.8 248.2M768.0 258.0L774.8 251.2M768.0 261.0L774.8 254.2M768.0 264.0L774.8 257.2M768.0 267.0L774.8 260.2M768.0 270.0L774.8 263.2M768.0 273.0L774.8 266.2M768.0 276.0L774.8 269.2M768.0 279.0L774.8 272.2M768.0 282.0L774.8 275.2M768.0 285.0L774.8 278.2M768.0 288.0L774.8 281.2M768.0 291.0L774.8 284.2M768.0 282.0L774.8 288.8M768.0 279.0L774.8 285.8M768.0 276.0L774.8 282.8M768.0 273.0L774.8 279.8M768.0 270.0L774.8 276.8M768.0 267.0L774.8 273.8M768.0 264.0L774.8 270.8M768.0 261.0L774.8 267.8M768.0 258.0L774.8 264.8M768.0 255.0L774.8 261.8M768.0 252.0L774.8 258.8M768.0 249.0L774.8 255.8M768.0 246.0L774.8 252.8M768.0 243.0L774.8 249.8M768.0 240.0L774.8 246.8M768.0 237.0L774.8 243.8M768.0 234.0L774.8 240.8M768.0 231.0L774.8 237.8" stroke="#90ff00" stroke-width="0.99" fill="none" clip-path="url(#c67)" shape-rendering="crispEdges"/>
<path d="M769.00 240.00 L773.80 240.00 L773.80 281.00 L769.00 281.00 Z" fill="none" stroke="#90ff00" stroke-width="0.99"/>
<rect x="759.40" y="267.00" width="18.30" height="5.50" rx="0" fill="#000" stroke="#00ffff" stroke-width="0.99"/>
<line x1="756.00" y1="269.80" x2="781.00" y2="269.80" stroke="#ff0000" stroke-width="0.99" />
<line x1="762.00" y1="268.00" x2="772.00" y2="268.00" stroke="#ff00ff" stroke-width="0.99" />
<clipPath id="c68"><path d="M275.20 425.90 L284.00 415.20 L291.60 415.20 L300.50 417.00 L313.00 422.00 L315.00 425.90 L309.30 428.40 L285.30 428.40 Z" clip-rule="evenodd"/></clipPath>
<path d="M274.2 409.4L316.0 367.6M274.2 415.5L316.0 373.7M274.2 421.6L316.0 379.8M274.2 427.6L316.0 385.8M274.2 433.7L316.0 391.9M274.2 439.7L316.0 397.9M274.2 445.7L316.0 403.9M274.2 451.8L316.0 410.0M274.2 457.8L316.0 416.0M274.2 463.9L316.0 422.1M274.2 469.9L316.0 428.1M274.2 476.0L316.0 434.2" stroke="#90ff00" stroke-width="0.99" fill="none" clip-path="url(#c68)" shape-rendering="crispEdges"/>
<path d="M275.20 425.90 L284.00 415.20 L291.60 415.20 L300.50 417.00 L313.00 422.00 L315.00 425.90 L309.30 428.40 L285.30 428.40 Z" fill="none" stroke="#66a3ff" stroke-width="0.99"/>
<rect x="291.20" y="415.50" width="9.30" height="13.50" rx="0" fill="#000" stroke="#00ffff" stroke-width="0.99"/>
<rect x="292.00" y="422.00" width="8.00" height="4.00" rx="0" fill="#00ffff" stroke="#00ffff" stroke-width="0.99"/>
<rect x="288.50" y="429.70" width="13.90" height="5.70" rx="0" fill="none" stroke="#00ffff" stroke-width="0.99"/>
<line x1="291.00" y1="432.00" x2="300.00" y2="432.00" stroke="#00ffff" stroke-width="0.99" />
<line x1="293.00" y1="435.40" x2="293.00" y2="432.00" stroke="#00ffff" stroke-width="0.99" />
<line x1="297.50" y1="435.40" x2="297.50" y2="432.00" stroke="#00ffff" stroke-width="0.99" />
<line x1="299.60" y1="417.00" x2="299.60" y2="429.00" stroke="#ff00ff" stroke-width="0.99" />
<line x1="295.40" y1="414.00" x2="295.40" y2="439.50" stroke="#ff0000" stroke-width="0.99" />
<line x1="711.00" y1="247.30" x2="770.00" y2="247.30" stroke="#ffffff" stroke-width="0.99" />
<line x1="131.75" y1="92.80" x2="139.25" y2="92.80" stroke="#00ffff" stroke-width="0.99" />
<text x="135.50" y="91.40" font-size="8.3" fill="#ffffff" text-anchor="middle" textLength="3.50" lengthAdjust="spacingAndGlyphs" stroke="#fff" stroke-width="0.4">4</text>
<line x1="139.25" y1="92.80" x2="178.60" y2="225.30" stroke="#ffffff" stroke-width="0.99" />
<line x1="166.25" y1="92.80" x2="173.75" y2="92.80" stroke="#00ffff" stroke-width="0.99" />
<text x="170.00" y="91.40" font-size="8.3" fill="#ffffff" text-anchor="middle" textLength="3.50" lengthAdjust="spacingAndGlyphs" stroke="#fff" stroke-width="0.4">5</text>
<line x1="173.75" y1="92.80" x2="205.70" y2="226.00" stroke="#ffffff" stroke-width="0.99" />
<line x1="200.75" y1="92.80" x2="208.25" y2="92.80" stroke="#00ffff" stroke-width="0.99" />
<text x="204.50" y="91.40" font-size="8.3" fill="#ffffff" text-anchor="middle" textLength="3.50" lengthAdjust="spacingAndGlyphs" stroke="#fff" stroke-width="0.4">6</text>
<line x1="208.25" y1="92.80" x2="238.30" y2="195.70" stroke="#ffffff" stroke-width="0.99" />
<line x1="235.25" y1="92.80" x2="242.75" y2="92.80" stroke="#00ffff" stroke-width="0.99" />
<text x="239.00" y="91.40" font-size="8.3" fill="#ffffff" text-anchor="middle" textLength="3.50" lengthAdjust="spacingAndGlyphs" stroke="#fff" stroke-width="0.4">7</text>
<line x1="235.25" y1="92.80" x2="245.50" y2="157.00" stroke="#ffffff" stroke-width="0.99" />
<line x1="270.25" y1="92.80" x2="277.75" y2="92.80" stroke="#00ffff" stroke-width="0.99" />
<text x="274.00" y="91.40" font-size="8.3" fill="#ffffff" text-anchor="middle" textLength="3.50" lengthAdjust="spacingAndGlyphs" stroke="#fff" stroke-width="0.4">8</text>
<line x1="277.75" y1="92.80" x2="303.70" y2="251.20" stroke="#ffffff" stroke-width="0.99" />
<line x1="304.25" y1="92.80" x2="311.75" y2="92.80" stroke="#00ffff" stroke-width="0.99" />
<text x="308.00" y="91.40" font-size="8.3" fill="#ffffff" text-anchor="middle" textLength="3.50" lengthAdjust="spacingAndGlyphs" stroke="#fff" stroke-width="0.4">9</text>
<line x1="311.75" y1="92.80" x2="335.30" y2="186.00" stroke="#ffffff" stroke-width="0.99" />
<line x1="331.75" y1="92.80" x2="339.25" y2="92.80" stroke="#00ffff" stroke-width="0.99" />
<text x="335.50" y="91.40" font-size="8.3" fill="#ffffff" text-anchor="middle" textLength="7.00" lengthAdjust="spacingAndGlyphs" stroke="#fff" stroke-width="0.4">10</text>
<line x1="339.25" y1="92.80" x2="440.00" y2="224.00" stroke="#ffffff" stroke-width="0.99" />
<line x1="366.75" y1="92.80" x2="374.25" y2="92.80" stroke="#00ffff" stroke-width="0.99" />
<text x="370.50" y="91.40" font-size="8.3" fill="#ffffff" text-anchor="middle" textLength="7.00" lengthAdjust="spacingAndGlyphs" stroke="#fff" stroke-width="0.4">11</text>
<line x1="374.25" y1="92.80" x2="457.00" y2="226.60" stroke="#ffffff" stroke-width="0.99" />
<line x1="400.75" y1="92.80" x2="408.25" y2="92.80" stroke="#00ffff" stroke-width="0.99" />
<text x="404.50" y="91.40" font-size="8.3" fill="#ffffff" text-anchor="middle" textLength="7.00" lengthAdjust="spacingAndGlyphs" stroke="#fff" stroke-width="0.4">12</text>
<line x1="408.25" y1="92.80" x2="480.00" y2="148.00" stroke="#ffffff" stroke-width="0.99" />
<line x1="436.25" y1="92.80" x2="443.75" y2="92.80" stroke="#00ffff" stroke-width="0.99" />
<text x="440.00" y="91.40" font-size="8.3" fill="#ffffff" text-anchor="middle" textLength="7.00" lengthAdjust="spacingAndGlyphs" stroke="#fff" stroke-width="0.4">13</text>
<line x1="443.75" y1="92.80" x2="469.00" y2="124.00" stroke="#ffffff" stroke-width="0.99" />
<line x1="470.25" y1="92.80" x2="477.75" y2="92.80" stroke="#00ffff" stroke-width="0.99" />
<text x="474.00" y="91.40" font-size="8.3" fill="#ffffff" text-anchor="middle" textLength="7.00" lengthAdjust="spacingAndGlyphs" stroke="#fff" stroke-width="0.4">14</text>
<line x1="477.75" y1="92.80" x2="489.90" y2="223.50" stroke="#ffffff" stroke-width="0.99" />
<line x1="512.25" y1="92.80" x2="519.75" y2="92.80" stroke="#00ffff" stroke-width="0.99" />
<text x="516.00" y="91.40" font-size="8.3" fill="#ffffff" text-anchor="middle" textLength="7.00" lengthAdjust="spacingAndGlyphs" stroke="#fff" stroke-width="0.4">15</text>
<line x1="519.75" y1="92.80" x2="532.70" y2="206.30" stroke="#ffffff" stroke-width="0.99" />
<line x1="595.55" y1="92.80" x2="603.05" y2="92.80" stroke="#00ffff" stroke-width="0.99" />
<text x="599.30" y="91.40" font-size="8.3" fill="#ffffff" text-anchor="middle" textLength="7.00" lengthAdjust="spacingAndGlyphs" stroke="#fff" stroke-width="0.4">16</text>
<line x1="595.55" y1="92.80" x2="539.00" y2="231.00" stroke="#ffffff" stroke-width="0.99" />
<line x1="636.75" y1="92.80" x2="644.25" y2="92.80" stroke="#00ffff" stroke-width="0.99" />
<text x="640.50" y="91.40" font-size="8.3" fill="#ffffff" text-anchor="middle" textLength="7.00" lengthAdjust="spacingAndGlyphs" stroke="#fff" stroke-width="0.4">17</text>
<line x1="636.75" y1="92.80" x2="536.00" y2="234.50" stroke="#ffffff" stroke-width="0.99" />
<line x1="678.25" y1="92.80" x2="685.75" y2="92.80" stroke="#00ffff" stroke-width="0.99" />
<text x="682.00" y="91.40" font-size="8.3" fill="#ffffff" text-anchor="middle" textLength="7.00" lengthAdjust="spacingAndGlyphs" stroke="#fff" stroke-width="0.4">18</text>
<line x1="678.25" y1="92.80" x2="568.60" y2="216.30" stroke="#ffffff" stroke-width="0.99" />
<line x1="719.75" y1="92.80" x2="727.25" y2="92.80" stroke="#00ffff" stroke-width="0.99" />
<text x="723.50" y="91.40" font-size="8.3" fill="#ffffff" text-anchor="middle" textLength="7.00" lengthAdjust="spacingAndGlyphs" stroke="#fff" stroke-width="0.4">19</text>
<line x1="719.75" y1="92.80" x2="612.00" y2="214.60" stroke="#ffffff" stroke-width="0.99" />
<line x1="754.55" y1="92.80" x2="762.05" y2="92.80" stroke="#00ffff" stroke-width="0.99" />
<text x="758.30" y="91.40" font-size="8.3" fill="#ffffff" text-anchor="middle" textLength="7.00" lengthAdjust="spacingAndGlyphs" stroke="#fff" stroke-width="0.4">20</text>
<line x1="754.55" y1="92.80" x2="665.60" y2="210.20" stroke="#ffffff" stroke-width="0.99" />
<line x1="788.25" y1="92.80" x2="795.75" y2="92.80" stroke="#00ffff" stroke-width="0.99" />
<text x="792.00" y="91.40" font-size="8.3" fill="#ffffff" text-anchor="middle" textLength="7.00" lengthAdjust="spacingAndGlyphs" stroke="#fff" stroke-width="0.4">21</text>
<line x1="788.25" y1="92.80" x2="655.50" y2="233.60" stroke="#ffffff" stroke-width="0.99" />
<line x1="807.75" y1="133.50" x2="815.25" y2="133.50" stroke="#00ffff" stroke-width="0.99" />
<text x="811.50" y="132.10" font-size="8.3" fill="#ffffff" text-anchor="middle" textLength="7.00" lengthAdjust="spacingAndGlyphs" stroke="#fff" stroke-width="0.4">22</text>
<line x1="807.75" y1="133.50" x2="667.50" y2="233.00" stroke="#ffffff" stroke-width="0.99" />
<line x1="807.75" y1="168.50" x2="815.25" y2="168.50" stroke="#00ffff" stroke-width="0.99" />
<text x="811.50" y="167.10" font-size="8.3" fill="#ffffff" text-anchor="middle" textLength="7.00" lengthAdjust="spacingAndGlyphs" stroke="#fff" stroke-width="0.4">23</text>
<line x1="807.75" y1="168.50" x2="765.90" y2="202.60" stroke="#ffffff" stroke-width="0.99" />
<line x1="807.75" y1="203.00" x2="815.25" y2="203.00" stroke="#00ffff" stroke-width="0.99" />
<text x="811.50" y="201.60" font-size="8.3" fill="#ffffff" text-anchor="middle" textLength="7.00" lengthAdjust="spacingAndGlyphs" stroke="#fff" stroke-width="0.4">24</text>
<line x1="807.75" y1="203.00" x2="772.30" y2="241.20" stroke="#ffffff" stroke-width="0.99" />
<line x1="807.75" y1="237.30" x2="815.25" y2="237.30" stroke="#00ffff" stroke-width="0.99" />
<text x="811.50" y="235.90" font-size="8.3" fill="#ffffff" text-anchor="middle" textLength="7.00" lengthAdjust="spacingAndGlyphs" stroke="#fff" stroke-width="0.4">25</text>
<line x1="807.75" y1="237.30" x2="762.60" y2="249.80" stroke="#ffffff" stroke-width="0.99" />
<line x1="807.75" y1="271.50" x2="815.25" y2="271.50" stroke="#00ffff" stroke-width="0.99" />
<text x="811.50" y="270.10" font-size="8.3" fill="#ffffff" text-anchor="middle" textLength="7.00" lengthAdjust="spacingAndGlyphs" stroke="#fff" stroke-width="0.4">26</text>
<line x1="807.75" y1="271.50" x2="774.40" y2="272.90" stroke="#ffffff" stroke-width="0.99" />
<line x1="807.75" y1="306.00" x2="815.25" y2="306.00" stroke="#00ffff" stroke-width="0.99" />
<text x="811.50" y="304.60" font-size="8.3" fill="#ffffff" text-anchor="middle" textLength="7.00" lengthAdjust="spacingAndGlyphs" stroke="#fff" stroke-width="0.4">27</text>
<line x1="815.00" y1="271.50" x2="815.00" y2="300.00" stroke="#ffffff" stroke-width="0.99" />
<line x1="108.45" y1="194.00" x2="115.95" y2="194.00" stroke="#00ffff" stroke-width="0.99" />
<text x="112.20" y="192.60" font-size="8.3" fill="#ffffff" text-anchor="middle" textLength="3.50" lengthAdjust="spacingAndGlyphs" stroke="#fff" stroke-width="0.4">3</text>
<line x1="115.95" y1="194.00" x2="166.60" y2="238.50" stroke="#ffffff" stroke-width="0.99" />
<line x1="108.45" y1="235.70" x2="115.95" y2="235.70" stroke="#00ffff" stroke-width="0.99" />
<text x="112.20" y="234.30" font-size="8.3" fill="#ffffff" text-anchor="middle" textLength="3.50" lengthAdjust="spacingAndGlyphs" stroke="#fff" stroke-width="0.4">2</text>
<line x1="115.95" y1="235.70" x2="163.40" y2="244.20" stroke="#ffffff" stroke-width="0.99" />
<line x1="107.85" y1="277.50" x2="115.35" y2="277.50" stroke="#00ffff" stroke-width="0.99" />
<text x="111.60" y="276.10" font-size="8.3" fill="#ffffff" text-anchor="middle" textLength="3.50" lengthAdjust="spacingAndGlyphs" stroke="#fff" stroke-width="0.4">1</text>
<line x1="115.35" y1="277.50" x2="174.20" y2="267.60" stroke="#ffffff" stroke-width="0.99" />
<line x1="109.75" y1="312.00" x2="117.25" y2="312.00" stroke="#00ffff" stroke-width="0.99" />
<text x="113.50" y="310.60" font-size="8.3" fill="#ffffff" text-anchor="middle" textLength="7.00" lengthAdjust="spacingAndGlyphs" stroke="#fff" stroke-width="0.4">47</text>
<line x1="117.25" y1="312.00" x2="145.80" y2="303.60" stroke="#ffffff" stroke-width="0.99" />
<line x1="109.75" y1="346.00" x2="117.25" y2="346.00" stroke="#00ffff" stroke-width="0.99" />
<text x="113.50" y="344.60" font-size="8.3" fill="#ffffff" text-anchor="middle" textLength="7.00" lengthAdjust="spacingAndGlyphs" stroke="#fff" stroke-width="0.4">46</text>
<line x1="117.25" y1="346.00" x2="149.50" y2="328.80" stroke="#ffffff" stroke-width="0.99" />
<line x1="109.75" y1="381.50" x2="117.25" y2="381.50" stroke="#00ffff" stroke-width="0.99" />
<text x="113.50" y="380.10" font-size="8.3" fill="#ffffff" text-anchor="middle" textLength="7.00" lengthAdjust="spacingAndGlyphs" stroke="#fff" stroke-width="0.4">45</text>
<line x1="109.75" y1="416.00" x2="117.25" y2="416.00" stroke="#00ffff" stroke-width="0.99" />
<text x="113.50" y="414.60" font-size="8.3" fill="#ffffff" text-anchor="middle" textLength="7.00" lengthAdjust="spacingAndGlyphs" stroke="#fff" stroke-width="0.4">44</text>
<line x1="117.25" y1="416.00" x2="223.70" y2="283.50" stroke="#ffffff" stroke-width="0.99" />
<line x1="115.80" y1="346.00" x2="115.80" y2="375.50" stroke="#ffffff" stroke-width="0.99" />
<line x1="109.75" y1="464.50" x2="117.25" y2="464.50" stroke="#00ffff" stroke-width="0.99" />
<text x="113.50" y="463.10" font-size="8.3" fill="#ffffff" text-anchor="middle" textLength="7.00" lengthAdjust="spacingAndGlyphs" stroke="#fff" stroke-width="0.4">43</text>
<line x1="117.25" y1="464.50" x2="213.60" y2="296.70" stroke="#ffffff" stroke-width="0.99" />
<line x1="144.05" y1="464.50" x2="151.55" y2="464.50" stroke="#00ffff" stroke-width="0.99" />
<text x="147.80" y="463.10" font-size="8.3" fill="#ffffff" text-anchor="middle" textLength="7.00" lengthAdjust="spacingAndGlyphs" stroke="#fff" stroke-width="0.4">42</text>
<line x1="178.85" y1="464.50" x2="186.35" y2="464.50" stroke="#00ffff" stroke-width="0.99" />
<text x="182.60" y="463.10" font-size="8.3" fill="#ffffff" text-anchor="middle" textLength="7.00" lengthAdjust="spacingAndGlyphs" stroke="#fff" stroke-width="0.4">41</text>
<line x1="186.35" y1="464.50" x2="232.00" y2="311.00" stroke="#ffffff" stroke-width="0.99" />
<line x1="213.25" y1="464.50" x2="220.75" y2="464.50" stroke="#00ffff" stroke-width="0.99" />
<text x="217.00" y="463.10" font-size="8.3" fill="#ffffff" text-anchor="middle" textLength="7.00" lengthAdjust="spacingAndGlyphs" stroke="#fff" stroke-width="0.4">40</text>
<line x1="220.75" y1="464.50" x2="244.00" y2="275.00" stroke="#ffffff" stroke-width="0.99" />
<line x1="282.55" y1="464.50" x2="290.05" y2="464.50" stroke="#00ffff" stroke-width="0.99" />
<text x="286.30" y="463.10" font-size="8.3" fill="#ffffff" text-anchor="middle" textLength="7.00" lengthAdjust="spacingAndGlyphs" stroke="#fff" stroke-width="0.4">39</text>
<line x1="290.05" y1="464.50" x2="295.30" y2="439.00" stroke="#ffffff" stroke-width="0.99" />
<line x1="317.75" y1="464.50" x2="325.25" y2="464.50" stroke="#00ffff" stroke-width="0.99" />
<text x="321.50" y="463.10" font-size="8.3" fill="#ffffff" text-anchor="middle" textLength="7.00" lengthAdjust="spacingAndGlyphs" stroke="#fff" stroke-width="0.4">38</text>
<line x1="325.25" y1="464.50" x2="477.80" y2="237.60" stroke="#ffffff" stroke-width="0.99" />
<line x1="351.75" y1="464.50" x2="359.25" y2="464.50" stroke="#00ffff" stroke-width="0.99" />
<text x="355.50" y="463.10" font-size="8.3" fill="#ffffff" text-anchor="middle" textLength="7.00" lengthAdjust="spacingAndGlyphs" stroke="#fff" stroke-width="0.4">37</text>
<line x1="359.25" y1="464.50" x2="437.50" y2="315.80" stroke="#ffffff" stroke-width="0.99" />
<line x1="386.25" y1="464.50" x2="393.75" y2="464.50" stroke="#00ffff" stroke-width="0.99" />
<text x="390.00" y="463.10" font-size="8.3" fill="#ffffff" text-anchor="middle" textLength="7.00" lengthAdjust="spacingAndGlyphs" stroke="#fff" stroke-width="0.4">36</text>
<line x1="393.75" y1="464.50" x2="462.10" y2="352.70" stroke="#ffffff" stroke-width="0.99" />
<line x1="421.05" y1="464.50" x2="428.55" y2="464.50" stroke="#00ffff" stroke-width="0.99" />
<text x="424.80" y="463.10" font-size="8.3" fill="#ffffff" text-anchor="middle" textLength="7.00" lengthAdjust="spacingAndGlyphs" stroke="#fff" stroke-width="0.4">35</text>
<line x1="428.55" y1="464.50" x2="466.50" y2="350.80" stroke="#ffffff" stroke-width="0.99" />
<line x1="455.25" y1="464.50" x2="462.75" y2="464.50" stroke="#00ffff" stroke-width="0.99" />
<text x="459.00" y="463.10" font-size="8.3" fill="#ffffff" text-anchor="middle" textLength="7.00" lengthAdjust="spacingAndGlyphs" stroke="#fff" stroke-width="0.4">34</text>
<line x1="462.75" y1="464.50" x2="489.90" y2="343.90" stroke="#ffffff" stroke-width="0.99" />
<line x1="489.75" y1="464.50" x2="497.25" y2="464.50" stroke="#00ffff" stroke-width="0.99" />
<text x="493.50" y="463.10" font-size="8.3" fill="#ffffff" text-anchor="middle" textLength="7.00" lengthAdjust="spacingAndGlyphs" stroke="#fff" stroke-width="0.4">33</text>
<line x1="497.25" y1="464.50" x2="503.80" y2="383.60" stroke="#ffffff" stroke-width="0.99" />
<line x1="524.25" y1="464.50" x2="531.75" y2="464.50" stroke="#00ffff" stroke-width="0.99" />
<text x="528.00" y="463.10" font-size="8.3" fill="#ffffff" text-anchor="middle" textLength="7.00" lengthAdjust="spacingAndGlyphs" stroke="#fff" stroke-width="0.4">32</text>
<line x1="531.75" y1="464.50" x2="543.00" y2="314.00" stroke="#ffffff" stroke-width="0.99" />
<line x1="558.95" y1="464.50" x2="566.45" y2="464.50" stroke="#00ffff" stroke-width="0.99" />
<text x="562.70" y="463.10" font-size="8.3" fill="#ffffff" text-anchor="middle" textLength="7.00" lengthAdjust="spacingAndGlyphs" stroke="#fff" stroke-width="0.4">31</text>
<path d="M151.5 464.5 L164 469.5 L178.8 464.5" fill="none" stroke="#ffffff" stroke-width="0.99" />
<path d="M531.8 464.5 L545 469.5 L559 464.5" fill="none" stroke="#ffffff" stroke-width="0.99" />
<line x1="610.25" y1="363.50" x2="617.75" y2="363.50" stroke="#00ffff" stroke-width="0.99" />
<text x="614.00" y="362.10" font-size="8.3" fill="#ffffff" text-anchor="middle" textLength="7.00" lengthAdjust="spacingAndGlyphs" stroke="#fff" stroke-width="0.4">30</text>
<line x1="610.25" y1="363.50" x2="512.00" y2="235.50" stroke="#ffffff" stroke-width="0.99" />
<line x1="637.25" y1="363.50" x2="644.75" y2="363.50" stroke="#00ffff" stroke-width="0.99" />
<text x="641.00" y="362.10" font-size="8.3" fill="#ffffff" text-anchor="middle" textLength="7.00" lengthAdjust="spacingAndGlyphs" stroke="#fff" stroke-width="0.4">29</text>
<line x1="637.25" y1="363.50" x2="555.30" y2="238.60" stroke="#ffffff" stroke-width="0.99" />
<line x1="665.75" y1="363.50" x2="673.25" y2="363.50" stroke="#00ffff" stroke-width="0.99" />
<text x="669.50" y="362.10" font-size="8.3" fill="#ffffff" text-anchor="middle" textLength="7.00" lengthAdjust="spacingAndGlyphs" stroke="#fff" stroke-width="0.4">28</text>
<line x1="665.75" y1="363.50" x2="615.00" y2="292.00" stroke="#ffffff" stroke-width="0.99" />
</svg>
</body></html>
